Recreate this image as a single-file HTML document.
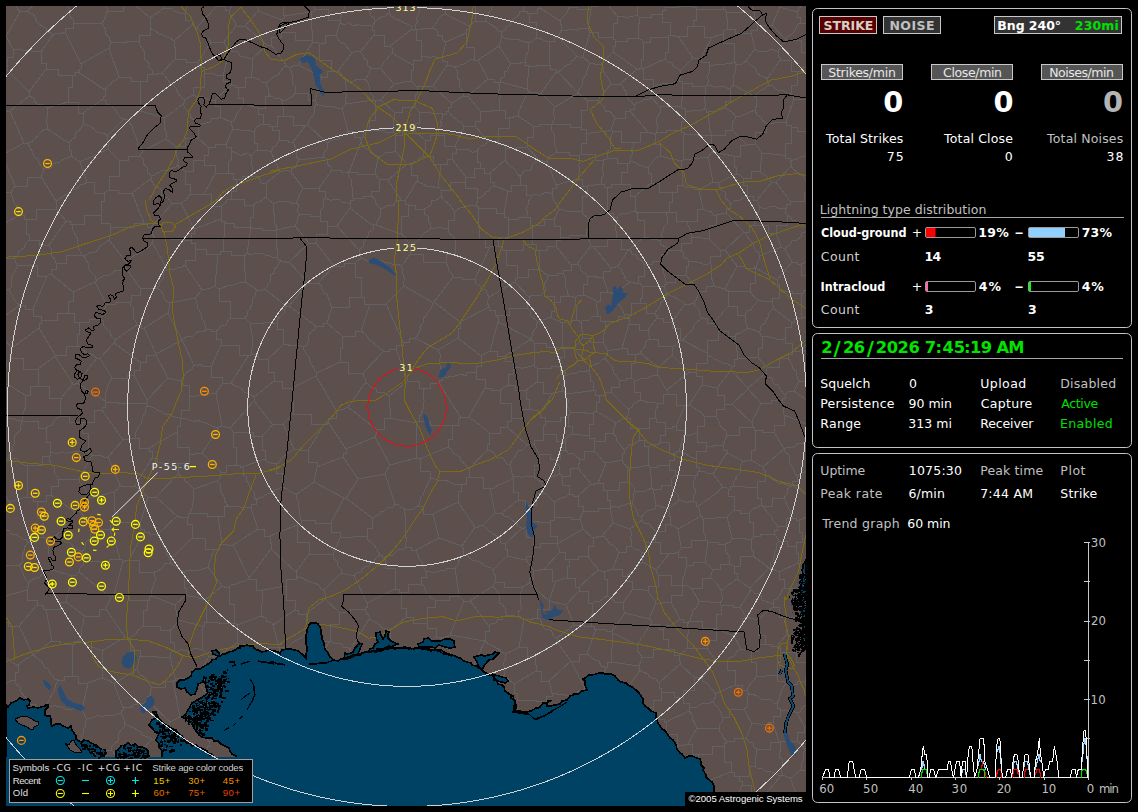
<!DOCTYPE html>
<html lang="en">
<head>
<meta charset="utf-8">
<title>NexStorm Lightning Map</title>
<style>
html,body{margin:0;padding:0;background:#000;}
body{width:1138px;height:812px;overflow:hidden;position:relative;font-family:"DejaVu Sans","Liberation Sans",sans-serif;}
svg{position:absolute;left:0;top:0;display:block;}
text{white-space:pre;}
</style>
</head>
<body>
<svg width="1138" height="812" viewBox="0 0 1138 812">
<rect width="1138" height="812" fill="#000"/>
<defs><clipPath id="mapclip"><rect x="6" y="6" width="800" height="800"/></clipPath></defs>
<g id="map" clip-path="url(#mapclip)">
<g shape-rendering="crispEdges">
<rect x="6" y="6" width="800" height="800" fill="#5d4f4b"/>
<path d="M-24 8L4 -7M4 -7L6 -4L10 -0L11 4L15 4L17 8L20 12M-16 35L6 36M20 12L6 36M340 362V348H342V336M340 362H348V373H363M363 373L384 351M384 351L380 349L379 347L375 345L373 342L369 340L367 336L365 334L361 331M361 331H355V336H342M61 416H69V422H82M61 416L57 418L54 421L52 425L49 426L46 428M46 428V442H50V452M50 452L54 453L59 453L63 452L67 454L68 453L73 452L76 451L82 452L86 453L88 451M82 422V433H88V451M25 395L25 399L25 401L26 406L24 411L23 413L22 419L23 421M25 395H30V386H38M23 421H38V428H46M61 416L60 412L60 408L60 405L61 400L61 398M38 386H49V398H61M77 383L105 401M77 383L97 358M97 358H98V358H100M100 358L112 378M105 401L105 398L106 392L107 389L108 385L110 381L112 378M102 410H94V422H82M102 410V407H105V402M73 384L61 398M73 384H75V383H77M105 402V402H105V401M1 515L-44 504M1 515V509H9V502M9 502L7 499L6 496L4 493L1 489L-1 486L-3 482M695 475L675 476M695 475L695 478L693 484L694 488L696 491L695 493L693 497L694 502M694 502L689 501L688 503L683 501L679 500M679 500L678 495L675 492L673 489L671 485M671 485L672 479L675 476M794 99L798 100L802 99L806 100L808 99L813 98L816 97L819 98M794 99L786 122M806 131L817 126M806 131H797V127H791M791 127V125H786V122M386 304L403 342M386 304H380V304H370M384 351H389V349H396M370 304L361 331M396 349V345H403V342M386 304L404 286M415 338H409V342H403M415 338L417 336L420 331L421 327L420 327L423 323L423 318L426 316L427 313L430 310L432 306L432 302M404 286L432 302M252 354H250V355H249M252 354H258V359H268M268 359V372H274V381M249 355L231 383M231 383L235 386L237 386L241 388L244 392L247 393L251 395L254 397M254 397L274 381M168 313L169 309L170 303M168 313L182 340M170 303L195 298M195 298L196 300L197 304L197 307L200 312L202 316L201 318L204 321L205 325L206 329M182 340L186 337L190 336L193 336L196 333L199 331L204 332L206 329M249 355H239V345H221M222 384L228 383L231 383M222 384V377H211V367M211 367L221 345M7 362L4 362L-2 361L-5 361L-7 359L-12 360L-15 359L-18 358L-23 359M7 362L4 382M4 382L0 386L-4 386L-7 390L-10 394L-13 395M73 292L95 282M73 292V301H68V313M68 313H74V322H79M79 322H89V319H100M95 282L106 304M100 319L103 316L104 313L105 308L106 304M115 340V341H114V343M115 340L112 337L110 334L110 332L107 329L103 325L103 321L100 319M114 343L100 358M97 358L94 356L91 354L87 353L83 350L80 347L77 346M77 346V334H79V322M137 325L115 340M137 325L136 322L133 317L133 313L133 308L130 305L131 302M131 302H115V304H106M114 343L140 362M112 378H127V375H134M140 362V370H134V375M146 403V402H147V400M146 403H118V402H105M147 400L134 375M-18 447L6 458M22 422L19 420L16 420L11 418L7 419L3 418L-1 418M22 422L21 425L20 431L17 433L15 436L14 439L15 442L12 448L12 451L10 453L8 458M8 458H7V458H6M-3 482L6 458M25 395L4 382M23 421L23 421L22 422M50 452V455H49V456M49 456H42V465H27M27 465L24 465L18 461L17 459L13 458L8 458M9 502L27 497M27 497L27 465M27 497H33V501H37M49 456L49 459L51 464L54 467L54 469L54 473L57 476L58 479M37 501H46V495H51M58 479V486H51V495M92 455L90 454L88 451M92 455L79 479M58 479L79 479M1 515V519H3V528M-15 549L3 528M-8 325L20 305M20 305L17 303L14 300L13 297L10 292L9 289M-16 290L9 289M11 358L12 348M11 358H23V369H38M12 348L39 328M39 328L55 355M38 369L55 356M55 356V355H55V355M-8 325L12 348M7 362L11 358M38 386V376H38V369M20 305H25V309H33M33 309V316H41V320M41 320V323H39V328M77 346H66V355H55M41 320H57V313H68M73 384L55 356M435 600V607H427V623M435 600L431 598L429 595L426 592L424 586L421 584M427 623H413V617H406M421 584H408V592H401M406 617V608H401V592M678 529L701 516M678 529L670 524M694 502H696V506H698M679 500L676 503L672 506L669 509M670 524V516H669V509M698 506L701 516M695 475H697V471H699M713 474L709 473L706 473L704 471L699 471M713 474L723 487M698 506L699 505L704 502L707 500L710 498L712 496L714 495L718 492L720 489L723 487M671 485H661V489H653M669 509L656 505M653 489L656 505M687 221H676V212H669M687 221H697V209H703M672 192V202H669V212M672 192H677V185H682M703 209L699 190M682 185L685 187L687 187L692 187L695 189L699 190M404 286L403 283L405 279L403 274L402 268L401 266M410 254L408 257L404 263L401 266M410 254H423V262H446M434 302L453 277M434 302H433V302H432M446 262L448 267L448 270L452 274L453 277M701 58H698V58H693M701 58L712 37M693 26H704V37H712M693 26H687V36H678M693 58L678 36M827 481H816V470H809M815 500L792 485M809 470L797 476M792 485V481H797V476M815 446L815 450L813 452L813 456L811 458L812 462L810 468L809 470M39 816L41 812L41 809L39 806L42 800L43 798L42 794L43 790L43 787L44 782L44 779M10 805V790H15V780M10 805V809H17V813M15 780H29V779H44M-23 798L10 805M-2 766H1V765H3M3 765L15 780M823 792H813V796H797M804 819H799V809H794M797 796L797 799L796 805L794 809M822 771L819 772L813 772L808 771L806 771L801 770M801 770L801 768L802 763L804 759L803 757L804 752L804 748M804 748H816V748H827M797 796L790 778M790 778L793 777L797 773L799 771L801 770M281 32H295V40H312M281 32V24H282V20M282 20L284 18L284 16M284 16L311 12M311 12V30H312V40M314 9L314 5L313 -0L315 -4L315 -7M314 9L314 11L311 12M283 -8L284 16M313 42L298 65M313 42L312 40L312 40M298 65H292V67H289M281 32V37H271V45M289 67L287 66M271 45L287 66M340 362L317 373M317 373L315 371L314 368L311 364L309 359L309 357L306 354L304 350L303 347M342 336L327 323M303 347L307 345L309 339L308 337L311 332L315 329L316 326M327 323H323V326H316M131 302V295H140V288M96 280V281H95V282M96 280L100 278L103 276L104 275L109 275L113 273L115 270L120 271L122 270L125 267M125 267L140 288M168 313L144 328M170 303L166 301L163 296L164 295L160 290L157 288M144 328H141V325H137M157 288H151V288H140M553 393L540 413M553 393H543V382H537M529 409V399H526V390M529 409L533 410L537 410L540 413M526 390L537 382M485 388H491V390H500M485 388L469 417M500 390V403H511V418M469 417L471 419L475 421L477 423L480 425L483 428L485 429L489 433M489 433H500V427H507M511 418V421H507V427M476 373V379H485V388M476 373L473 372L467 373L466 376L461 374L458 375L455 376L451 376L446 378L442 377M461 418L439 383M461 418L465 417L469 417M442 377V380H439V383M529 409H522V418H511M508 385H515V390H526M508 385L500 390M216 393L222 426M216 393L222 384M222 426L225 427L230 428M254 397V399H254V401M230 428L254 401M268 359L283 345M317 373L316 376M283 345L287 344L290 346L294 345L299 345L303 347M274 381H282V388H292M316 376L292 388M363 373L363 376L366 379L365 383M348 407L365 383M348 407L344 409L340 410L336 410M316 376L336 410M215 286L211 288L207 289L202 290M215 286L217 288L219 288M195 298L202 290M216 331H211V329H206M216 331L219 329L222 325L226 325L227 322L230 318M219 288V301H230V318M156 354L156 355L156 355M156 354L182 340M156 355L168 378M182 340L194 365M194 365L192 369L189 371L185 374L182 379L181 381M181 381L168 378M144 328L156 354M140 362H146V355H156M182 340L181 339L182 340M147 400L168 378M211 367L206 366L203 367L201 364L196 366L194 365M221 345V339H216V331M189 397L216 393M189 397V385H181V381M-7 194H-1V192H11M-7 231L19 215M19 215L18 211L18 208L16 205L13 202L13 199L12 196L11 192M2 155L-14 150M2 155L15 186M15 186L11 192M815 511L812 512L808 515L807 517L802 519L799 520M819 542L802 538M802 538V532H799V520M816 322L813 322L810 322L806 317L802 318M820 329L802 349M802 349L800 351L796 351L792 351M785 338V343H792V351M785 338V327H791V322M802 318H794V322H791M785 684H797V681H805M785 684V681H777V675M810 662L805 681M810 662H796V652H780M777 675V662H780V652M350 778L350 782L347 785L347 788L345 791M350 778L348 773L346 771L345 768L340 764L339 761L336 757L334 755M345 791H336V799H325M325 799L307 768M307 768L334 755M362 772V762H369V748M362 772L358 774L353 777L350 778M369 748L367 744L364 743L361 740L360 736L358 732M334 750V754H334V755M334 750L358 732M358 732L359 731L358 732M394 677L407 655M394 677L390 676L387 675L384 673L379 674L375 672L371 673M407 655L404 653L399 649L398 648L396 646L391 642M371 673V669H365V663M391 642L365 663M556 459H550V454H539M556 459L557 463L559 466L559 472L559 474M539 454V465H534V477M534 477L541 482M541 482L559 474M678 529L681 547M701 516H702V519H704M681 547H691V540H706M704 519L703 525L703 527L704 533L705 535L706 540M785 338L782 340L776 339L773 338L769 337L764 336L762 337M773 308L791 322M773 308L772 310L769 313L768 317L766 320L765 323L761 326L760 331L759 332M759 332L761 335L762 337M766 367L758 357M766 367H779V358H788M788 358V354H792V351M762 337V348H758V357M774 432V425H784V415M774 432L784 449M784 415L807 424M784 449L784 449M784 449L787 447L793 447L796 446L797 443L802 444L805 442L808 442M807 424L808 426L809 433L808 435L809 437L808 442M815 446L811 443L808 442M797 476L795 473L793 468L791 465L790 464L789 460L789 455L785 452L784 449M818 409L816 412L814 414L811 419L808 422L807 424M675 476V470H669V465M699 471V467H696V459M669 465V460H674V453M674 453H676V451H679M679 451L683 453L686 454L689 456L691 457L696 459M713 474L727 453M727 453V450H723V445M723 445H713V446H706M706 446V451H696V459M665 428V435H660V442M665 428V422H656V418M656 418H649V428H639M660 442L658 445L654 444L649 446M649 446H644V440H640M640 440L639 428M611 392V387H619V380M611 392L628 409M619 380H626V378H631M640 400L637 402L633 404L632 407L628 409M640 400V392H634V380M634 380L632 378L631 378M657 403L658 406L655 411L655 415L656 418M657 403L653 402L649 403L644 401L640 400M626 418H630V428H639M626 418L628 415L628 409M727 435H739V427H752M727 435L726 431L722 428L720 425L719 421L718 420L716 416M752 427L752 423M732 404L752 423M732 404H729V404H724M716 416V409H724V404M659 367L657 371L658 375M659 367L672 355M672 355L689 372M689 372L667 390M667 390L665 388L664 386L661 380L660 379L658 375M635 354H638V353H640M635 354V363H631V378M640 353L644 356L645 357L649 360L654 364L655 364L659 367M634 380L638 380L642 378L644 379L648 378L650 377L654 375L658 375M657 403H663V394H667M667 394L667 393L667 390M653 489H652V488H652M669 465H657V467H650M652 488L651 484L651 482L651 477L650 475L651 472L650 467M674 453H669V442H660M649 446L648 465M648 465H649V467H650M660 241L655 239L652 240L648 237L644 237M660 241L663 238L661 235L663 231L664 227L667 224L668 218L666 214L669 212M669 212L637 213M644 237V220H637V213M687 221L688 225L690 229L691 232L691 237M703 209L707 211L711 211L713 215L716 215M716 215V225H709V239M691 237L695 238L700 237L702 238L705 238L709 239M716 215L726 213M725 250L724 250L720 250M725 250L744 232M744 232L726 213M709 239L720 250M725 250L737 266M737 266L725 289M713 286L713 282L711 277L712 274L711 271L711 265L710 262M713 286L725 289M710 262V256H720V250M558 72L578 93M558 72L561 70L563 68L567 65L570 64L572 60L574 60L577 56M578 93L578 91L581 87L583 83L582 80L586 75L586 73L587 70L589 65L590 63M590 63L583 57M577 56L579 57L583 57M588 29L585 28L579 28L577 31L573 29L568 30L567 31L561 30M588 29L590 32M590 32L583 57M558 37L560 33L561 30M558 37L577 56M587 100L584 98L582 96L578 93M587 100V110H581V127M578 93L555 107M581 127H570V124H552M555 107L553 111L554 116L554 120L552 124M713 182L699 190M713 182L718 183M726 213V208H730V204M718 183L719 185L721 190L725 192L725 198L729 201L730 204M448 229V220H454V211M448 229L449 233L453 236L455 239M455 239L479 239M478 208V227H479V239M478 208V206H476V205M476 205L472 205L468 206L464 208L461 207L456 211L454 211M560 21L540 8M560 21L561 19L566 14L568 10L570 7M570 7L568 4L566 2L565 -3L563 -5L562 -9M546 -4V2H540V8M591 9H577V7H570M591 9L588 29M561 30V24H560V21M794 99L793 95L791 94M823 80L807 67M791 94V85H797V71M807 67H802V71H797M701 58V62H709V65M709 65L714 65L717 64L720 64L722 65L728 63L729 64L734 62M712 37L714 37L719 35L723 34M734 62V43H723V34M590 32H598V37H613M590 63H594V64H601M615 41V39H613V37M615 41V46H613V52M613 52L601 64M693 6V-10H694V-18M693 6V7H696V9M696 9H705V9H723M722 -13V-2H723V9M665 7L665 2L664 -0L662 -5M665 7H678V6H693M693 26V20H696V9M726 12V18H727V29M726 12L725 9L723 9M723 34L723 31L727 29M756 97L734 85M756 97L757 94L761 90L764 89L768 85M768 85V81H767V79M767 79L763 76L761 76L757 73L755 67L754 67L750 65L746 61M734 85L733 83L733 79L734 75L735 73L735 68L737 64M746 61L742 64L737 64M791 94L787 93L782 90L778 91L774 87L772 85L768 85M797 71H791V60H780M780 60L767 79M786 635H792V635H805M786 635L777 646M810 662L818 655M780 652V648H777V646M805 635L818 655M758 620L773 607M758 620V635H765V644M786 635V625H785V617M765 644H771V646H777M785 617H779V607H773M723 487L727 488L728 489M704 519L727 517M727 517L734 510M734 510V496H728V489M68 822L81 799M48 775V778H44V779M48 775L51 775L55 775M81 799L55 775M48 775L40 749M3 765L4 763L7 761L10 757L12 752L16 749L18 747M18 747L23 748L25 747L30 749L32 747L36 749L40 749M-5 723L8 725M18 747L16 744L14 738L13 735L11 734L9 729L8 725M815 694L812 696L808 698L809 703L806 705L803 707L800 712L797 713M820 726L804 726M797 713L804 726M805 681V685H815V694M785 684L785 685L782 690L781 693L779 698L779 699L777 704M777 704V708H780V710M780 710L782 710L786 710L791 712L793 711L797 713M797 741L802 745L804 748M797 741V732H804V726M282 20L258 11M258 11L258 7L256 3L256 -2M-19 134L6 111M6 111L-12 94M152 74L152 70L148 66L150 64L146 61L144 58L145 53L143 50L142 48L140 45L139 41M152 74H157V73H162M139 41V35H150V28M162 73L175 59M175 59V47H174V41M174 41L170 38L167 37L163 35L159 34L155 31L153 30L150 28M271 45H269V45H267M287 66L284 67L281 71L278 75L275 76L272 78L269 81L266 83M251 77L255 78L260 80L262 82L266 83M251 77V70H252V59M252 59L267 45M258 11L245 26M267 45L245 26M229 10L230 14L231 16L233 19L235 22L236 26M229 10L242 -6M245 26H241V26H236M211 42L224 42M211 42L198 62M223 76L218 75L216 75L212 73L207 74L204 73M223 76L229 51M229 51L226 46L224 42M198 62V67H204V73M252 59L248 58L244 57L240 56L238 52L234 51L229 51M236 26L224 42M162 73L165 76L168 80L170 83L173 85L176 88L178 93L178 93L181 97L184 100M175 59H186V62H198M184 100L193 95M193 95V87H204V73M229 10H225V6H217M211 42L209 39L204 36L201 32L198 29L197 27M217 6L197 27M217 6L207 -14M174 41L192 25M197 27H194V25H192M82 -18L67 5M67 5L45 -5M20 12L25 11L27 11M27 11L45 -5M102 23L104 27L106 30L105 34L109 37L109 39L111 42M102 23L73 23M81 64L109 48M81 64L65 32M109 48L110 45L111 42M65 32V28H73V23M152 74H147V81H141M139 41H126V42H111M141 81H131V77H119M119 77L109 48M52 36L51 33L46 32L46 28L42 26L39 24L37 22L35 17L33 14L30 13L27 11M52 36L57 33L60 34L65 32M67 5L69 9L69 13L69 16L73 19L73 23M134 4H123V11H107M134 4L135 -1L136 -4L134 -8L136 -12L137 -16M101 -8L101 -3L104 1L106 3L107 8L107 11M150 18V23H150V28M150 18L134 4M102 23L104 20L106 15L107 11M370 304H364V297H361M327 323L332 307M361 297H349V307H332M360 259L357 261L355 263M360 259L363 258L367 261L370 262L375 261L377 260L382 261L384 262L386 262L392 264L395 266L398 264L401 266M361 297V277H355V263M251 156L253 176M251 156L247 153L242 155L240 155L236 153L231 151M231 151L231 155L232 159L229 161L228 165L228 170L228 173M228 173H233V179H236M253 176H242V179H236M251 156L255 152L257 150M280 172L266 183M280 172L271 152M253 176L257 176L260 180L261 183L266 183M257 150L262 150L268 151L271 152M299 160L297 163L296 167L291 169L291 172M299 160L296 156L297 152L296 149L294 144L293 142M291 172L287 170L280 172M293 142H288V140H279M271 152L273 147L276 146L279 140M289 67L290 69L293 76L292 78L292 83L295 86L296 91L295 93M295 93L293 96L290 98L286 100L282 101M266 83L267 87L268 88L268 94L271 96M282 101L280 98L276 99L271 96M306 125H293V116H283M306 125L293 142M279 140V130H272V126M283 116H277V126H272M332 307L330 304L330 302L328 297L327 294L324 293L322 289L321 285L318 283M355 263H344V266H334M334 266L318 283M202 290L185 265M157 288L159 286L160 282L163 279L163 275L164 272L167 269M167 269L169 269L175 269L177 268L182 267L185 265M218 254H206V249H195M218 254L215 286M185 265V260H195V249M271 549L296 572M271 549V543H270V536M296 572L309 554M309 554V542H297V525M297 525L270 536M476 373V366H481V356M438 350L440 354L440 359L439 363L440 365L441 369L442 373L442 377M438 350L458 338M481 356L458 338M415 338L438 350M434 302L460 322M458 338V328H460V322M390 418V408H389V396M390 418L416 423M419 421L419 417L421 414L423 409L423 406L424 401L424 400L423 394L423 391L425 388M419 421L416 423M389 396L408 381M408 381H419V388H425M376 429H384V418H390M376 429L348 407M365 383L368 384L371 387L376 389L377 392L383 392L385 393L389 396M452 425H458V418H461M452 425H430V421H419M439 383H430V388H425M396 349L408 381M376 429V434H375V437M375 437L346 449M336 410V418H328V422M328 422L346 449M252 354L251 351L252 347L252 342L252 340L252 335L251 331L251 329L250 323M283 345V329H277V323M277 323L274 324L271 322L266 322L261 324L258 323L255 323L250 323M230 318H237V318H245M250 323L245 318M110 530V525H117V522M110 530L94 529M117 522V512H114V492M114 492L90 498M90 498L80 512M94 529L80 512M51 495L75 512M79 479L79 481L82 486L85 488L85 491L89 496L90 498M75 512L78 511L80 512M123 561L114 595M123 561H125V560H129M114 595H129V600H147M147 600H149V596H152M152 596L151 592L153 587L154 583L155 581L155 577L154 572M129 560H139V572H154M175 605L152 596M175 605L186 595M186 595V588H184V572M184 572L170 563M154 572L158 571L161 569L164 566L165 563L170 563M29 240L26 243L24 248L21 250L19 251L17 257L14 258M29 240H39V245H49M49 245L51 249L51 251L52 256L55 260L56 263M17 265L14 258M17 265H37V276H47M56 263V269H51V274M51 274L48 275L47 276M-8 249H-1V258H14M26 219H24V215H19M26 219V234H29V240M9 289L11 287L11 284L11 278L13 275L14 273L17 267L17 265M33 309L47 276M96 280L95 276L93 274L90 271L88 267L88 263L86 260L84 256M84 256H83V255H82M73 292L51 274M82 255H66V263H56M2 155L24 143M6 111H9V111H10M10 111L24 143M41 177H27V186H15M41 177L42 174L44 170M44 170L42 167L38 162L38 159L35 158L33 154L32 151L30 148L28 143M24 143L28 143M119 77L116 80L112 82L110 85L108 86L105 90M81 64L81 68L78 72M105 90L78 72M193 95L198 97L200 96L203 97L209 100L212 101L215 100M223 76V81H231V85M215 100L231 85M251 77H245V87H238M231 85H235V87H238M143 151L166 139M143 151L141 154L140 156M140 156L143 159L143 164L146 166L147 168L148 173L151 175M177 165L176 167L169 169L168 170L164 170L160 172L159 172L153 176L151 175M177 165L179 161L177 157L176 155L177 150L175 146M175 146L166 139M143 151L140 147L138 145L137 141L136 137L134 133L133 130L132 126L129 122L129 119M140 111L129 119M140 111L165 118M166 139L167 135L166 132L164 127L164 121L165 118M141 81L140 111M184 100V102H183V104M165 118L183 104M810 567L806 595M810 567L798 563M806 595H798V588H784M784 588V579H779V572M798 563L779 572M824 563H814V567H810M802 538V542H796V546M798 563V553H796V546M831 273H818V262H807M807 262L819 240M821 209V218H810V230M819 240L817 236L813 232L810 230M729 306H737V315H745M729 306L725 310L724 311L721 315L720 316L716 320L715 323M718 331V326H715V323M718 331H728V336H735M735 336L737 333L740 333L745 330L748 328M745 315L746 318L745 321L746 324L748 328M699 291H706V286H713M699 291L698 295L696 300L694 303M725 289V290H728V292M728 292L728 295L728 300L729 306M694 303L695 306L699 310L700 316L702 318M702 318H707V323H715M702 318L701 319L696 323L694 325L693 330L690 332L687 335L685 338L682 340M682 340L707 353M707 353V340H718V331M759 332L748 328M738 359L758 357M738 359L735 336M819 291H812V290H806M807 262L804 263L801 264M801 264V275H806V290M802 318L801 293M806 290H803V293H801M728 292L750 291M745 315L747 311L751 310L753 306L757 302L759 300M759 300L755 298L752 294L750 291M773 308L773 306L772 302M759 300L762 301L768 301L772 302M801 293H792V291H779M772 302V298H779V291M737 266H745V268H755M750 291V283H755V268M818 408L794 391M794 391L799 381M799 381H808V374H820M802 349L819 363M788 358L790 361L792 365L793 369L796 371L797 376L797 377L799 381M765 644H758V651H751M777 675L756 677M751 651V662H756V677M777 704L774 703L771 700L765 699L763 700L758 697L757 696L752 694L749 694M756 677L754 680L751 683L748 688L747 690M749 694V693H747V690M702 678H699V677H694M702 678L703 681L708 684L711 689L713 690L715 694M694 677V690H683V697M715 694V698H713V701M713 701L710 703L705 704L703 703L699 705L697 707L691 707L689 709M683 697V703H689V709M797 741L780 742M790 778L782 775M780 742L780 745L781 751L779 752L779 757L782 759L783 763L781 768L782 773L782 775M780 710V716H773V723M773 723L779 742M780 742L779 742M751 651L745 649L741 649M735 685H742V690H747M735 685V670H727V662M741 649L737 651L735 655L734 656L729 658L727 662M735 685L715 694M702 678L716 661M716 661L718 661L724 661L727 662M394 677V687H403V694M371 673L371 675L369 678L369 683L369 688L368 689L367 692L366 697M377 712V704H366V697M377 712H380V712H386M386 712L387 708L390 707L392 704L395 700L399 699L399 697L403 694M318 808L320 811L321 815L321 820M318 808V803H325V799M345 791L349 795L351 795L352 800L355 804L359 805M356 829V818H359V805M300 765V749H297V732M300 765H303V768H307M334 750L331 749L330 744L327 740L323 739L322 735L317 732L316 729M297 732H305V729H316M358 732L354 729L352 726L350 724L345 723L343 718L341 718L337 713L332 713L331 710M316 729L316 727L320 725L323 722L325 718L325 716L329 712L331 710M377 712L358 732M366 697H354V695H333M333 695V698H331V699M331 710L332 706L332 704L331 699M727 517L732 538M732 538L730 542L725 544M706 540L707 540L708 542M725 544H718V542H708M655 542H645V552H641M655 542V534H656V531M656 531L653 529L650 525L649 523L644 523L642 520M641 552L638 549L634 549L631 546M631 546L632 542L630 537L632 535L630 529M642 520L639 522L637 523L634 526L630 529M670 524H665V531H656M656 505L655 509L651 510L647 511L644 514L642 517M642 517L641 519L642 520M619 552L616 548L614 546L610 544L608 541L605 537L602 536M619 552H626V546H631M613 523L602 536M613 523L630 529M681 547L681 549L678 552M655 542H660V553H670M670 553H675V552H678M761 403L748 389M761 403H771V400H782M785 395V398H782V400M785 395L784 394L780 389L778 385L774 384L773 382L772 378L767 377L766 373M766 373L748 388M748 388V389H748V389M732 404L748 389M752 423L752 421L754 417L756 414L758 410L759 407L761 403M755 430H754V427H752M755 430H762V432H774M784 415L783 410L784 407L783 404L782 400M794 391L788 392L785 395M766 367V369H766V373M676 426V430H684V435M676 426L685 405M684 435L690 435L693 434L697 433M697 433V426H704V416M704 416L702 413L699 411L697 410L694 408L689 405M685 405H686V405H689M679 451L684 435M665 428H672V426H676M667 394H676V405H685M706 446V442H697V433M727 435L725 440L723 445M716 416H710V416H704M591 484L578 468M591 484L578 496M578 496H573V494H569M569 494V485H562V476M562 476H570V468H578M640 353L643 349L645 346L646 341L650 339M672 355L673 346M673 346H658V339H650M694 303H690V304H685M682 340H681V340H680M685 304L672 322M680 340V328H672V322M707 355V363H696V372M707 355L712 357L714 359L717 360L721 362L723 363L727 363L731 366M731 366L731 370M731 370L717 388M696 372V376H702V385M717 388L702 385M707 353L707 355M689 372H693V372H696M673 346L676 345L680 340M738 359H734V366H731M748 388L731 370M724 404V395H717V388M689 405L702 385M624 450L628 447L630 444L634 444L637 442L640 440M624 450V453H622V460M648 465L644 466L639 467L636 467L631 467L628 467M622 460L624 464L628 467M495 513H498V513H502M495 513L483 525M483 525L485 527L488 530L493 534L493 533L497 536L500 538L501 543L505 544M505 544L522 528M502 513L504 516L509 517L510 518L512 520L515 522L519 527L522 528M505 544V549H507V556M507 556L526 560M533 547V556H526V560M533 547V537H526V527M522 528H524V527H526M490 488L494 488L498 485L502 484L506 482L508 481L513 478M490 488H483V477H469M487 450L490 450L495 454L496 457L500 457L504 459L507 464L510 465M487 450L469 469M510 465L513 477M469 477V472H469V469M513 477V478H513V478M495 513L490 488M502 513L518 500M518 500V492H513V478M483 525H478V527H475M475 527L458 502M458 502V491H461V484M461 484H466V477H469M526 444L526 446L522 450L518 451L516 455L514 458L512 460L510 465M526 444L507 427M489 433V444H487V450M452 425V439H448V447M448 447L451 449L453 453L455 454L460 457L461 461L465 464L467 467L469 469M534 444L539 454M534 444H529V444H526M534 477L529 476L524 476L522 478L518 476L513 477M475 527L462 546M458 502L433 514M433 514L439 538M462 546L439 538M421 584V577H426V572M401 592H399V589H395M395 589V568H385V557M385 557L390 555L393 555L395 553L399 549L403 550L406 547M406 547H411V550H416M416 550L417 553L419 558L420 560L423 563L422 565L425 570L426 572M583 529L593 538M583 529L557 544M593 538V546H588V556M560 552L557 544M560 552H565V559H569M588 556H578V559H569M613 569L610 570L604 572M613 569L619 552M604 572L601 571L598 570M602 536L593 538M588 556L591 560L593 564L597 567L598 570M610 267V271H603V277M610 267H615V266H618M618 266L621 269L622 272L624 275L626 280L630 282M603 277L608 292M630 282L615 294M608 292L615 294M593 246H607V239H616M593 246L610 267M616 239H621V249H629M629 249L618 266M629 249L630 249L630 249M630 249L632 254L636 255L638 259L642 261L644 264M630 282H634V283H638M644 264V276H638V283M709 65L709 69L709 73L707 77L709 81L707 85M734 62H735V64H737M734 85L730 88M707 85L712 86L716 87L718 87L723 86L727 88L730 88M713 182L708 157M718 183L736 174M736 174V167H734V156M708 157L712 152M734 156L712 152M809 182L805 179L804 177L799 173L797 172L793 169L791 166M809 182L823 162M810 151L813 153L819 154L822 157M810 151L807 152L805 156L801 157L797 159L793 160L790 162M790 162L792 165L791 166M813 194H812V192H811M811 192L809 188L809 182M806 131V139H810V151M791 127V143H785V156M785 156V158H790V162M478 208H496V213H504M504 213L508 191M508 191L494 186M476 205V202H477V200M477 200L481 197L484 195L486 192L489 191L490 188L494 186M424 209H415V205H408M424 209L424 214L428 216L428 222L430 223L431 228M408 205V216H401V234M431 228L428 231L424 233L422 235L421 237L418 241L414 243L413 244L410 247M410 247L409 244L407 240L405 237L401 234M448 229L444 228L442 228L439 227L433 229L431 228M454 211L451 207L449 204L445 201L443 199L441 196M441 196L439 198L436 200L431 201L431 205L428 207L424 209M405 201V204H408V205M405 201L402 200L401 200M401 200L397 200L395 203L393 206L388 205L385 207L381 209M376 225L377 222L380 217L380 214L381 209M376 225L401 234M410 254V249H410V247M455 239V254H446V262M360 259V253H359V250M359 250L363 247L363 242L365 241L368 236L369 232L373 230L373 226M376 225L374 224L373 226M558 72L556 73L556 72M578 93L577 95L578 93M555 107L541 93M541 93L556 72M417 181L405 201M417 181L420 183L423 184L426 186L431 186L436 188L438 187M441 196L441 192L441 190M438 187L441 190M477 200V188H465V182M441 190H450V182H465M417 181V175H411V164M441 164L438 187M441 164H433V156H423M411 164L414 161L418 161L419 158L423 156M520 185H511V191H508M520 185V181H520V177M490 173V182H494V186M490 173L505 160M505 160L508 164L511 167L513 168L516 171L517 173L520 177M552 124L551 129L554 134L554 136L555 139L554 144L556 148L556 152M552 124H539V126H533M547 161H542V160H539M547 161L550 156L553 155L556 152M539 160L527 147M533 126V137H527V147M505 160V153H505V149M539 160L535 162L532 165L531 170L525 170L522 174L520 177M527 147L505 149M591 9V6H597V3M597 3V-3H594V-6M807 67L810 52M816 48L812 50L810 52M807 -2L805 1L802 5L799 9L797 12M797 12V17H800V23M817 27H807V23H800M727 29H735V33H751M746 61L755 49M755 49L751 33M780 60V57H778V51M755 49L758 51L762 51L768 51L772 49L775 51L778 51M810 52H801V40H786M778 51L786 40M800 23L796 26L796 28L794 32L792 34L787 37L786 40M786 40L785 39L786 40M643 42H650V37H668M643 42L642 40L638 38M638 38V23H639V17M639 17H651V14H662M662 14V22H670V35M670 35L668 35L668 37M641 68H639V69H637M641 68V59H643V42M615 41H627V38H638M637 69L613 52M665 7V10H662V14M678 36H674V35H670M587 100L598 100M581 127V129H586V133M586 133L589 134L593 132L598 133L599 132L605 131L607 131L611 130M611 130L615 118M615 118L612 114L610 111L606 112L604 106L603 106L601 104L598 100M601 64L603 67L604 72L605 75L607 76L609 80L611 84M598 100L611 84M637 69L620 84M611 84L617 84L620 84M814 620V611H810V606M811 601V605H810V606M811 601H817V596H828M805 635V625H814V620M785 617H801V606H810M806 595V599H811V601M784 588L781 592L781 593L777 599L774 600L773 604M773 604V606H773V607M733 486L757 488M733 486L734 482L737 477L736 477L740 473L740 467L741 465L743 461M757 488V481H765V475M751 460H745V461H743M751 460L763 467M763 467V470H765V475M734 510H740V513H749M728 489H730V486H733M749 513L753 509L758 507L761 505M761 505V498H757V488M727 453L743 461M755 430V450H751V460M784 449L763 467M790 486L787 485L782 483L778 483L776 481L773 480L769 475L765 475M790 486H791V485H792M192 538V524H187V517M192 538L170 560M187 517L182 518L177 516M170 560L158 534M177 516L158 534M129 560L144 532M170 560L171 563L170 563M158 534H149V532H144M120 559H122V561H123M120 559L119 555L118 552L117 548L116 545L115 540L111 537L111 533L110 530M117 522L120 523L125 522L130 522L134 523L136 525L140 525M140 525V529H144V532M92 455L95 455L99 455L104 457L108 457M114 492L118 489L120 485M120 485L108 457M102 410L123 440M108 457L123 440M146 403L147 404L147 406M147 406L145 408L145 413L143 416L142 419L141 424L137 428L137 430L135 434L135 438M123 440L135 438M229 506L226 504L224 499L224 497L221 492L220 488L220 484L217 481M229 506H224V516H218M218 516H207V513H190M190 513L192 508L192 506L193 502L194 498L193 493L194 489M194 489L217 481M229 506L251 508M256 500V504H251V508M256 500L254 497L254 492L253 491L249 486L249 484L246 480L247 477L243 475L244 471L242 467M242 467H240V465H236M236 465H226V472H221M221 472L220 478L217 481M249 579L250 580L249 578M249 579L245 581L242 581L240 582L236 584L231 585L229 587M249 578L233 545M229 587H224V586H222M222 586L208 567M208 567L209 563L211 559L211 556L213 553L213 549M213 549H219V544H222M233 545H227V544H222M263 590L286 586M263 590H256V579H249M271 549L249 578M296 572L296 574L296 575M296 575V579H286V586M258 529H264V536H270M258 529L233 545M186 595L191 597L193 596L199 598L200 598L205 600M184 572L186 571L190 570L196 570L199 570L203 569L206 568L208 567M205 600L222 586M192 538H205V549H213M218 516L222 544M187 517H188V513H190M251 508L258 529M81 799H83V798H85M85 798L115 814M765 806L750 824M765 806H775V812H787M787 812V825H778V832M794 809H791V812H787M763 797L765 806M763 797L781 776M781 776L782 775M29 92L7 70M29 92L46 69M41 52L13 49M41 52V63H46V69M13 49V57H7V70M-6 74L-4 74L-1 70L3 72L7 70M10 111L29 96M29 96V93H29V92M6 36L13 49M52 36L41 52M78 72H75V75H72M72 75H58V69H46M194 -12L185 13M166 -18V-4H164V8M164 8L166 8L172 9L174 11L180 13L182 13L185 13M192 25V20H185V13M150 18L164 8M181 203L186 200L188 197L190 194M181 203L194 229M190 194H196V194H204M204 194H211V206H221M194 229L221 219M221 206V211H221V219M185 171V184H190V194M185 171H193V160H204M204 160V165H215V174M215 174L204 194M228 173L215 174M231 199V191H236V179M231 199L227 200L226 203L221 206M218 254H220V251H223M225 223L223 251M225 223V221H221V219M195 249V243H191V240M191 240V233H194V229M231 151V147H226V144M204 160V155H208V147M226 144H215V147H208M215 100V106H220V117M183 104L185 108L187 110L190 114L190 117L194 120L196 122L198 125M220 117L217 119L212 118L210 122L206 123L202 124L198 125M177 165L185 171M175 146H185V138H198M208 147L198 138M198 138V129H198V125M291 172L303 188M266 183L266 197M303 188L296 203M296 203L294 204L289 202L284 201L281 201L275 203L273 203M273 203L270 201L266 197M231 199H244V205H253M266 197L262 200L259 202L256 203L253 205M225 223H234V227H250M253 205V217H250V227M167 269L152 242M191 240L189 240L184 241L180 239L177 240L172 239L170 239L166 238L160 238L156 239L154 237M154 237L152 240L152 242M125 267V265H126V262M152 242L150 246L148 248L144 249L142 252L138 254L135 255L131 258L129 259L126 262M84 256L88 254L90 252L95 252L98 250L98 248L103 244L105 243L109 240M126 262L109 240M82 255L80 251L79 249L78 244L77 243L78 239L74 233L74 232L72 228L72 224M109 240V235H110V227M110 227V223H101V215M101 215H84V224H72M49 245L66 221M66 221H70V224H72M26 219H36V209H56M66 221L56 209M41 177L56 201M56 209V204H56V201M172 204L171 202L167 197L165 197L161 195L161 189L156 186L155 186L153 183L150 179M172 204L151 227M151 227H147V223H144M144 223L132 193M150 179L132 193M151 175V178H150V179M181 203L172 204M154 237L152 234L153 231L151 227M110 227H134V223H144M297 525V523H301V520M256 500L259 498L263 497L265 495L269 493L272 494L276 489L278 489L282 487M301 520L300 517L299 512L299 508L298 505L298 501L296 497L297 494M282 487L287 489L289 491L293 493L297 494M534 444V440H543V434M540 413V417H545V421M543 434V425H545V421M626 418L623 419L616 423M624 450L621 446L620 444L617 441L616 437L613 433M616 423L614 428L613 431L613 433M566 394L566 397L569 400L567 406L569 409L570 412M566 394L571 393L574 393L577 392L580 393L585 391L588 392L593 390M570 412H585V413H593M593 390H595V395H599M599 395V402H596V411M596 411L593 413M562 391L558 392L553 393M562 391H564V394H566M568 417H560V421H545M568 417V414H570V412M562 391L565 375M565 375L567 375L573 373L576 374L578 372L582 371L584 372L589 370M589 370L590 374L590 376L590 381L593 382L593 387L593 390M611 392H604V395H599M616 423L596 411M619 380L616 375L614 374L613 370L612 366L609 363L608 362L605 358M589 370L590 366M590 366L594 365L599 363L602 360L605 358M622 348H627V354H635M622 348L618 350L615 349L613 350L608 351M608 351L606 356L605 358M596 301L593 299L590 298L587 296L583 295M596 301H600V292H608M603 277H596V276H587M583 295V284H587V276M593 246L591 247L591 246M591 246L577 264M587 276L586 274L581 271L580 266L577 264M586 235L588 239L590 242L591 246M586 235H569V237H560M560 237V240H556V246M556 246L571 265M577 264L571 265M534 343H546V347H562M534 343L534 365M534 365L535 367L537 368M537 368H551V366H560M560 366V357H564V349M564 349H563V347H562M513 369V374H508V385M513 369L517 367L521 368L523 368L528 367L531 366L534 365M537 382L537 368M565 375V372H560V366M573 348L590 366M573 348L569 348L564 349M525 217L528 214L526 209L528 205L528 202L531 198L532 195M525 217H530V225H533M533 225H544V219H554M532 195L536 194L540 196L544 193L547 192L552 194M552 194L553 198L554 201L558 206L559 209M559 209L558 211L556 216L554 219M508 219V217H504V213M508 219H518V217H525M520 185H526V195H532M560 237V226H554V219M556 246H547V250H539M532 244H536V250H539M532 244L533 225M556 185V188H552V194M556 185L547 161M586 235V229H588V218M588 218L584 215L582 211M582 211L578 212L575 211L570 211L566 211L564 210L559 209M475 279L490 247M475 279L476 284L480 286L480 288L486 290L487 294L489 297M489 297L515 282M506 250V265H517V277M506 250H502V246H498M515 282V278H517V277M498 246L490 247M453 277H462V279H475M479 239H485V247H490M489 307L460 322M489 307L487 302L488 300L489 297M539 269V259H539V250M539 269H528V277H517M532 244H523V250H506M508 219V237H498V246M405 509L401 507L399 505L395 504M405 509L408 509L414 509L417 506M417 506L419 505L420 501L421 497L423 495L424 492L426 488L428 483L429 481L430 478M395 504L385 474M385 474L390 465M390 465L416 458M430 478V471H420V459M416 458H419V459H420M406 547L405 544L407 540L405 535L406 532L405 529L405 524L405 519L406 516L404 513L405 509M433 514H423V506H417M439 538L416 550M461 484L457 485L454 484L450 482L445 480L441 481L437 480L435 479L430 478M375 437L390 465M358 479L343 457M358 479L385 474M346 449V453H343V457M416 423L416 458M448 447L420 459M316 326L289 306M318 283H314V283H308M308 283L289 306M277 323L277 319L280 317L284 313L285 309L286 306M289 306L286 306M120 559H109V561H84M110 597L79 572M110 597L111 597L114 595M79 572L80 568L83 565L84 561M94 529L91 533L90 534L90 539L86 542L85 546L85 548L82 552M84 561L84 556L82 552M75 512L73 515L71 518L69 522L67 524L63 527L62 530L60 532L56 535M82 552L79 550L75 549L72 545L70 543L66 542L61 539L60 538L56 535M29 96L34 98L34 100L37 104L42 104L44 105L47 108M28 143L31 142L34 140L39 134L40 133L44 130L47 129M47 108L47 111L48 115L46 121L48 125L47 129M72 75V87H68V102M47 108L68 102M71 156L68 158L65 158L60 162L58 162L53 164L51 168L46 168L44 170M71 156V150H69V143M47 129L69 143M103 99L83 113M103 99L105 100L107 104L112 106L115 109L116 111L119 116L121 118L124 119M107 136L124 119M107 136L105 133L101 133L97 132L95 130L90 126L86 125L84 124M84 124L83 120L84 116L83 113M105 90V96H103V99M68 102H78V113H83M129 119H127V119H124M69 143L73 138L75 138L76 132L79 131L81 128L84 124M258 108V114H263V124M258 108L243 104M243 104L242 106L240 110L236 114L236 116L234 121L231 122M254 132L256 128L260 125L263 124M254 132L251 131L245 130L240 130L237 129L233 129M233 129L231 122M282 101L282 103L283 107L284 113L283 116M271 96H265V108H258M272 126H269V124H263M238 87V98H243V104M220 117L231 122M257 150V143H254V132M226 144L233 129M784 498H772V506H763M784 498L793 518M763 506L765 509L767 512L770 515L772 517L773 521L776 524L777 526M793 518H786V526H777M790 486L787 490L787 494L784 498M761 505H762V506H763M799 520H796V518H793M774 534H760V536H753M774 534L776 536L779 541M779 541L776 544L777 549L774 552L774 557L773 561L771 562L770 568M751 539V550H753V556M751 539V538H753V536M753 556L769 568M770 568L770 569L769 568M749 513V522H753V536M777 526V530H774V534M796 546H787V541H779M779 572L770 568M732 538H745V539H751M730 564L729 560L729 556L726 552L725 547L725 544M730 564L734 566M734 566H740V556H753M734 566V573H737V579M737 579L750 588M750 588L769 568M751 590L751 590L750 588M751 590L754 593L758 593L761 595L762 600L765 601L770 603L773 604M777 280L756 268M777 280L792 262M792 262L785 249M760 256L781 247M760 256L756 268M781 247L785 249M779 291V284H777V280M755 268L754 266L756 268M801 264H797V262H792M810 230L809 230M809 230L805 232L802 233L801 237L797 240L792 241L790 245L786 247L785 249M776 233H768V225H754M776 233L781 247M745 232H749V225H754M745 232L747 236L749 239L751 241L753 244L754 247L756 251L759 253L760 256M744 232L745 232M787 215L790 217L792 220L795 220L798 223L801 226L805 227L809 230M787 215V225H776V233M749 694L747 698L747 703L747 707L744 709M713 701L715 705L717 706L720 711L721 713L722 717M722 717H729V709H744M773 723L769 722L767 725L764 724L759 724L755 723L752 724M752 724L744 709M758 620L746 617M741 649L734 636M734 636L735 633L739 629L741 625L743 622L742 619L746 617M751 590L740 607M721 590L722 595L722 600L720 603M721 590L724 589L728 585L731 583L733 582L737 579M720 603L721 605M721 605H733V607H740M746 617L740 607M689 622L688 622L690 621M689 622L687 625L689 629L688 634L687 636L687 642L687 644L688 648M690 621H702V628H716M688 648H699V648H707M707 648V640H716V629M716 628L716 629M699 601L720 603M699 601L698 604L696 608L693 610L692 615L690 619L690 621M721 605V614H716V628M679 655V661H680V664M679 655L682 654L686 649L688 648M680 664L694 677M716 661L707 648M734 636L716 629M677 745V734H666V722M677 745V750H668V755M668 755H663V756H660M666 722H664V719H659M660 756L640 742M659 719L640 742M362 772L366 774L369 775L371 776L375 776L380 777L383 779L387 780L391 781M369 748H378V750H394M391 781L390 778L392 771L393 770L393 764L393 762L393 758L395 753L394 750M359 805L364 805L366 806L369 806L372 806L377 804L381 805L383 805M385 830L384 827L383 824L385 821L385 816L384 812L385 808L383 805M391 781L398 791M398 791V791H398V791M398 791L383 805M505 653L505 657L505 660L503 664L505 668L505 671L504 675M505 653L501 652L498 648L496 648L493 646L489 644L485 641M485 641L473 667M504 675L482 682M482 682V676H473V667M436 637H440V638H443M436 637L418 655M443 638L446 641L445 646L449 649L450 652L450 656L451 658L454 661L454 666M418 655L418 658L420 663L423 667L422 667L427 673L427 676L427 678L430 683L431 685M454 666L454 669L449 671L450 676L447 678L446 682L442 685M431 685H436V685H442M407 655L412 656L415 656L418 655M427 623V628H436V637M406 617L390 631M391 642V639H390V631M485 641L450 635M485 641L486 640L485 641M450 635L443 638M473 667L454 666M421 694H410V694H403M421 694H427V685H431M479 690H461V696H453M479 690L480 684L482 682M453 696H448V685H442M587 654L590 656L592 658L595 660L599 661L601 666L605 667M587 654L596 629M596 629H606V631H612M611 662L613 633M611 662H607V667H605M613 633L613 633L612 631M639 666L641 661L642 657M639 666L611 662M637 645L637 650L640 654L642 657M637 645L613 633M571 661L584 687M571 661H579V654H587M605 667V670H604V673M604 673L584 687M557 638L554 637L552 632L550 629L546 630L543 627L542 624L540 619L537 618M557 638L557 642M557 642L535 656M524 619H532V618H537M524 619L519 647M519 647H527V656H535M591 626H594V629H596M591 626H584V625H574M574 625L557 638M571 661H571V661H571M571 661L557 642M571 661L549 681M536 671V665H535V656M536 671H541V681H549M507 615H514V616H519M507 615L503 617L502 620L498 619L496 623L491 624L489 626M519 616L524 619M489 626V631H485V641M505 653L507 653L512 651L516 649L519 647M514 684L504 675M514 684L536 671M372 518V528H367V536M372 518L346 498M367 536L340 538M346 498L344 498M344 498L331 523M331 523V532H340V538M385 557H382V555H380M380 555L378 552L377 549L374 545L371 542L368 540L367 536M395 504L393 507L388 507L384 511L381 511L380 514L376 516L372 518M358 479L346 498M343 457L317 467M314 482L317 467M314 482L344 498M301 520H315V523H331M297 494L314 482M309 554H322V554H333M333 554L340 538M261 616L266 618L266 621L272 623L273 625M261 616L263 590M286 586V600H295V610M295 610L273 625M367 603V607H365V609M367 603L354 576M365 609H350V612H339M339 612L325 599M341 573L354 576M341 573L324 590M324 590L325 594L325 599M395 589L367 603M390 631L386 628L382 628L380 625L375 622L371 620L369 619M369 619L369 616L366 612L365 609M380 555L377 557L374 561L370 562L369 566L367 566L362 569L361 572L356 573L354 576M333 554L334 559L337 561L338 566L341 569L341 573M296 575L298 578L301 577L307 581L307 581L313 583L314 583L319 585L321 589L324 590M295 610H298V614H306M306 614L325 599M175 605L178 620M147 600V610H143V626M178 620L176 624L173 628L170 630M170 630H160V626H143M542 493L546 494L549 497L552 500L554 502M542 493H536V505H529M554 502V509H554V517M529 505L532 521M532 521H538V522H550M550 522V520H554V517M541 482V485H542V493M559 474H561V476H562M569 494L566 497L561 498L557 501L554 502M518 500H525V505H529M580 519L582 514L583 511M580 519H571V517H554M583 511V506H578V496M526 527H530V521H532M533 547H540V543H557M557 543V536H550V522M583 529L582 525L580 519M557 543H557V544H557M591 626L593 603M593 603L595 601L600 601L603 599L607 596M607 596L609 597L612 598L615 602L619 602L623 603M612 631L625 613M625 613L623 609L623 603M682 585L682 581L684 576L685 573L686 568L686 565M682 585L685 585L691 588M691 588H702V578H710M686 565H693V562H705M710 578L712 572L712 569M712 569L705 562M699 601L691 588M721 590L719 587L717 584L712 579L710 578M708 542L705 562M678 552V557H686V565M730 564H720V569H712M672 322H663V318H657M650 339L648 330M657 318L648 330M622 348L629 324M648 330H639V324H629M635 491L634 487L631 484L627 482M635 491L633 495L633 500L632 503M627 482H619V490H607M632 503L629 503L625 505L620 506L619 508L615 506L610 508M607 490V500H610V508M610 508L610 508M652 488L647 490L645 491L638 491L635 491M628 467L627 482M642 517L638 515L636 509L635 508L632 503M598 483L606 463M598 483H603V490H607M606 463L622 460M613 523L610 508M583 511H598V508H610M591 484H594V483H598M574 625L566 605M593 603H588V591H579M566 605L579 591M598 570L579 587M569 559V566H567V578M567 578H575V587H579M607 596V579H604V572M579 591L579 587M455 568L458 565L458 562L461 558L463 555M455 568L459 596M463 555L467 556L471 559L472 560L476 561L480 562L484 565L485 566L491 568L493 570M459 596L462 599L464 601M493 570V574H495V582M470 601H467V601H464M470 601L493 586M493 586L495 582M462 546L464 551L463 555M426 572L430 571L432 573L438 571L440 571L446 570L447 568L452 568L455 568M435 600H449V596H459M507 556L493 570M450 635L464 601M489 626L470 601M507 615L506 613L505 608L502 604L499 603L500 599L499 595L497 591L496 590L493 586M519 616L518 613L521 609L521 606L520 600L521 599L520 594L522 590L522 587M522 587H504V582H495M667 250V254H661V261M667 250H674V250H681M661 261L666 282M681 250L684 254L683 257L688 259L688 262M688 262V266H686V275M686 275H675V282H666M660 241L661 245L666 247L667 250M644 237L630 249M644 264H652V261H661M669 212H669V212H669M691 237V243H681V250M710 262L708 264L703 264L698 262L697 262L694 261L688 262M699 291L686 275M680 71L677 68L673 66L672 63L668 62L665 59M680 71V77H679V80M679 80L677 82L673 83L667 84L666 83L662 84L657 85L653 87M665 59L643 69M643 69V79H653V87M693 58L680 71M668 37V52H665V59M641 68H642V69H643M704 109L706 105L704 100L704 97L706 93L705 91L706 86M704 109L700 111L695 110L694 110L691 111L685 111M685 111V108H681V106M681 106V99H682V83M682 83H692V86H706M707 85L706 86M679 80V81H682V83M730 88V101H725V108M704 109H706V112H708M708 112L711 111L717 111L718 109L722 109L725 108M755 144L747 145M755 144V132H766V123M747 145L732 130M766 123L762 120L761 117L757 115L755 110M755 110L750 112L746 114L743 115L741 116L735 116M735 116L735 119L732 123L733 127L732 130M786 122H773V123H766M762 153L766 153L769 153L775 155L777 154L781 155L785 156M762 153L760 151L758 147L755 144M734 156H740V145H747M712 152V147H711V136M711 136V135H711V135M711 135H725V130H732M756 97V106H755V110M725 108L729 110L732 112L735 116M708 112L709 115L708 119L710 125L709 128L711 133L711 135M730 204L732 203L735 200L739 201L743 198L747 196M736 174L740 175L743 178M747 196V185H743V178M762 153L760 171M743 178H751V171H760M456 149L461 149L465 149L468 149L472 152L474 152L477 151M456 149V153H452V159M452 159L466 177M477 151V162H480V168M480 168H474V177H466M455 146V148H456V149M455 146L464 127M488 141L475 126M488 141L485 145L481 146L479 148L477 151M464 127L467 126L472 127L475 126M441 164H447V159H452M465 182L466 177M490 173H484V168H480M488 141H491V141H498M498 141V144H505V149M401 200L388 180M411 164L409 165L407 164M407 164L388 180M381 209L378 206L375 202L375 199L371 196M371 196V191H379V179M379 179L383 179L388 180M314 9H328V20H340M313 42L317 42L319 43M340 20L340 23M340 23L336 35M336 35H325V43H319M455 146H444V135H438M423 156V150H425V140M438 135H430V140H425M464 127L462 123L458 121L456 119L453 117L450 113L448 111M448 111H446V114H443M438 135L438 131L439 129L442 124L440 121L442 119L443 114M558 37H554V41H549M556 72V69H550V65M550 65L549 41M540 8H537V13H529M529 13V22H536V38M549 41L545 41L543 40L538 38L536 38M340 20L349 -5M340 23L345 25L348 22L352 25L355 26L358 24L360 26L365 25L370 25L372 27M372 27L375 22M375 22L374 18L371 16L370 13L368 8L364 5L363 3L360 1L359 -3M467 -3V5H475V21M475 21L469 26M469 26L445 14M442 -1V9H445V14M622 -8L608 5M608 5L617 16M617 16L620 16L625 17L629 17L634 16L637 15M637 15L638 13L637 6L637 5L636 -1L636 -4M597 3H604V5H608M613 37V23H617V16M639 17L637 15M772 25H767V25H757M772 25L780 7M757 25L752 4M774 -4L780 7M757 -5L752 4M751 33V30H757V25M786 40L772 25M797 12L780 7M726 12H742V4H752M602 184L587 186M602 184L601 179L603 176L603 172L602 168L604 163L603 160M603 160H595V154H581M578 179H582V186H587M578 179L579 174L579 171L580 167L578 165L580 163L579 158L580 155M580 155L581 154M586 133V143H581V154M608 158L607 159L603 160M608 158L607 153L610 149L610 148L610 141L610 139L612 134L612 131M611 130L612 131M556 185L578 179M582 211V196H587V186M556 152H569V155H580M552 124L552 124M608 158H617V163H627M612 131H621V142H633M633 142L633 147L631 150L633 153L630 158L631 161M631 161H629V163H627M222 426L220 426L219 427M230 428L232 430L233 432M233 432V447H236V465M221 472L202 453M202 453L219 427M189 397V410H181V418M219 427L215 427L212 426L208 424L206 423L202 422L197 420L194 422L190 420L189 420L185 418L181 418M147 406L152 407L156 409L159 411L160 411L165 414L169 414L172 416L175 417L180 418M181 418L180 419L180 418M177 516L156 497M194 489L191 486L188 483L185 481L184 478L182 477L178 474M178 474L156 497M140 525L148 497M120 485L123 487L128 486L132 487L135 486M135 486L148 497M148 497L153 498L156 497M178 620L202 626M205 600L206 604L206 607L206 612L207 615L206 618L206 622M202 626H204V622H206M229 587V604H234V623M206 622H219V623H234M261 616L237 625M273 625L279 647M248 651H269V647H279M248 651L237 643M237 643V635H237V625M237 625H236V623H234M55 775L60 772L60 770L63 768L68 768L71 764L73 764L76 761L78 758L80 756L84 755M85 798L93 783M84 755L85 758L85 763L87 764L89 769L88 773L91 777L91 780L93 783M115 814L117 809L117 808L118 805L122 799L121 799L123 794M123 794L122 792L120 788L118 784L114 782L112 780M112 780H103V783H93M120 760L111 750M120 760H127V761H132M152 739L132 761M152 739L150 738L145 736L142 735L141 732L137 730L134 728L129 726L127 725L125 723M125 723L124 727L122 729L119 733L118 737L118 741L114 744L112 746L111 750M84 755V752H86V748M120 760V771H112V780M111 750H99V748H86M8 725L30 704M-16 692L-12 692L-8 691L-5 689L-3 688L2 687L3 685L9 682L12 680L15 680M15 680L15 683L20 687L20 690L21 692L24 696L27 698L28 701L30 704M325 198L323 201L324 206L321 210L320 212L320 216M325 198L330 200L332 200L335 199L340 200L342 202L347 203L350 203M350 208V205H350V203M350 208L337 226M320 216V221H327V227M337 226L327 227M303 188L319 188M319 188V191H325V198M296 203L299 205L297 211L300 214M300 214H310V216H320M373 226L350 208M371 196H363V198H353M353 198V200H350V203M359 250L337 226M334 266L316 243M316 243V234H327V227M109 190L104 193M109 190V176H119V160M104 193H94V182H87M87 182L80 162M80 162L108 149M108 149L119 160M101 215V201H104V193M132 193H118V190H109M140 156H128V160H119M56 201L59 199L64 196L67 194L70 193L72 190L76 189L79 187L80 185L84 184L87 182M71 156L80 162M107 136V142H108V149M328 422H327V424H324M317 467V462H308V451M324 424L308 451M292 388V399H293V414M324 424H311V414H293M572 434L567 437L565 441M572 434L589 436M580 459H584V451H594M580 459L577 457L574 454L568 453L566 450M566 450L565 441M594 451V445H594V441M594 441V438H589V436M568 417V426H572V434M543 434H556V441H565M593 413V424H589V436M578 468L580 459M606 463L603 461L600 457L597 454L594 451M556 459H560V450H566M613 433H605V441H594M581 322L583 320L588 321L590 319L593 316L598 316M581 322L583 338M583 338H590V342H603M603 342L603 339L604 334L605 330L606 328L605 325L605 321M605 321H600V316H598M573 348L583 338M608 351L603 342M629 324V318H624V316M624 316H618V321H605M596 301L598 316M615 294L617 298L617 301L618 303L621 307L623 311L624 314M624 316V314H624V314M539 269L547 275M571 265V270H563V273M547 275H557V273H563M531 339L498 322M531 339L505 356M498 322L490 351M505 356H497V351H490M513 369V361H505V356M534 343L531 339M531 339L529 338L531 339M489 307V310H495V315M481 356L490 351M495 315L498 317L498 322M245 318L247 315L247 312L250 309L252 304L252 299L255 296L255 294L257 290M286 306L265 289M257 290H262V289H265M219 288L222 288L227 286L230 285L234 285L236 284L242 282L245 282M257 290L253 287L250 285L245 282M223 251H231V255H244M245 282V271H244V255M250 227V227H251V228M251 228L247 253M244 255H245V253H247M689 711V710H689V709M689 711L692 715L692 719L695 723L694 723L697 728M722 717L722 722L720 724L719 728M719 728H706V728H697M689 711L666 722M677 745H684V744H688M697 728L688 744M668 755L684 780M684 780L699 775M699 775L699 772L698 768L700 763L698 757L699 754M688 744H692V754H699M752 724L746 738M719 728L719 731L722 734L723 737L726 741M746 738H734V741H726M779 742H770V749H757M746 738L749 742L753 743L754 747L757 749M781 776L778 775L772 772L768 771L765 771L762 768L757 768L755 766M757 749L755 766M699 754H712V746H724M724 746V743H726V741M734 804H726V806H718M734 804L742 785M710 780L711 800M710 780L731 772M718 806H716V800H711M742 785V781H739V776M739 776H734V772H731M716 827L718 806M750 824L734 804M763 797H751V785H742M684 780V785H676V792M676 792L693 808M693 808H705V800H711M699 775H704V780H710M724 746V762H731V772M755 766H749V776H739M660 756V763H650V775M629 747H633V742H636M629 747V759H629V767M640 742L636 742M650 775H637V767H629M676 792H674V793H673M673 793L650 777M650 775V776H650V777M629 747L610 745M596 760L617 778M596 760L599 753M599 753L603 752L607 747L610 745M629 767H621V778H617M683 697H674V692H661M659 719V712H653V707M653 707V700H661V692M679 655H674V649H668M680 664L659 683M639 666L640 670M668 649H653V657H642M640 670L643 672L648 674L648 676L652 678L656 679L659 683M661 692V688H659V683M386 712L404 735M421 694V708H426V721M404 735L426 721M394 750L398 747L401 745L404 741M404 735V739H404V741M398 791L427 772M427 772V766H427V761M404 741L427 761M240 829L237 827L236 821L236 818L233 815L232 811L229 808L227 807L227 803M227 803L224 805L220 807L219 808L215 809L210 810L207 811L206 815L203 813L198 817M278 810L276 811L272 812M278 810H282V806H284M272 812L269 810L266 808L264 804L261 804L259 799L256 798L252 796L249 793L247 792L244 790M284 806L282 803L283 797L282 794L283 789L282 787L282 783L283 781L283 776M244 790L266 767M283 776H273V767H266M299 864L278 810M254 830L272 812M318 808H307V806H284M231 791V798H227V803M231 791L236 791L240 789L244 790M300 765H294V776H283M248 752L250 753L257 756L259 757L263 760M248 752L218 771M263 760V764H266V767M218 771L231 791M398 791L416 812M405 834V820H416V812M490 715L489 717M490 715L479 690M453 696L453 699L452 704L454 708L455 712L453 716L454 719M489 717H473V719H454M427 761L451 743M426 721H433V728H448M451 743V738H448V728M454 719V725H448V728M514 684V693H517V700M490 715H506V703H515M517 700L517 701L515 703M552 693V696H546V701M552 693L549 681M517 700H536V701H546M552 693L557 694L559 694L563 694L565 695L571 696L573 697M584 687V689H583V691M573 697H577V691H583M546 701L548 717M573 697V711H572V728M572 728H562V717H548M515 703L530 738M548 717L547 719L543 722L542 725L539 727L538 731L534 732L533 734L530 738M489 717L490 719L491 725L490 728L491 731L493 735M493 735H510V738H530M530 738V738H530V738M693 808L692 810L693 815L693 818L693 822L691 825M673 793L664 805M664 805V821H672V829M645 808L664 805M645 808V818H644V828M306 614L307 619L308 622L310 627L310 630M279 647L278 648L279 647M279 647H284V648H287M287 648L290 645L293 642L295 641L299 639L302 637L305 634L307 631L310 630M248 752V736H241V729M209 742L235 727M209 742V746H207V754M218 771H217V771H217M207 754L211 758L211 762L212 762L214 766L217 771M241 729H237V727H235M248 651L247 656L249 659L248 662L249 665L248 668L248 672L247 676L250 679L249 684M216 657L237 643M216 657L232 686M249 684L244 686L242 684L237 686L232 686M640 303H646V313H655M640 303V298H642V286M655 313L658 309L660 306L660 303L663 301L666 297L667 294M642 286L664 286M667 294L664 286M657 318V315H655V313M624 314H631V303H640M638 283L640 283L642 286M685 304L683 302L677 299L674 297L671 296L667 294M666 282V284H664V286M549 601L529 583M549 601H549V601H549M549 601L556 581M556 581H552V569H544M529 583V578H533V570M544 569H540V570H533M522 587L526 585L529 583M537 618V609H549V601M566 605L549 601M567 578L556 581M560 552L544 569M526 560L533 570M672 192H659V183H651M682 185V171H681V161M651 183V173H648V167M648 167L652 163L652 162L656 158L660 156M660 156L681 161M708 157L683 160M711 136L684 134M684 134L683 160M685 111V121H681V130M684 134V132H681V130M681 161L683 160M648 132L630 111M648 132H650V133H655M655 133H656V132H656M656 132L657 130L658 125L656 122L657 118L660 113L660 111L660 107M634 105V109H630V111M634 105L637 103L640 102L645 99L649 100L651 97M651 97L660 107M633 142H640V132H648M615 118H625V111H630M648 167L645 167L639 165L636 163L631 161M660 156V144H655V133M681 130H666V132H656M681 106L660 107M620 84L622 85L624 89L626 92L627 96L629 100L631 101L634 105M653 87L651 97M776 182H773V182H772M776 182L790 201M772 182L757 200M786 209V204H790V201M786 209L782 208L779 209L776 207L771 206L767 208L762 208L760 207M760 207L757 200M791 166L776 182M760 171L761 173L766 176L768 178L772 182M811 192H804V201H790M747 196H753V200H757M787 215L785 212L786 209M754 225L760 207M485 21L490 24L493 26L496 28L497 30L501 32M485 21L487 17L488 14L491 10L492 6L495 3L496 -1M501 32L505 30L506 27L510 25L510 21L515 18L519 15L519 12L523 11M513 -4V1H523V11M475 21L485 21M529 13H527V11H523M469 26V29H466V33M432 28L435 25L437 22L439 18L441 16L445 14M432 28L437 30L437 35L442 35L443 40L446 42M446 42L466 33M353 198L352 194L352 192L352 187L351 185L351 179L349 177L348 172M319 188L332 170M348 172H341V170H332M299 160L324 157M324 157L327 160L327 164L331 167L332 170M298 65L322 77M319 43V60H331V71M322 77H327V71H331M295 93H308V100H315M322 77L315 100M425 140L415 131M443 114L419 112M415 131V123H419V112M510 63H520V62H525M510 63L499 46M525 62L526 57L526 55L528 52L529 47L528 43M528 43L523 41L521 41L518 39L513 40L509 39L504 38L502 36M499 46L502 36M529 66V65H525V62M529 66H536V65H550M536 38L533 41L528 43M501 32L502 36M464 96L468 96M464 96L463 93L461 88L459 86L460 81L457 77L458 76L457 71L455 67M468 96L488 79M488 79L478 60M455 67L459 66L460 65L464 64L469 61L471 59L474 59M478 60L475 61L474 59M475 126V121H480V111M451 103V107H448V111M451 103L453 102L457 100L461 97L464 96M480 111L468 96M466 33V47H474V59M499 46L478 60M500 110L499 105L499 102L500 98L501 95L498 92L500 87L498 82M500 110H505V118H509M518 116L509 118M518 116L518 113L520 109L522 104L523 102L525 98L527 94L529 92M529 92V90H527V89M527 89L500 82M500 82L499 82L498 82M480 111H491V110H500M488 79H494V82H498M498 141V128H509V118M533 126L518 116M541 93H536V92H529M529 66L527 89M510 63L510 65L507 71L505 71L504 77L500 79L500 82M432 28H422V29H416M416 29L415 26L418 21L416 19L418 15L420 11L418 5L420 3L419 -2L420 -5M375 22L377 20L382 16L385 16L389 13M379 -12L392 2M389 13V7H392V2M392 2L394 1L398 -2L403 -4L404 -4L410 -8L412 -8M607 187L607 213M607 187H611V184H621M621 184H630V196H635M617 217L619 215L623 213L627 214L631 212L635 211M617 217H613V213H607M635 211V205H635V196M588 218L593 218L596 216L599 215L605 213L607 213M602 184H604V187H607M627 163V172H621V184M651 183L635 196M637 213H636V211H635M616 239L616 234L617 233L615 229L616 225L617 221L617 217M189 454V447H177V432M189 454V463H178V470M178 470L175 470L171 467L169 467L163 464L162 463L157 462L157 458L152 458M177 432L149 448M149 448V451H152V458M202 453H194V454H189M180 418V426H177V432M178 474V472H178V470M135 486L152 458M135 438H139V448H149M188 810L158 824M188 810L186 807L188 802L188 798L187 795L186 792M186 792L167 777M154 823V804H148V787M167 777H160V785H149M148 787L150 785L149 785M198 817H192V810H188M217 771L186 792M207 754L202 755L200 755L197 756L192 755L188 756L187 755L181 756L180 757L174 758L172 757M172 757L172 761L170 766L170 770L167 772L167 777M123 794L127 792L132 793L134 790L138 790L140 789L146 788L148 787M161 738H158V739H152M161 738L162 741L165 745L168 748L168 752L172 753L172 757M132 761L135 763L138 767L140 768L140 772L142 776L147 777L147 781L149 785M81 740L81 736L83 734L83 729L85 727L86 721L86 718M81 740H71V737H49M49 737V725H43V707M82 710L84 714L86 718M82 710L78 709L74 708L72 709L66 710L64 708L61 707L56 706L54 705L52 707L47 704M47 704L44 707L43 707M125 723L123 717L121 713M121 713L117 714L115 715L110 715L106 715L104 716L101 716L98 715L92 718L91 718L86 718M86 748L81 740M40 749V745H49V737M30 704H35V707H43M114 684L123 708M114 684L109 680L107 680L102 678M123 708V710H121V713M88 683L102 678M88 683L82 710M18 666L20 663L25 660L26 658L28 658L33 655M18 666L-7 650M33 655L19 626M19 626H8V622H-6M15 680V672H18V666M47 704L49 700L50 699L52 694L54 692L55 688L56 684L58 680M33 655L33 655M33 655L37 658L39 660L41 661L43 664L45 668L48 669L50 673L53 676L54 679L58 680M88 683H78V676H72M58 680H64V676H72M-6 599L27 590M19 626L37 605M37 605V600H27V590M309 243L295 226M309 243L289 262M289 262H285V261H280M295 226L276 230M277 257V259H280V261M277 257V248H276V230M276 230L276 230M300 214L298 217L297 222L295 226M316 243L311 243L309 243M308 283L289 262M265 289L267 287L268 284L271 281L270 275L275 273L274 269L277 267L279 263L280 261M273 203L273 205L273 212L275 215L274 218L275 224L277 227L276 230M247 253L250 255L253 254L258 253L264 254L265 255L270 256L272 257L277 257M251 228H262V230H276M294 449L283 424M294 449L292 451L287 454L283 457L281 459L279 463L276 464M265 459V450H262V436M265 459L267 462L271 463L276 464M262 436L264 434L268 430L269 428L273 425M273 425L277 424L283 424M308 451L303 450L300 450L294 449M293 414L283 424M282 487V473H276V464M233 432H253V436H262M242 467L265 459M254 401L273 425M531 339L532 336L532 333L536 328L536 325L538 322M495 315H509V308H527M538 322L536 320L532 317L530 315L530 311L527 308M515 282L529 297M547 275L547 280L544 284L546 290L544 292M544 292L541 295L536 296L532 295L529 297M529 297V300H527V308M650 777L636 799M617 778L619 779L617 780M617 780L636 799M645 808L641 806L638 803L636 801M617 813L636 801M636 801L635 800L636 799M628 720L639 707M628 720L624 717L621 718L615 717L614 718L611 716L606 716M639 707L626 690M603 708L605 710L604 715M603 708L619 691M619 691H623V690H626M606 716L605 716L604 715M636 742V735H628V720M653 707L648 708L644 708L639 707M610 745L606 716M640 670L626 690M583 691L587 693L588 696L592 697L594 702L597 704L601 705L603 708M579 730L604 715M579 730L576 730L573 729M573 729L573 729L572 728M604 673L619 691M599 753L579 730M493 735L491 737L490 740L487 746L486 748M451 743H459V752H466M486 748L481 750L477 751L474 752L470 752L466 752M427 772L448 789M466 752V768H463V784M463 784V786H458V789M448 789L454 788L458 789M416 812H422V813H428M448 789L428 813M596 760L592 763L589 766L586 767M565 742V737H573V729M565 742V749H567V756M586 767H578V756H567M617 780L599 799M586 767L583 778M599 799L583 778M330 641H330V641H330M330 641L334 643L338 643L342 644L343 647L348 647L350 650M330 641L313 666M355 659V654H350V650M355 659L333 684M333 684L313 666M339 612V624H330V641M310 630H317V641H330M369 619L350 650M287 648L309 666M309 666L312 667L313 666M365 663L355 659M333 695L333 684M272 687H267V689H259M272 687H283V695H289M259 689V710H253V722M289 695V695H289V695M289 695V718H290V728M253 722H270V731H280M280 731H286V728H290M279 647L280 652L277 655L276 659L275 662L275 665L275 670L273 673L274 675L275 679L272 683L272 687M249 684H252V689H259M309 666L289 695M241 729L246 725L248 726L253 722M235 727L220 699M232 686L220 699M331 699H304V695H289M297 732L293 729L290 728M263 760L280 731M202 626V639H202V649M216 657L213 656L209 656M209 656L202 649M170 630V642H174V651M202 649L199 649L194 648L192 650L187 650L184 651L182 649L177 652L174 651M143 626L140 629L136 632L137 633L132 636L130 638M130 638V650H140V656M140 656H157V657H170M174 651L171 652L170 657M671 602H661V603H656M671 602L680 619M656 603L649 619M680 619L675 623L674 624L671 625L665 626L663 629M663 629H659V624H651M651 624L651 620L649 619M689 622H683V619H680M682 585L682 584L682 585M682 585V595H671V602M668 649V639H663V629M637 645L640 641L641 638L644 635L645 632L646 631L648 628L651 624M625 613L649 619M656 570L658 575M656 570L643 562M658 575V586H648V590M643 562L639 564L637 568L636 568L632 573L629 573L627 576M648 590L643 590L639 589L635 589L632 590M627 576V581H632V590M670 553L656 570M682 585H671V575H658M641 552L643 562M656 603L655 600L653 598L649 593L648 590M613 569H622V576H627M623 603L632 590M379 179L375 174M348 172L350 171L349 172M375 174H357V172H349M416 29H416V29H416M389 13L391 16L394 18L396 19L401 21L404 23L407 24L411 26L412 29M416 29L413 31L412 29M33 655L52 641M72 676V656H72V644M52 641H60V644H72M37 605H43V609H46M52 641L46 609M53 570L49 570L46 573L42 574L40 577L36 578L31 580L29 583M53 570L53 566L52 563L49 560L50 557L48 553L48 549L48 546L46 540L44 538M28 542L27 544L24 548L24 551L22 556L22 560L22 563L19 565M28 542H36V537H43M19 565L21 569L23 573L24 576L26 580L29 583M43 537L43 537L44 538M72 576L53 570M72 576L70 580L71 583L70 587L68 592L68 594L67 597L66 602M27 590L29 583M66 602H60V609H46M79 572L76 575L72 576M56 535L52 537L48 537L44 538M-9 564H1V565H19M3 528L6 531L9 530L11 534L17 534L18 536L23 539L26 539L28 542M37 501V517H43V537M551 317V311H554V302M551 317L553 319L559 321L562 323M576 320V305H575V298M576 320L562 323M554 302H560V296H569M575 298L573 296L569 296M538 322L551 317M544 292V296H554V302M562 347L562 323M583 295L578 295L575 298M581 322H579V320H576M563 273L565 277L565 281L565 286L567 290L567 293L569 296M486 748L487 750L489 754L494 759L495 761L497 764M463 784L490 783M490 783V776H497V764M458 789V803H467V812M490 783V788H498V795M498 795L490 813M617 813H606V806H600M591 832L592 830L592 825L595 824L596 820L598 817L598 811L598 810L600 806M599 799L598 802M600 806V804H598V802M598 802H588V808H570M567 819L567 816L568 811L570 808M114 684L137 669M123 708L127 707L131 708L134 704L138 704L139 703L144 703L147 700M137 669L138 671L140 675L145 677L148 681L150 685L152 687M147 700L147 697L151 695L150 691L152 687M161 738L170 722M147 700L170 722M306 125L308 125M324 157L323 154L327 149L327 148L327 143M327 143L308 125M315 100V102H316V104M308 125L309 121L311 117L313 116L315 110L314 109L316 104M327 143L330 141L333 140L339 139L339 135L346 134L348 131M316 104L319 105L323 106L326 107L330 106L334 107L337 108L342 108M348 131L342 108M78 641L80 639L82 633L81 631L82 627L84 623L83 620L85 616M78 641L102 651M125 637L102 651M125 637L106 609M106 609H99V616H85M66 602L85 616M72 644H74V641H78M102 678L102 651M130 638H128V637H125M140 656L138 662L138 665L137 669M110 597L110 600L107 605L106 609M530 738V740H531V741M497 764H507V765H516M516 765L531 741M565 742L562 741L557 744L554 742L550 743L546 741L544 742L540 741L534 740L531 741M531 741L530 740L531 741M196 679H184V678H175M196 679L210 699M210 699L191 717M175 678V680H173V681M173 681L180 717M191 717H184V717H180M209 656L196 679M170 657L175 678M220 699H216V699H210M209 742L191 717M152 687H165V681H173M170 722L180 717M451 103L433 86M455 67L447 65M433 86L447 65M446 42L442 58M416 29V40H421V56M421 56L425 56L430 58L434 56L436 57L442 58M447 65V61H442V58M419 112L418 110L415 107M433 86L417 87M415 107V94H417V87M413 65V70H411V81M413 65V60H421V56M417 87L414 84L411 81M336 35L338 39L340 42L345 44L346 46L349 50L352 53M331 71H334V71H338M352 53L338 71M346 104L342 108M346 104L345 100L347 95L345 93L347 87L345 85L346 80M338 71L341 73L343 78L346 80M375 174L378 157M349 172L361 142M378 157L375 155L373 153L369 150L365 148L362 144L361 142M407 164L395 151M378 157L382 156L385 153L389 152L391 153L395 151M348 131H354V137H360M361 142V139H360V137M415 131H402V135H396M395 151L396 135M546 825V817H538V808M515 823L522 808M538 808H530V808H522M498 795H509V794H514M516 765L516 769L521 771L522 776L524 780M524 780L514 794M514 794L522 808M346 104L374 100M346 80L348 82L354 81L357 79L360 79L365 79M365 79L368 83L369 86L370 91L371 94L373 96L374 100M360 52L363 55L364 58L367 60L368 66L371 68M360 52L374 35M374 35H384V46H390M380 68H376V68H371M380 68L382 66L384 62L387 59L390 55L392 53M390 46L393 49L392 53M352 53L356 51L360 52M365 79L369 74L369 72L371 68M372 27V30H374V35M412 29L390 46M413 65L392 53M411 81L394 84M394 84L380 68M544 799L542 795L540 792L541 789L539 783L537 780M544 799H555V798H564M567 786L565 790L564 795L564 798M567 786L564 783L562 781L558 779L555 775L554 774L550 770M537 780H544V770H549M550 770H550V770H549M538 808L542 804L541 802L544 799M524 780L528 779L533 780L537 780M570 808V802H564V798M583 778H574V786H567M567 756L565 760L561 761L557 764L557 764L551 768L550 770M531 741L549 770M375 101L381 100M375 101V120H369V130M381 100L394 112M394 112V118H393V132M393 132H385V130H369M394 84L381 100M374 100H374V101H375M360 137H363V130H369M415 107H402V112H394M396 135L395 133L393 132" fill="none" stroke="#616161" stroke-width="1"/>
<path d="M299.6 59.1 L306.9 55.4 L314.3 57.9 L315.6 65.3 L322.9 71.4 L319.3 75.1 L320.5 83.7 L324.2 93.6 L322.9 96 L319.3 89.9 L315.6 85 L314.3 76.3 L311.9 69 L308.2 61.6 L303.2 62.8Z" fill="#2b4d74" stroke="#2b4d74" stroke-width="0.6"/>
<path d="M368.5 260.3 L373.4 257.9 L380.8 261.6 L388.2 266.5 L393.1 271.4 L396.8 276.3 L390.7 272.6 L383.3 267.7 L375.9 264.5 L369.7 262.8Z" fill="#2b4d74" stroke="#2b4d74" stroke-width="0.6"/>
<path d="M438.7 377.3 L441.2 369.9 L446.1 367.5 L447.3 363 L449.8 363.8 L451 367.5 L446.1 372.4 L443.6 377.3Z" fill="#2b4d74" stroke="#2b4d74" stroke-width="0.6"/>
<path d="M605.1 308.4 L607.6 304.7 L611.3 305.9 L612.5 298.5 L613.7 292.3 L612.5 287.4 L615 286.2 L617.4 291.1 L619.9 286.2 L622.3 288.7 L622.3 293.6 L627.3 293.1 L624.8 297.3 L619.9 301 L616.2 305.9 L612.5 310.8 L607.6 313.8Z" fill="#2b4d74" stroke="#2b4d74" stroke-width="0.6"/>
<path d="M423.9 413.5 L427.6 417.2 L428.8 424.6 L431.3 429.6 L430.1 434.5 L427.6 430.8 L425.1 423.4 L423.9 417.2Z" fill="#2b4d74" stroke="#2b4d74" stroke-width="0.6"/>
<path d="M526.1 502.2 L528.6 507.1 L531 513.3 L532.3 523.1 L537.2 525.6 L533.5 531.8 L532.3 537.9 L528.6 534.2 L526.1 528.1 L527.3 518.2 L526.1 510.8Z" fill="#2b4d74" stroke="#2b4d74" stroke-width="0.6"/>
<path d="M121.9 662.8 L123.1 656.6 L128.1 652.5 L134.2 652.9 L136.7 657.9 L134.2 664 L129.3 668.5 L124.4 667Z" fill="#2b4d74" stroke="#2b4d74" stroke-width="0.6"/>
<path d="M43.1 680 L48 682.5 L51.7 687.4 L49.3 689.9 L45.6 686.2Z" fill="#2b4d74" stroke="#2b4d74" stroke-width="0.6"/>
<path d="M57.9 689.9 L60.3 685 L64 693.6 L67.7 699.7 L73.9 703.4 L81.3 704.7 L85 708.4 L81.3 710.8 L73.9 708.4 L66.5 705.9 L61.6 701 L59.1 694.8Z" fill="#2b4d74" stroke="#2b4d74" stroke-width="0.6"/>
<path d="M140.4 707.1 L145.3 703.4 L147.8 697.3 L151.5 696 L154.7 701 L152.7 705.9 L147.8 709.6 L144.1 713.3 L141.6 712Z" fill="#2b4d74" stroke="#2b4d74" stroke-width="0.6"/>
<path d="M539.7 600 L543.4 604.9 L542.1 612.3 L544.6 614.8 L550 613.5 L544.8 612.3 L552.2 611.1 L554.6 604.9 L557.1 609.9 L563.2 611.1 L559.6 614.8 L552.2 617.2 L547.2 619.7 L542.3 617.2 L541.1 606.2Z" fill="#2b4d74" stroke="#2b4d74" stroke-width="0.6"/>
<path d="M783.6 731.8 L787.3 733 L789.8 740.4 L796 747.8 L795.5 755.1 L791 753.9 L787.3 745.3 L784.9 737.9Z" fill="#2b4d74" stroke="#2b4d74" stroke-width="0.6"/>
<path d="M181 6.2 L190.9 17.2 L197 32 L200.7 44.3 L201.4 71.4 L200 91.1 L195.8 101 L188.4 112 L187.2 130.5 L183.5 140.4 L176.1 149 L174.8 156.4 L167.5 169.9 L157.6 184.7 L149 200M240.8 7.4 L230.3 17.2 L228.5 27.1 L228.5 44.3 L222.9 60.3 L214.2 66.5 L201.9 71.4M240.8 7.4 L248.7 17.2 L257.3 29.6 L263.5 41.9 L264.7 51.7 L270.9 59.1 L280 60.3 L284.8 60.3 L297.1 54.2 L309.4 52.9 L322.9 62.8 L339 73.9 L361.1 89.9 L375.9 105.9 L390.7 115.7 L403 128.1M280 169.9 L261 176.1 L230.3 187.2 L221.6 193.3 L216.7 200M473.2 6.2 L471.9 19.7 L467 41.9 L457.2 52.9 L435 59.1 L430.1 70.2 L425.1 83.7 L417.8 98.5 L410.4 110.8 L405.4 128.1M393.1 99.7 L415.3 101 L432.5 108.4 L437.5 123.1 L436.2 137.9 L430.1 155.1 L412.8 163.8 L388.2 165 L371 152.7 L364.8 136.7 L368.5 120.7 L378.4 107.1 L393.1 99.7M270 171.2 L302 165 L331.6 158.8 L351.3 149 L378.4 142.8 L395.6 134.2 L404.2 129.3M404.2 134.2 L427.6 133 L452.2 134.2 L469.5 139.1 L484.2 136.7 L516.3 136.7 L523.6 141.6 L530 146.5 L549.7 158.8 L571.9 158.8 L582.9 161.3 L615 150.2 L638.4 150.2 L659.3 141.6M405 130.5 L404.2 147.8 L400.5 165 L396.8 182.2 L396.8 200M405.4 133 L417.8 145.3 L430.1 157.6 L442.4 177.3 L452.2 189.6 L460.9 200M588.4 6.2 L587.1 22.2 L594 36.9 L603.9 46.8 L603.9 59.1 L600.2 76.3 L603.9 93.6 L602.6 99.7 L590.3 109.6 L596.5 123.1 L608.8 137.9 L615 149 L622.3 147.8M659.3 141.6 L672.8 133 L690.1 125.6 L712.2 113.3 L741.8 96 L771.3 80 L791 76.3 L805.8 71.4M594 160.1 L576.8 179.8 L562 200 L554.6 209.9 L544.8 217.2 L540.9 222.2 L523.6 232 L503.9 239.4M659.3 142.8 L670.4 152.7 L674.1 162.5 L683.9 172.4 L686.4 184.7 L702.4 189.6 L717.2 189.6 L741.8 182.2 L761.5 181 L776.3 176.1 L796 173.6 L805.8 175.3M715.9 189.6 L720.9 200 L729.5 209.9 L739.3 216 L751.6 227.1 L759 240.6 L763.9 259.1 L770.1 278.8M6.2 257.1 L36.9 255.4 L61.6 251.7 L83.7 244.3 L113.3 234.5 L133 225.9 L152.7 223.4 L162.5 224.6M145.3 200 L146.5 209.9 L151.5 220.9 L160.1 224.6M162.5 222.2 L172.4 222.2 L175.3 227.1 L172.4 231.5 L162.5 231.5 L161.3 225.9 L162.5 222.2M175.3 224.6 L192.1 214.8 L206.9 206.2 L216.7 200M163.8 231.5 L167.5 249.3 L169.9 273.9 L173.6 288.7 L172.4 310.8 L177.3 337.9 L182.2 360.1 L183.5 377.3 L181 392.1 L177.3 400M398.1 200 L398.1 219.7 L397.6 239.4 L395.6 249.3 L394.4 261.6 L396.8 276.3 L396.8 298.5 L399.3 323.1 L401.8 342.8 L403 357.6 L404.2 367.5 L405.4 382.2 L404.2 400 L410.4 412.3 L420.2 429.6 L427.6 449.3 L435 465.3 L439.9 471.4 L437.5 481.3 L430.1 493.6 L422.7 508.4 L412.8 523.1 L403 537.9 L393.1 550.2 L378.4 565 L363.6 577.3 L346.3 589.6 L329.1 597 L319.3 600M503.9 240.6 L496.6 261.6 L486.7 281.3 L474.4 301 L459.6 323.1 L452.2 333 L427.6 347.8 L417.8 360.1 L410.4 372.4 L403 382.2 L388.2 392.1 L375.9 400 L351.3 401.2 L341.4 404.9 L331.6 417.2 L319.3 429.6 L304.5 444.3 L292.2 459.1 L279.9 466.5 L270 470.2M410.4 369.9 L427.6 363.8 L447.3 362.5 L474.4 363.8 L496.6 360.1 L516.3 355.1 L536 352.2 L550 351.5M459.6 200 L471.9 214.8 L481.8 229.6 L491.6 236.9 L503.9 239.4M628.5 317 L648.2 305.9 L667.9 293.6 L687.6 283.7 L707.3 273.9 L722.1 264 L727 257.9 L739.3 252.9 L751.6 244.3 L766.4 236.9 L786.1 229.6 L805.8 223.4M521.2 238.2 L528.6 246.8 L534.9 249.3 L537.4 264 L542.3 281.3 L544.8 293.6M658.1 367.5 L682.7 368.7 L712.2 371.2 L746.7 372.4 L759 369.9 L776.3 360.1 L791 352.7 L805.8 340.4M739.3 255.4 L746.7 269 L770.1 280 L791 298.5 L805.8 308.4M599 377.3 L603.9 389.6 L606.3 400 L616.2 409.9 L627.3 420.9 L638.4 429.6 L633.4 436.9 L631.5 449.3 L629.7 473.9 L629.7 498.5 L633.4 518.2 L640.8 533 L648.2 550.2 L650.7 567.5 L655.6 584.7 L658.1 600M559.6 382.2 L552.2 400 L542.3 409.9 L530 419.7M6.2 460.3 L24.6 462.8 L54.2 465.3 L81.3 471.4 L98.5 473.9 L118.2 472.6 L137.9 473.4 L147.8 478.8 L157.6 478.8 L177.3 477.6 L204.4 476.3 L233.9 473.9 L256.1 473.9 L270.9 470.2 L280 467.7M177.3 400 L172.4 412.3 L162.5 427.1 L160.1 444.3 L155.1 464 L150.2 473.9 L147.8 478.8 L142.8 491.1 L136.7 505.9 L134.2 528.1 L130.5 547.8 L129.3 572.4 L128.1 600 L126.1 624.6 L128.1 639.4 L134.2 649.3 L134.2 661.6 L133 673.9M256.1 475.1 L248.7 493.6 L243.8 508.4 L236.4 518.2 L233.9 530.5 L221.6 542.8 L215.5 555.1 L214.2 572.4 L216.7 582.2 L209.3 600 L201.9 614.8 L194.5 629.6 L189.6 644.3 L188.4 655.4M439.9 471.9 L459.6 471.9 L474.4 465.3 L491.6 459.1 L508.9 449.3 L521.2 432 L531 419.7 L543.4 409.9 L550 400 L548.5 400M627.3 421.7 L638.4 430.8 L647 441.9 L660.5 449.3 L682.7 459.1 L707.3 465.3 L734.4 469 L759 472.6 L778.7 481.3 L798.4 486.2 L805.8 493.6M805.8 535.4 L802.1 552.7 L798.4 572.4 L791 587.2 L786.1 600 L784.4 596 L785 608.3 L786.8 618.2 L784.4 620.6 L786.8 628 L788.7 636.7 L787.4 642.8 L786.2 653.9 L789.3 660.1 L794.2 668.7 L797.9 674.9 L800.4 682.3 L804.1 689.7 L805.3 696.1M6.2 661.6 L24.6 654.2 L49.3 646.8 L69 643.1 L91.1 641.9 L108.4 639.4 L128.1 639.4 L147.8 640.6 L167.5 648 L182.2 655.4 L194.5 657.9 L211.8 651.7 L229 648 L246.3 644.3 L261 643.8 L280 644.3 L284.8 640.6 L299.6 632 L311.9 624.6 L324.2 624.6 L343.9 628.3 L358.7 632 L368.5 638.2 L378.4 636.9 L388.2 630.8 L403 622.2 L422.7 618.5 L442.4 616.7 L457.2 620.9 L476.9 616 L496.6 617.2 L516.3 616 L531 622.2 L550 626.6 L554.6 629.6 L579.3 636.9 L611.3 640.6 L645.7 645.6 L677.8 652.9 L702.4 659.1 L722.1 661.6 L739.3 661.6 L759 657.9 L778.7 655.4 L786.1 656.6M91.1 641.9 L92.3 656.6 L98.5 666.5 L110.8 671.4 L133 675.1 L147.8 681.3 L160.1 685 L167.5 678.8 L177.3 666.5 L183.5 655.4M6.2 617.2 L12.3 627.1 L13.5 641.9 L14.8 660.3M319.3 600 L309.4 607.4 L306.9 619.7 L305.7 627.1M659.3 600 L664.2 612.3 L677.8 629.6 L692.5 644.3 L702.4 657.9 L712.2 671.4 L719.6 688.7 L724.5 703.4 L734.4 718.2 L741.8 733 L746.7 747.8 L749.2 767.5 L752.9 782.2 L755.3 792.1M780.7 644.1 L778.2 649 L777 657.6 L779.4 665 L786.8 667.5 L793 668.7 L794.2 665 L790.5 657.6 L786.8 653.9 L787.4 642.8 L780.7 644.1M544.4 295.6 L550.5 300 L555.8 307 L557.6 315.8 L560.2 319.3 L567.2 320.7 L569.9 325.5 L573.4 330.8 L578.7 336.9M581.3 300 L575.1 307 L572.5 315.8 L571.2 322.8 L569.9 325.5M578.7 336.9 L581.3 334.3 L587.5 334.7 L592.7 335.6 L593.6 341.3 L594 347.5 L595.4 351.8 L592.7 353.6 L589.2 356.2 L585.7 358.9 L582.2 360.6 L577.8 360.6 L576 357.1 L574.7 351.8 L575.1 345.7 L576 340.4 L578.7 336.9M592.7 335.6 L599.8 333 L605 329 L609.4 323.7 L615.6 321.1 L622.6 318.9 L628.8 317.1M592.7 336 L589.2 341.3 L583.9 344.8 L583.1 350.1M578.7 337.8 L580.4 343.1 L583.1 345.7 L583.1 350.1 L582.2 354.5 L581.3 357.1 L583.1 360.6M549.7 352.5 L554.9 352.5 L557.6 349.6 L563.7 347.9 L572.5 347.5 L575.1 348.8 L582.2 350.1 L587.5 351 L590.1 352.7 L595.4 352.7 L605.9 353.6 L610.3 357.1 L614.7 360.2 L621.7 362 L627.9 361.5 L634.9 361.5 L640 362.8 L648.1 363.4 L658.1 367.5M577.8 360.6 L573.4 365 L568.1 367.7 L565.9 370 L561.1 373.8 L555.8 379.1M583.1 360.6 L587.5 363.3 L591 366.8 L593.6 370 L597.1 374.7 L600.6 379.1M587.5 357.1 L590.1 360.6 L591 365 L591 366.8" fill="none" stroke="#7b6b12" stroke-width="1"/>
<path d="M6 806 L6 803 L6 800 L6 797 L6 794 L6 791 L6 788 L6 785 L6 782 L6 779 L6 775 L6 772 L6 769 L6 766 L6 763 L6 760 L6 757 L6 754 L6 751 L6 748 L6 745 L6 742 L6 739 L6 736 L6 733 L6 730 L6 727 L6 724 L6 721 L6 718 L6 714 L6 711 L6 708 L6 705 L8 707 L11 703 L16 701 L20 698 L24 700 L28 699 L30 701 L29 705 L27 706 L28 708 L34 707 L38 708 L41 707 L45 706 L46 705 L48 705 L48 707 L45 710 L45 715 L47 716 L50 716 L51 719 L51 724 L52 726 L56 724 L60 724 L63 726 L68 728 L70 727 L71 726 L72 730 L74 733 L76 736 L76 739 L79 741 L82 742 L84 740 L88 741 L91 743 L96 745 L98 747 L101 749 L105 750 L106 753 L104 756 L101 759 L102 763 L102 766 L100 768 L102 772 L102 773 L101 777 L101 781 L100 783 L101 788 L102 789 L102 792 L101 796 L100 801 L100 802 L101 806 L98 806 L95 806 L92 806 L89 806 L86 806 L83 806 L80 806 L76 806 L73 806 L70 806 L67 806 L64 806 L61 806 L58 806 L55 806 L52 806 L49 806 L46 806 L43 806 L40 806 L37 806 L34 806 L31 806 L27 806 L24 806 L21 806 L18 806 L15 806 L12 806 L9 806ZM114 760 L116 757 L116 751 L118 750 L121 746 L125 745 L128 743 L131 745 L135 744 L139 747 L142 747 L146 749 L148 751 L148 755 L148 760 L144 759 L142 760 L138 760 L136 759 L134 760 L129 760 L127 759 L125 759 L121 761 L116 761ZM163 760 L162 756 L162 751 L159 747 L159 744 L156 740 L157 738 L159 733 L155 732 L153 729 L149 725 L152 720 L156 718 L156 716 L153 712 L156 712 L157 715 L159 719 L162 722 L164 724 L168 726 L171 728 L172 730 L176 730 L178 733 L182 736 L184 740 L187 743 L190 743 L192 746 L196 745 L198 747 L201 748 L203 749 L207 751 L210 755 L211 754 L216 758 L217 760 L213 759 L211 761 L207 760 L203 761 L200 760 L199 759 L195 761 L192 761 L187 760 L184 761 L182 760 L180 761 L177 760 L173 760 L170 759 L166 759ZM241 806 L241 803 L241 800 L241 797 L241 794 L241 791 L241 788 L241 785 L241 781 L241 778 L241 775 L241 772 L241 769 L241 766 L241 763 L241 760 L237 759 L236 756 L232 754 L230 751 L229 748 L225 746 L223 745 L221 744 L218 741 L214 741 L212 738 L209 738 L206 738 L202 737 L199 735 L196 731 L194 728 L192 724 L190 723 L187 720 L182 717 L185 715 L188 710 L190 707 L192 703 L194 702 L197 700 L201 698 L204 696 L208 693 L207 691 L206 686 L205 683 L206 678 L204 677 L203 682 L198 684 L197 689 L195 694 L191 695 L187 692 L185 688 L181 689 L177 687 L177 683 L180 680 L184 680 L188 678 L191 676 L192 672 L196 669 L200 669 L203 667 L208 664 L211 662 L212 660 L216 659 L218 656 L213 654 L212 651 L216 650 L219 653 L220 656 L223 654 L225 654 L229 652 L233 651 L235 650 L238 648 L240 648 L240 646 L244 646 L247 645 L250 646 L253 646 L254 648 L257 650 L258 650 L262 652 L266 651 L270 650 L272 651 L275 651 L278 652 L281 654 L280 653 L282 650 L287 649 L290 649 L295 650 L298 651 L302 654 L306 658 L306 654 L307 651 L307 647 L306 644 L306 639 L306 635 L307 632 L307 630 L309 625 L311 623 L316 623 L318 624 L320 627 L321 630 L321 634 L322 636 L322 639 L324 643 L324 645 L325 649 L328 653 L330 657 L334 660 L338 661 L341 659 L344 659 L348 657 L349 657 L353 655 L356 655 L360 655 L362 653 L365 652 L368 652 L373 651 L376 652 L378 649 L381 649 L386 649 L388 648 L392 648 L394 648 L398 648 L400 648 L405 647 L409 649 L410 648 L414 649 L418 648 L422 648 L424 648 L429 649 L431 650 L435 650 L438 650 L441 650 L444 652 L446 653 L449 654 L452 655 L455 656 L459 658 L460 658 L464 661 L467 662 L471 663 L472 665 L476 666 L479 668 L482 670 L484 672 L486 673 L489 675 L493 676 L494 680 L497 681 L498 684 L502 685 L504 687 L505 691 L508 693 L511 695 L511 698 L515 701 L516 705 L516 708 L513 712 L516 711 L519 711 L524 712 L526 712 L531 711 L536 708 L538 708 L540 707 L543 703 L547 703 L550 701 L548 701 L547 706 L550 706 L555 705 L560 704 L562 701 L567 700 L570 696 L573 695 L574 694 L578 694 L582 691 L587 690 L585 685 L585 681 L583 679 L585 678 L589 675 L592 675 L596 674 L599 673 L603 673 L605 674 L609 674 L611 674 L615 676 L618 680 L621 682 L626 683 L628 685 L632 687 L636 690 L639 693 L641 696 L643 699 L643 703 L645 706 L648 708 L651 711 L656 713 L656 718 L657 720 L658 723 L660 726 L662 729 L664 730 L666 732 L668 735 L670 738 L673 740 L675 743 L676 745 L677 749 L680 753 L682 754 L685 758 L689 756 L692 756 L697 758 L700 759 L701 762 L701 765 L704 768 L703 770 L706 775 L706 777 L708 779 L712 782 L714 786 L714 790 L714 792 L712 796 L711 800 L710 803 L711 806 L708 806 L705 806 L702 806 L699 806 L696 806 L693 806 L690 806 L687 806 L684 806 L681 806 L678 806 L675 806 L672 806 L669 806 L666 806 L663 806 L660 806 L657 806 L654 806 L651 806 L648 806 L645 806 L642 806 L639 806 L636 806 L633 806 L630 806 L627 806 L624 806 L621 806 L618 806 L615 806 L611 806 L608 806 L605 806 L602 806 L599 806 L596 806 L593 806 L590 806 L587 806 L584 806 L581 806 L578 806 L575 806 L572 806 L569 806 L566 806 L563 806 L560 806 L557 806 L554 806 L551 806 L548 806 L545 806 L542 806 L539 806 L536 806 L533 806 L530 806 L527 806 L524 806 L521 806 L518 806 L515 806 L512 806 L509 806 L506 806 L503 806 L500 806 L497 806 L494 806 L491 806 L488 806 L485 806 L482 806 L479 806 L476 806 L473 806 L470 806 L467 806 L464 806 L461 806 L458 806 L455 806 L452 806 L449 806 L446 806 L443 806 L440 806 L437 806 L434 806 L431 806 L428 806 L425 806 L422 806 L419 806 L415 806 L412 806 L409 806 L406 806 L403 806 L400 806 L397 806 L394 806 L391 806 L388 806 L385 806 L382 806 L379 806 L376 806 L373 806 L370 806 L367 806 L364 806 L361 806 L358 806 L355 806 L352 806 L349 806 L346 806 L343 806 L340 806 L337 806 L334 806 L331 806 L328 806 L325 806 L322 806 L319 806 L316 806 L313 806 L310 806 L307 806 L304 806 L301 806 L298 806 L295 806 L292 806 L289 806 L286 806 L283 806 L280 806 L277 806 L274 806 L271 806 L268 806 L265 806 L262 806 L259 806 L256 806 L253 806 L250 806 L247 806 L244 806ZM806 560 L803 565 L803 568 L802 570 L803 574 L803 577 L802 580 L802 583 L801 587 L800 590 L801 593 L800 595 L802 600 L801 602 L803 606 L803 608 L802 613 L802 615 L803 618 L803 620 L802 623 L803 627 L803 630 L804 632 L803 635 L802 638 L804 642 L804 645 L805 648 L806 650 L806 647 L806 644 L806 641 L806 638 L806 635 L806 632 L806 629 L806 626 L806 623 L806 620 L806 617 L806 614 L806 611 L806 608 L806 605 L806 602 L806 599 L806 596 L806 593 L806 590 L806 587 L806 584 L806 581 L806 578 L806 575 L806 572 L806 569 L806 566 L806 563ZM344 659 L345 653 L347 654 L351 653 L353 652 L355 648 L357 646 L359 643 L362 644 L360 649 L358 654 L356 655 L352 657 L350 657 L348 657ZM368 652 L370 649 L373 648 L375 644 L378 642 L377 640 L376 636 L376 633 L380 632 L381 635 L383 639 L385 636 L386 631 L389 632 L388 634 L388 638 L391 641 L393 642 L398 644 L395 645 L391 647 L389 646 L383 649 L381 649 L377 649 L375 652 L372 651ZM418 644 L423 642 L424 639 L428 638 L432 641 L437 641 L440 641 L445 639 L447 639 L450 639 L454 641 L454 643 L455 647 L450 648 L445 647 L442 646 L439 645 L435 648 L432 647 L428 647 L425 647 L422 647 L419 647ZM474 657 L477 656 L482 655 L484 656 L489 655 L493 654 L495 652 L499 653 L497 655 L493 659 L489 660 L487 662 L484 666 L482 670 L478 665 L477 662ZM492 674 L495 675 L499 676 L502 677 L506 678 L508 681 L505 683 L502 682 L497 681 L494 677Z" fill="#004263" stroke="#000" stroke-width="1.6" stroke-linejoin="miter"/>
<rect x="6" y="803" width="800" height="3" fill="#004263"/>
<rect x="6" y="757" width="248" height="49" fill="#004263"/>
<path d="M15 719 L20 717 L25 716 L28 717 L32 719 L35 721 L39 722 L38 725 L34 727 L33 730 L30 729 L27 727 L22 725 L18 723ZM65 743 L69 745 L72 740 L74 740 L75 743 L77 746 L80 749 L82 752 L79 753 L74 752 L70 750 L68 747Z" fill="#5d4f4b" stroke="#000" stroke-width="1"/>
<path d="M221 701h2v2h-2zM203 711h2v3h-2zM209 708h2v1h-2zM213 679h2v1h-2zM215 683h3v2h-3zM196 721h1v1h-1zM200 709h3v2h-3zM211 679h1v2h-1zM206 712h3v1h-3zM206 698h2v2h-2zM210 677h4v2h-4zM204 715h2v2h-2zM185 715h2v3h-2zM196 710h2v2h-2zM191 720h2v2h-2zM219 675h1v2h-1zM220 685h2v3h-2zM212 675h2v2h-2zM221 681h2v2h-2zM220 692h2v3h-2zM196 723h2v3h-2zM193 719h4v2h-4zM206 682h3v1h-3zM213 704h3v1h-3zM219 692h2v1h-2zM190 723h2v1h-2zM205 707h3v1h-3zM217 685h3v3h-3zM184 717h3v2h-3zM204 713h3v3h-3zM223 672h4v2h-4zM202 716h3v1h-3zM194 705h1v3h-1zM223 676h4v1h-4zM197 705h3v1h-3zM200 704h3v1h-3zM213 694h1v2h-1zM221 676h1v3h-1zM194 711h3v2h-3zM217 679h4v3h-4zM223 679h3v3h-3zM203 718h2v2h-2zM196 717h3v2h-3zM220 682h3v2h-3zM222 697h4v2h-4zM201 719h1v3h-1zM218 678h3v1h-3zM224 686h2v2h-2zM202 718h1v1h-1zM203 702h2v3h-2zM200 706h1v2h-1zM203 704h2v1h-2zM207 716h2v3h-2zM196 715h4v2h-4zM198 707h3v1h-3zM213 703h1v2h-1zM213 677h3v2h-3zM212 697h2v2h-2zM206 685h2v2h-2zM188 716h3v3h-3zM213 695h4v2h-4zM210 678h3v2h-3zM208 680h2v2h-2zM220 690h3v2h-3zM214 689h4v3h-4zM212 676h2v3h-2zM219 683h3v3h-3zM213 679h3v1h-3zM225 690h4v2h-4zM215 683h2v1h-2zM219 696h2v2h-2zM222 682h3v2h-3zM214 698h3v1h-3zM216 693h2v3h-2zM207 709h2v1h-2zM220 686h2v2h-2zM209 703h4v1h-4zM211 675h1v2h-1zM206 701h2v2h-2zM222 676h3v2h-3zM201 726h3v2h-3zM215 695h3v1h-3zM189 717h1v3h-1zM187 716h2v2h-2zM191 722h2v2h-2zM212 685h1v2h-1zM226 678h1v2h-1zM197 729h3v2h-3zM222 675h2v1h-2zM201 714h1v2h-1zM220 682h3v1h-3zM202 713h3v2h-3zM217 682h2v3h-2zM202 733h3v3h-3zM204 709h1v2h-1zM227 669h1v2h-1zM196 704h1v2h-1zM217 687h3v1h-3zM198 719h4v2h-4zM220 688h3v2h-3zM199 725h4v2h-4zM199 706h3v2h-3zM213 702h4v2h-4zM190 721h2v3h-2zM204 714h3v3h-3zM200 712h2v2h-2zM221 675h2v3h-2zM207 696h3v2h-3zM208 702h2v2h-2zM221 690h2v2h-2zM218 680h2v2h-2zM223 671h3v2h-3zM215 690h1v2h-1zM217 688h4v2h-4zM196 727h2v2h-2zM221 677h3v1h-3zM214 704h2v1h-2zM204 708h2v2h-2zM210 683h3v2h-3zM212 709h4v2h-4zM212 688h2v3h-2zM219 680h3v3h-3zM202 706h3v2h-3zM215 693h2v2h-2zM209 678h2v1h-2zM200 710h2v1h-2zM216 690h3v2h-3zM214 676h3v2h-3zM221 681h2v2h-2zM200 703h3v2h-3zM205 697h4v2h-4zM198 700h2v2h-2zM209 692h3v2h-3zM211 693h3v2h-3zM203 718h2v2h-2zM197 720h2v3h-2zM220 693h2v2h-2zM214 705h3v3h-3zM209 687h3v3h-3zM193 724h2v3h-2zM191 717h2v2h-2zM209 676h2v3h-2zM211 679h3v2h-3zM205 708h4v2h-4zM201 732h1v3h-1zM199 701h2v2h-2zM197 718h2v3h-2zM208 693h3v3h-3zM215 680h4v2h-4zM205 715h2v2h-2zM227 681h3v2h-3zM213 685h2v2h-2zM187 717h2v3h-2zM221 678h1v3h-1zM220 686h3v2h-3zM217 703h2v2h-2zM194 711h3v2h-3zM208 714h2v2h-2zM189 711h2v1h-2zM219 695h3v3h-3zM195 716h1v1h-1zM195 716h2v1h-2zM200 724h3v2h-3zM211 698h2v1h-2zM197 708h3v2h-3zM211 698h2v2h-2zM211 674h1v1h-1zM217 705h4v2h-4zM212 674h3v1h-3zM213 691h3v3h-3zM204 710h1v2h-1zM196 719h2v3h-2zM217 682h1v2h-1zM193 708h3v3h-3zM206 686h3v2h-3zM200 725h2v3h-2zM199 718h2v2h-2zM201 726h3v3h-3zM204 703h3v3h-3zM211 701h1v2h-1zM225 681h4v1h-4zM228 678h1v1h-1zM205 711h3v1h-3zM223 685h2v2h-2zM192 705h3v1h-3zM162 733h4v2h-4zM162 736h4v3h-4zM162 731h3v2h-3zM169 735h3v3h-3zM163 725h2v2h-2zM173 732h3v2h-3zM172 737h2v2h-2zM159 725h4v3h-4zM175 737h2v2h-2zM165 741h1v1h-1zM164 749h3v2h-3zM160 731h2v2h-2zM170 746h3v1h-3zM156 731h4v3h-4zM164 729h4v3h-4zM173 734h4v1h-4zM168 728h2v2h-2zM162 737h1v2h-1zM163 736h1v1h-1zM169 729h2v2h-2zM162 750h2v2h-2zM180 740h4v2h-4zM171 734h2v1h-2zM169 750h3v3h-3zM165 736h2v1h-2zM163 749h3v2h-3zM164 740h1v2h-1zM161 740h2v3h-2zM156 722h4v3h-4zM171 749h4v3h-4zM166 736h1v3h-1zM180 744h2v2h-2zM170 735h4v2h-4zM174 739h3v3h-3zM164 744h2v1h-2zM169 740h3v2h-3zM180 739h2v3h-2zM160 745h2v2h-2zM167 740h3v3h-3zM173 731h4v2h-4zM171 729h4v2h-4zM166 745h2v3h-2zM178 739h1v3h-1zM169 733h1v2h-1zM174 732h2v2h-2zM162 730h1v2h-1zM165 730h2v2h-2zM171 737h3v1h-3zM163 725h3v2h-3zM156 724h4v1h-4zM159 729h2v3h-2zM168 730h3v3h-3zM161 744h2v3h-2zM174 743h2v1h-2zM162 727h3v3h-3zM170 737h4v2h-4zM169 746h2v1h-2zM169 728h2v2h-2zM173 737h3v2h-3zM172 736h1v2h-1zM170 738h3v3h-3zM170 741h4v1h-4zM175 736h4v2h-4zM168 729h1v2h-1zM160 736h2v1h-2zM162 728h2v2h-2zM162 741h1v3h-1zM170 728h4v3h-4zM174 739h3v3h-3zM168 732h2v2h-2zM160 741h3v1h-3zM177 741h2v2h-2zM173 742h3v2h-3zM160 741h2v2h-2zM162 731h2v2h-2zM173 734h3v3h-3zM165 735h4v2h-4zM137 752h3v3h-3zM136 748h2v3h-2zM142 755h2v2h-2zM128 758h4v3h-4zM123 755h3v3h-3zM129 751h1v1h-1zM123 752h2v1h-2zM147 755h3v2h-3zM138 751h3v1h-3zM136 750h4v3h-4zM132 754h2v2h-2zM123 751h1v1h-1zM135 749h2v2h-2zM138 756h1v2h-1zM137 755h4v1h-4zM135 756h1v1h-1zM130 757h3v2h-3zM119 751h1v1h-1zM123 746h2v3h-2zM137 750h4v2h-4zM128 749h3v3h-3zM133 745h2v1h-2zM123 755h2v1h-2zM137 754h2v2h-2zM118 753h2v2h-2zM124 757h3v1h-3zM129 749h2v3h-2zM117 757h4v2h-4zM144 756h2v3h-2zM125 756h3v1h-3zM134 749h1v2h-1zM138 748h1v2h-1zM123 753h4v3h-4zM133 752h3v3h-3zM120 753h1v3h-1zM124 745h2v2h-2zM146 757h2v1h-2zM125 748h1v2h-1zM121 754h2v3h-2zM127 754h4v2h-4zM139 749h2v2h-2zM140 753h2v1h-2zM141 757h1v1h-1zM137 755h2v2h-2zM143 752h1v3h-1zM119 756h4v2h-4zM127 747h4v2h-4zM131 754h4v2h-4zM144 755h3v3h-3zM137 748h2v1h-2zM127 754h2v3h-2zM132 744h3v1h-3zM119 755h2v2h-2zM140 758h2v2h-2zM142 756h3v2h-3zM141 750h3v3h-3zM124 757h1v3h-1zM118 754h3v2h-3zM144 753h3v1h-3zM131 747h1v2h-1zM115 756h2v2h-2zM131 750h3v2h-3zM126 754h3v1h-3zM139 754h1v3h-1zM133 746h2v1h-2zM136 747h3v2h-3zM138 755h2v1h-2zM123 757h1v3h-1zM144 750h1v2h-1zM136 749h1v2h-1zM137 753h1v3h-1zM131 744h2v2h-2zM134 755h4v3h-4zM133 755h3v1h-3zM91 751h3v1h-3zM94 749h2v3h-2zM95 746h2v2h-2zM92 748h1v1h-1zM89 750h1v3h-1zM89 748h1v2h-1zM100 752h2v3h-2zM88 748h2v3h-2zM85 745h2v2h-2zM94 755h2v2h-2zM89 745h2v2h-2zM98 752h3v3h-3zM81 744h3v3h-3zM84 746h4v2h-4zM83 748h3v2h-3zM84 744h3v1h-3zM98 757h2v2h-2zM100 752h3v2h-3zM87 748h4v2h-4zM100 750h1v2h-1zM91 751h1v3h-1zM90 748h4v2h-4zM80 743h2v1h-2zM100 754h4v3h-4zM84 745h3v2h-3zM82 745h3v2h-3zM93 744h2v3h-2zM90 749h2v1h-2zM93 754h2v1h-2zM96 752h2v2h-2zM84 748h2v2h-2zM93 754h1v2h-1zM90 752h4v2h-4zM89 751h1v2h-1zM84 745h4v2h-4zM82 748h4v2h-4zM104 752h2v3h-2zM100 757h1v1h-1zM101 749h2v1h-2zM201 701h2v2h-2zM198 714h1v1h-1zM199 722h2v3h-2zM193 713h2v2h-2zM217 710h2v3h-2zM195 718h2v2h-2zM195 703h3v1h-3zM211 712h3v3h-3zM200 714h1v3h-1zM207 707h2v2h-2zM194 718h3v2h-3zM205 716h1v3h-1zM198 716h3v2h-3zM204 706h2v2h-2zM196 711h2v2h-2zM196 712h2v2h-2zM204 710h2v1h-2zM200 709h2v2h-2zM206 713h3v2h-3zM204 725h2v3h-2zM210 706h3v2h-3zM206 711h2v2h-2zM197 716h2v2h-2zM201 715h2v2h-2zM185 720h1v2h-1zM196 707h3v1h-3zM198 718h1v1h-1zM205 708h2v1h-2zM212 710h2v3h-2zM212 701h3v2h-3zM192 705h3v3h-3zM200 713h3v2h-3zM199 705h1v2h-1zM209 704h1v1h-1zM193 720h2v3h-2zM206 716h3v3h-3zM214 705h1v3h-1zM204 722h3v3h-3zM210 709h2v1h-2zM195 719h4v2h-4zM202 707h4v1h-4zM195 729h2v2h-2zM187 715h2v2h-2zM199 707h1v2h-1zM201 727h2v1h-2zM200 713h1v2h-1zM206 720h3v2h-3zM205 725h4v2h-4zM208 709h2v2h-2zM197 717h1v1h-1zM196 726h2v2h-2zM204 712h2v2h-2zM203 726h4v1h-4zM193 719h3v3h-3zM211 712h3v1h-3zM199 704h1v2h-1zM192 710h2v2h-2zM204 723h1v1h-1zM207 717h1v3h-1zM213 711h2v1h-2zM201 716h1v3h-1zM200 710h1v2h-1zM201 724h3v2h-3zM195 710h4v1h-4zM199 722h1v2h-1zM198 730h3v3h-3zM188 723h2v2h-2zM207 717h3v2h-3zM194 722h3v3h-3zM209 704h3v3h-3zM188 719h2v2h-2zM208 713h4v2h-4zM207 711h1v3h-1zM206 700h1v2h-1zM203 703h4v2h-4zM195 719h3v2h-3zM213 714h3v2h-3zM200 719h3v1h-3zM202 702h3v2h-3zM197 731h2v2h-2zM204 709h2v1h-2zM200 729h2v1h-2zM191 717h4v3h-4zM208 713h4v1h-4zM197 733h2v1h-2zM201 732h2v3h-2zM212 709h4v1h-4zM196 723h3v2h-3zM203 704h3v2h-3zM214 710h2v2h-2zM205 728h3v3h-3zM209 706h2v2h-2zM202 700h2v2h-2zM196 721h2v1h-2zM205 722h2v1h-2zM188 717h3v3h-3zM212 702h1v2h-1zM207 717h4v3h-4zM202 712h2v2h-2zM204 709h2v2h-2zM218 707h2v3h-2zM202 725h2v2h-2zM204 707h3v3h-3zM210 720h4v1h-4zM195 707h2v2h-2zM192 707h1v2h-1zM212 713h2v2h-2zM205 704h2v3h-2zM212 705h2v1h-2zM188 715h2v2h-2zM194 709h3v2h-3zM194 718h3v2h-3zM213 706h2v1h-2zM196 709h4v2h-4zM199 733h4v1h-4zM212 705h3v1h-3zM196 706h2v3h-2zM194 709h1v2h-1zM201 716h3v1h-3zM197 725h3v1h-3zM195 716h4v3h-4zM212 709h3v3h-3zM209 715h2v2h-2zM199 717h4v1h-4zM201 730h2v1h-2zM211 712h3v2h-3zM797 595h2v1h-2zM801 649h4v2h-4zM796 627h2v2h-2zM803 623h2v2h-2zM805 604h2v3h-2zM803 590h3v1h-3zM806 616h1v2h-1zM804 604h4v1h-4zM798 633h2v2h-2zM793 647h2v1h-2zM806 581h3v2h-3zM793 605h2v1h-2zM800 607h3v1h-3zM800 601h1v1h-1zM797 644h2v2h-2zM802 636h4v2h-4zM797 594h2v1h-2zM803 631h3v2h-3zM791 635h4v3h-4zM805 592h4v2h-4zM796 640h2v2h-2zM796 628h4v2h-4zM795 590h2v1h-2zM797 646h1v3h-1zM793 605h2v2h-2zM796 642h2v2h-2zM797 601h4v1h-4zM804 606h2v2h-2zM804 578h1v2h-1zM797 596h4v3h-4zM798 587h2v1h-2zM802 649h1v2h-1zM799 601h3v2h-3zM802 644h3v1h-3zM801 617h3v2h-3zM802 603h3v2h-3zM794 645h2v2h-2zM798 593h1v2h-1zM804 585h2v3h-2zM791 602h3v1h-3zM796 589h2v3h-2zM792 600h2v3h-2zM798 599h2v2h-2zM798 600h3v3h-3zM802 635h4v2h-4zM799 581h2v3h-2zM804 574h1v2h-1zM805 617h2v1h-2zM799 587h2v1h-2zM801 587h4v2h-4zM806 574h3v2h-3zM794 606h2v3h-2zM801 640h3v2h-3zM806 585h2v3h-2zM801 587h2v3h-2zM792 649h2v2h-2zM798 640h3v1h-3zM801 608h2v1h-2zM800 609h3v3h-3zM803 596h2v2h-2zM800 641h1v2h-1zM800 598h1v3h-1zM795 591h1v2h-1zM794 595h2v1h-2zM802 647h2v2h-2zM801 630h1v2h-1zM802 641h2v2h-2zM794 608h4v2h-4zM792 638h2v2h-2zM798 638h2v3h-2zM795 607h3v1h-3zM800 613h2v2h-2zM799 597h2v2h-2zM798 615h1v2h-1zM801 651h3v1h-3zM789 596h1v2h-1zM797 613h2v3h-2zM795 599h3v2h-3zM805 608h3v2h-3zM800 596h1v3h-1zM795 601h2v2h-2zM800 645h3v2h-3zM799 637h3v2h-3zM801 597h4v2h-4zM799 601h1v2h-1zM801 595h1v3h-1zM805 632h1v1h-1zM792 595h2v1h-2zM800 631h2v3h-2zM797 601h3v3h-3zM798 607h3v3h-3zM797 631h3v1h-3zM792 602h3v3h-3zM798 654h2v3h-2zM795 595h4v2h-4zM793 629h3v3h-3zM805 621h4v3h-4zM800 652h2v1h-2zM798 591h4v2h-4zM805 639h4v1h-4zM806 601h2v2h-2zM799 637h3v1h-3zM806 631h2v2h-2zM800 630h2v2h-2zM806 639h3v2h-3zM797 639h3v2h-3zM802 626h1v2h-1zM800 595h2v1h-2zM795 617h4v2h-4zM800 587h3v2h-3zM803 628h2v1h-2zM794 629h3v3h-3zM796 593h1v1h-1zM795 600h1v1h-1zM806 634h3v2h-3zM805 582h3v1h-3zM798 592h2v3h-2zM798 634h3v3h-3zM806 619h2v1h-2zM798 636h3v2h-3zM805 585h4v2h-4zM796 639h4v2h-4zM797 604h2v1h-2zM802 620h3v3h-3zM803 602h1v1h-1zM801 637h2v1h-2zM803 623h2v2h-2zM806 600h1v2h-1zM801 618h2v1h-2zM802 629h3v1h-3zM798 637h2v1h-2zM805 639h3v3h-3zM802 593h3v2h-3zM797 650h3v1h-3zM793 632h3v2h-3zM794 608h2v2h-2zM798 602h2v2h-2zM798 619h4v3h-4zM804 587h3v2h-3zM791 600h2v1h-2zM795 639h2v2h-2zM800 640h2v3h-2zM801 647h2v2h-2zM801 632h4v1h-4zM802 629h4v3h-4zM796 591h2v2h-2zM803 588h4v3h-4zM795 589h1v2h-1zM791 638h2v2h-2zM802 633h3v2h-3zM795 644h2v1h-2zM803 618h1v1h-1zM803 630h4v2h-4zM795 600h3v2h-3zM791 592h2v3h-2zM796 632h2v3h-2zM797 642h3v3h-3zM799 602h4v3h-4zM803 641h4v3h-4zM795 608h3v2h-3zM800 596h3v2h-3zM797 606h2v2h-2zM793 607h1v3h-1zM797 652h2v1h-2zM798 636h3v2h-3zM802 595h2v2h-2zM799 635h3v2h-3zM797 637h3v2h-3zM797 648h1v3h-1zM799 604h3v2h-3zM801 596h4v2h-4zM799 638h1v2h-1zM800 609h2v3h-2zM795 646h1v2h-1zM801 643h3v3h-3zM800 595h1v3h-1zM803 617h2v3h-2zM796 639h2v2h-2zM800 645h3v2h-3zM806 618h3v3h-3zM800 580h2v2h-2zM803 597h4v2h-4zM798 595h2v2h-2zM795 632h4v3h-4zM797 604h3v2h-3zM802 628h1v1h-1zM802 636h3v2h-3zM805 644h2v1h-2zM800 620h2v3h-2zM800 638h3v1h-3zM798 635h2v2h-2zM796 602h1v3h-1zM804 609h2v1h-2zM795 608h2v2h-2zM800 584h2v2h-2zM795 594h1v2h-1zM802 639h2v1h-2zM798 638h2v2h-2zM804 595h3v3h-3zM803 584h3v2h-3zM797 589h3v2h-3zM801 600h3v2h-3zM798 620h1v2h-1zM798 647h2v3h-2zM802 635h2v3h-2zM801 637h1v3h-1zM799 577h4v2h-4zM797 615h3v1h-3zM803 624h3v2h-3zM804 624h3v2h-3zM796 600h1v2h-1zM801 644h2v2h-2zM795 638h2v1h-2zM795 614h2v1h-2zM793 650h3v2h-3zM799 619h4v3h-4zM795 647h1v2h-1zM804 622h2v3h-2zM798 625h3v1h-3zM798 605h3v1h-3zM795 649h3v1h-3zM792 598h1v2h-1zM793 650h2v1h-2zM798 646h3v2h-3zM794 609h4v2h-4zM805 633h2v1h-2zM793 589h3v3h-3zM805 641h4v1h-4zM792 635h2v1h-2zM804 599h4v2h-4zM799 616h2v1h-2zM806 586h2v3h-2zM799 586h1v3h-1zM800 642h3v2h-3zM796 641h1v2h-1zM806 637h1v2h-1zM798 609h2v2h-2zM793 603h2v1h-2zM798 633h4v3h-4zM800 591h3v1h-3zM796 634h2v2h-2zM798 598h3v2h-3zM802 613h3v1h-3zM795 612h3v2h-3zM797 616h3v2h-3zM799 629h2v2h-2zM800 621h3v1h-3zM795 604h4v2h-4zM793 602h4v3h-4zM805 623h4v1h-4zM791 641h2v3h-2zM795 613h3v2h-3zM794 599h1v3h-1zM800 574h3v3h-3zM796 600h3v2h-3zM791 592h3v2h-3zM794 634h4v2h-4zM798 604h1v3h-1zM806 598h2v2h-2zM791 640h2v2h-2zM802 582h3v1h-3zM805 605h4v2h-4zM794 646h3v2h-3zM795 619h3v3h-3zM800 615h2v1h-2zM799 575h2v2h-2zM799 653h2v2h-2zM802 575h3v1h-3zM799 626h3v1h-3zM805 604h3v1h-3zM800 588h3v2h-3zM799 624h4v2h-4zM802 613h3v3h-3zM803 612h4v2h-4zM799 616h1v3h-1zM794 599h1v2h-1zM794 598h2v2h-2zM791 600h3v1h-3zM796 600h2v1h-2zM794 598h3v2h-3zM792 600h3v3h-3zM791 602h3v1h-3zM795 597h1v2h-1zM795 602h3v3h-3zM796 598h4v2h-4zM791 600h2v2h-2z" fill="#000"/>
<path d="M197 714h1v1h-1zM223 692h1v1h-1zM197 706h1v1h-1zM203 721h1v1h-1zM208 701h1v1h-1zM190 723h1v1h-1zM187 720h1v1h-1zM192 709h1v1h-1zM206 716h1v1h-1zM210 711h1v1h-1zM191 722h1v1h-1zM222 673h1v1h-1zM203 717h1v1h-1zM208 708h1v1h-1zM219 690h1v1h-1zM211 708h1v1h-1zM167 747h1v1h-1zM174 744h1v1h-1zM164 732h1v1h-1zM158 731h1v1h-1zM173 744h1v1h-1zM166 741h1v1h-1zM171 741h1v1h-1zM166 738h1v1h-1zM168 734h1v1h-1zM160 740h1v1h-1zM167 747h1v1h-1zM169 731h1v1h-1zM175 746h1v1h-1zM129 749h1v1h-1zM135 749h1v1h-1zM130 754h1v1h-1zM123 751h1v1h-1zM127 754h1v1h-1zM121 755h1v1h-1zM137 751h1v1h-1zM136 748h1v1h-1zM92 746h1v1h-1zM91 746h1v1h-1zM80 745h1v1h-1zM94 746h1v1h-1zM90 748h1v1h-1zM102 749h1v1h-1zM203 703h1v1h-1zM210 704h1v1h-1zM209 714h1v1h-1zM189 723h1v1h-1zM210 702h1v1h-1zM192 721h1v1h-1zM214 712h1v1h-1zM202 732h1v1h-1zM186 716h1v1h-1zM191 720h1v1h-1zM217 708h1v1h-1zM209 710h1v1h-1zM197 730h1v1h-1zM211 704h1v1h-1zM195 707h1v1h-1zM195 707h1v1h-1zM199 705h1v1h-1zM206 708h1v1h-1zM196 707h1v1h-1zM801 581h1v1h-1zM798 574h1v1h-1zM796 645h1v1h-1zM806 596h1v1h-1zM795 630h1v1h-1zM796 599h1v1h-1zM801 623h1v1h-1zM791 604h1v1h-1zM804 615h1v1h-1zM798 607h1v1h-1zM790 602h1v1h-1zM800 650h1v1h-1zM798 582h1v1h-1zM801 617h1v1h-1zM805 591h1v1h-1zM804 634h1v1h-1zM794 651h1v1h-1zM792 612h1v1h-1zM804 581h1v1h-1zM802 600h1v1h-1zM805 607h1v1h-1zM804 645h1v1h-1zM798 601h1v1h-1zM798 592h1v1h-1zM792 595h1v1h-1zM800 583h1v1h-1zM792 591h1v1h-1zM800 611h1v1h-1zM791 594h1v1h-1zM806 604h1v1h-1zM793 599h1v1h-1z" fill="#004263"/>
<path d="M226 682h1v1h-1zM198 713h1v1h-1zM200 704h1v1h-1zM203 701h1v1h-1zM221 687h1v1h-1zM192 717h1v1h-1zM191 705h1v1h-1zM222 699h1v1h-1zM213 678h1v1h-1zM198 721h1v1h-1zM210 696h1v1h-1zM210 693h1v1h-1zM212 700h1v1h-1zM207 702h1v1h-1zM209 688h1v1h-1zM208 693h1v1h-1zM209 685h1v1h-1zM217 684h1v1h-1zM219 675h1v1h-1zM201 729h1v1h-1zM170 734h1v1h-1zM162 747h1v1h-1zM167 743h1v1h-1zM165 748h1v1h-1zM169 749h1v1h-1zM162 740h1v1h-1zM176 737h1v1h-1zM169 732h1v1h-1zM147 758h1v1h-1zM131 744h1v1h-1zM131 751h1v1h-1zM122 746h1v1h-1zM122 755h1v1h-1zM119 758h1v1h-1zM138 748h1v1h-1zM95 754h1v1h-1zM93 752h1v1h-1zM97 757h1v1h-1zM210 716h1v1h-1zM207 704h1v1h-1zM187 719h1v1h-1zM204 727h1v1h-1zM198 716h1v1h-1zM198 731h1v1h-1zM192 715h1v1h-1zM201 704h1v1h-1zM204 706h1v1h-1zM190 723h1v1h-1zM187 715h1v1h-1zM198 729h1v1h-1zM199 700h1v1h-1zM798 643h1v1h-1zM793 632h1v1h-1zM804 634h1v1h-1zM800 637h1v1h-1zM799 592h1v1h-1zM805 605h1v1h-1zM794 635h1v1h-1zM793 631h1v1h-1zM794 638h1v1h-1zM794 631h1v1h-1zM801 649h1v1h-1zM796 596h1v1h-1zM804 573h1v1h-1zM800 637h1v1h-1zM805 603h1v1h-1zM797 598h1v1h-1zM797 621h1v1h-1zM798 578h1v1h-1zM803 585h1v1h-1zM805 579h1v1h-1zM796 593h1v1h-1zM805 601h1v1h-1zM803 597h1v1h-1zM792 636h1v1h-1zM799 645h1v1h-1zM798 617h1v1h-1zM797 642h1v1h-1zM804 640h1v1h-1zM797 582h1v1h-1zM801 614h1v1h-1zM790 602h1v1h-1zM798 610h1v1h-1zM799 622h1v1h-1zM797 634h1v1h-1zM793 601h1v1h-1z" fill="#5d4f4b"/>
<path d="M250 679 L252 682 L254 686 L254 690 L255 695 L253 698 L253 700 L251 703 L249 706 L247 710M243 716 L239 719M236 723 L233 726M229 728 L226 729 L224 731M258 661 L262 662 L265 662 L269 663 L274 664M278 664 L282 664 L285 665M241 664 L244 663 L248 662 L250 661M229 662 L234 662 L235 665 L232 666M241 700 L243 698 L247 695 L250 693M270 662 L274 662 L277 664 L281 664 L285 665M309 664 L313 664 L317 664 L319 663 L323 663 L326 663 L329 662 L334 660M344 659 L347 659 L350 658 L353 657 L356 655 L359 654 L362 654 L365 652 L368 652 L372 652 L374 651 L378 651 L382 651 L385 649 L388 649 L391 648 L395 649 L398 648 L402 648 L405 648 L408 648 L412 649 L414 648 L418 648 L422 649 L424 649 L428 650 L431 651 L434 650 L438 651 L441 652 L443 654 L446 654 L449 655 L452 656M513 712 L515 712 L519 713 L522 713 L525 714 L529 714 L532 717 L535 719 L538 718 L541 717 L545 716 L547 714 L550 712 L553 710 L557 708M534 719 L537 719 L540 718 L543 716 L546 715 L550 713 L554 710 L557 708 L561 706 L564 704 L567 702M508 694 L513 696 L514 700 L515 703 L514 706 L514 711" fill="none" stroke="#000" stroke-width="1.3"/>
<path d="M784.4 653.9 L786.2 660.1 L787.4 665 L785.6 669.9 L786.8 676.1 L788.1 682.3 L791.8 686 L792.4 692.1 L793 696.1 L789.8 698.5 L793.5 705.9 L788.6 715.7 L786.1 723.1 L784.9 733M781.9 669.9 L779.4 674.9" fill="none" stroke="#000" stroke-width="3.4" stroke-linejoin="round"/>
<path d="M784.4 653.9 L786.2 660.1 L787.4 665 L785.6 669.9 L786.8 676.1 L788.1 682.3 L791.8 686 L792.4 692.1 L793 696.1 L789.8 698.5 L793.5 705.9 L788.6 715.7 L786.1 723.1 L784.9 733M781.9 669.9 L779.4 674.9" fill="none" stroke="#0a4a74" stroke-width="1.8" stroke-linejoin="round"/>
<path d="M6.2 105.4 L155.1 105.4 L157.6 112 L161.3 115.7 L160.1 123.1 L153.9 128.1 L147.8 134.2 L142.8 142.8 L137.9 149 L187.2 149M209.3 104.7 L280 105.2 L311.9 105.2 L310.6 88.7 L325.4 92.3 L420.2 90.6 L481.8 93.6 L550 95.3 L571.9 96 L635.9 96.8 L658.1 94.8 L741.8 96 L787.3 94.8 L805.8 98M635.9 96 L648.2 89.9 L660.5 86.2 L675.3 83.7 L680.2 75.1 L692.5 71.4 L697.5 66.5 L698.7 60.3 L706.1 55.4 L708.5 48 L724.5 40.6 L741.8 33.2 L754.1 22.2 L762.7 14.8 L760.3 11.1 L751.6 9.9 L747.9 6.2M762.7 14.8 L766.4 13.5 L765.2 20.9 L768.9 27.1 L776.3 35.7 L783.6 41.9 L796 39.4 L805.8 34.5M787.3 94.8 L783.6 99.7 L783.6 108.4 L781.2 112 L782.4 118.2 L772.6 119.4 L766.4 125.6 L762.7 134.2 L756.6 139.1 L746.7 136.7 L739.3 136.7 L731.9 140.4 L724.5 149 L718.4 152.7 L714.7 145.3 L709.8 144.1 L702.4 150.2 L695 153.9 L692.5 162.5 L687.6 168.7 L677.8 169.9 L667.9 176.1 L660.5 181 L648.2 188.4 L633.4 188.4 L621.1 192.1 L612.5 200 L610 209.9 L603.9 214.8 L594 216 L589.1 219.7 L588.4 238.7M142.8 238.7 L280 238.7 L299.6 237.7 L398.1 238.7 L492.9 239.4 L550 239.4 L588.4 238.9 L658.1 238.7 L679 238.2M299.6 237.7 L306.9 246.8 L305.7 266.5 L302 298.5 L297.1 347.8 L292.2 400 L287.2 449.3 L281.1 498.5 L279.9 535.4 L281.1 572.4 L283.5 600 L284.8 624.6 L285.3 648M492.9 239.4 L496.6 261.6 L503.9 303.4 L511.3 347.8 L518.7 389.6 L520 400 L524.9 427.1 L531 446.8 L538.4 459.1 L539.7 469 L537.2 476.3 L544.6 481.3 L545.8 486.2 L536 491.1 L532.3 503.4 L531 523.1 L534.7 537.9 L533.5 552.7 L529.8 572.4 L533.5 587.2 L537.2 594.5M679 238.2 L687.6 233.2 L702.4 230.8 L717.2 225.9 L731.9 220.9 L744.2 220.4 L776.3 221.7 L805.8 223.4M679 238.2 L677.8 243.1 L667.9 249.3 L661.8 257.9 L660.5 264 L667.9 271.4 L677.8 278.8 L685.1 284.2 L693.8 284.2 L698.7 291.1 L703.6 301 L707.3 312 L713.5 320.7 L719.6 330.5 L729.5 337.9 L739.3 345.3 L744.2 355.1 L751.6 362.5 L759 367.5 L766.4 376.1 L765.2 383.5 L772.6 390.9 L778.7 400 L783.6 406.2 L794.7 411.1 L798.4 419.7 L802.1 429.6 L805.8 439.4M6.2 415.3 L77.6 415.3M46.8 593.8 L185.9 594.5 L185.9 600 L178.5 612.3 L177.3 624.6 L182.2 636.9 L188.4 644.3 L190.9 654.2 L194.5 661.6 L197 666.5M343.9 600 L343.9 594.5 L537.2 594.5 L538.4 600M343.9 600 L341.4 606.2 L348.8 612.3 L355 619.7 L358.7 625.9 L356.2 634.5 L357.4 640.6 L359.9 644.3M548.5 619.7 L603.9 623.4 L667.9 627.1 L744.2 632 L745.5 641.9 L746.7 649.3 L754.1 651.7 L759 648 L760.3 636.9 L759 624.6 L757.8 614.8 L763.9 609.9 L773.8 612.3 L786.1 617.2 L796 619.7M204.2 6.2 L201.7 8.6 L202.3 13.5 L205.4 17.2 L207.9 22.2 L208.5 28.3 L204.2 30.2 L201.7 33.2 L202.3 36.9 L206 38.2 L207.9 43.1 L210.3 49.3 L212.8 54.2 L215.9 57.9 L219 60.9 L221.4 59.1 L220.8 55.4 L217.1 54.8 L215.3 56.6 L219 60.9 L223.9 59.1 L225.7 60.3 L228.8 61.6 L231.9 62.8 L231.9 67.7 L230 72.6 L226.3 75.1 L227 78.8 L230.7 80 L230 82.5 L226.3 83.7 L225.7 87.4 L228.8 90.5 L228.4 90 L225.9 93.7 L224.7 98 L221 99.2 L218.5 96.8 L215.4 93.1 L212.3 93.7 L211.1 98.6 L209.3 103.5 L206.2 107.2 L203.7 104.8 L205 100.5 L203.1 97.4 L199.4 97.4 L197.6 100.5 L199.4 104.2 L201.3 106 L200 109.7 L201.3 114.6 L200.7 118.3 L196.3 118.9 L194.5 120.8 L195.7 123.2 L200 124.5 L200 126.3 L196.3 126.9 L190.8 126.3 L189 128.2 L191.4 130.6 L193.9 133.1 L196.3 136.8 L193.9 138.6 L190.8 140.5 L189.6 144.2 L187.1 147.9 L187.1 151.6 L190.2 154 L192.6 157.1 L189 157.7 L184.6 157.7 L183.4 160.8 L187.1 163.3 L186.5 165.7 L182.8 167 L179.1 170 L175.4 171.9 L171.7 170.7 L169.3 172.5 L169.9 177.4 L172.9 178.7 L176 179.3 L176 181.7 L171.7 183.6 L169.7 185 L172.2 188.1 L172.2 192.4 L168.5 189.3 L165.4 188.7 L163 191.8 L164.8 196.1 L163.6 201 L160.5 203.5 L161.7 198.5 L159.3 195.5 L156.2 197.3 L153.1 201.6 L153.7 204.7 L157.4 203.5 L160.5 204.7 L158.7 207.8 L155.6 210.9 L153.7 212.7 L154.3 215.8 L158.7 215.8 L160.5 218.9 L158 221.3 L158.7 224.4 L160.5 226.9 L155 226.2 L152.5 229.3 L151.3 233.6 L147 234.9 L143.9 234.9 L142.6 237.9 L143.9 241 L147 242.3 L147.6 246.6 L143.9 249 L140.2 251.5 L136.5 252.7 L134 249.6 L131.6 247.2 L129.1 249 L130.9 252.1 L130.3 255.2 L126.6 255.8 L124.8 258.9 L127.9 261.3 L131.6 260.1 L129.1 263.8 L125.4 265 L124.2 268.7 L126.6 271.2 L130.9 267.5 L130.3 265 L124.2 265.7 L122.3 268.7 L122.3 274.9 L124.8 278.6 L122.9 280.4 L123.7 280 L122.5 283.7 L123.7 287.4 L123.1 291.1 L118.8 292.3 L115.1 293.5 L116.3 297.2 L114.5 299.7 L113.3 296 L110.2 294.8 L108.3 296 L110.8 299.7 L109.6 302.8 L105.3 302.8 L102.8 306.5 L99.1 305.2 L96.6 306.5 L99.1 309.6 L104 310.2 L105.9 312.6 L102.8 314.5 L99.1 313.2 L96 312.6 L94.2 315.7 L96.6 318.2 L100.3 318.8 L100.9 322.5 L97.9 324.9 L93.6 326.8 L94.2 329.9 L91.7 330.5 L88.6 328 L84.9 329.9 L86.8 331.7 L91.1 332.9 L88.6 336.6 L86.2 340.3 L88 344 L92.3 345.3 L92.3 347.7 L87.4 347.7 L83.1 346.5 L80.6 348.3 L81.2 352.6 L84.3 354.5 L88 353.9 L89.3 355.7 L85.6 357.6 L81.9 357 L78.2 353.9 L75.1 354.5 L75.1 358.2 L78.8 359.4 L81.2 361.3 L80.6 364.3 L76.3 365 L74.5 367.4 L76.9 370.5 L80.6 371.7 L77.3 370 L74.8 373.7 L74.2 376.8 L77.3 379.2 L80.9 377.4 L82.2 373.7 L79.1 371.8 L77.9 374.9 L79.7 378.6 L84 380.5 L87.1 378.6 L87.1 375.5 L84.6 375.5 L83.4 379.9 L80.9 383.5 L80.3 387.2 L81.6 390.9 L84 393.4 L87.1 394 L88.3 391.5 L86.5 390.3 L84.6 393.4 L85.3 398.3 L84.6 402.6 L80.9 403.9 L77.9 403.2 L76 405.7 L77.9 408.2 L81.6 410 L82.2 413.1 L79.7 415.6 L76.6 418.6 L75.4 421.7 L76.6 424.2 L79.7 424.8 L80.9 422.3 L80.9 418.6 L84 418 L86.5 420.5 L86.5 424.2 L84.6 427.3 L81.6 429.1 L79.7 431.6 L80 430 L79.4 437.4 L86.2 441.1 L81.3 446 L80.7 450.3 L85 452.2 L89.9 448.5 L91.7 450.9 L88.7 454.6 L83.7 456.5 L85 460.8 L91.1 462 L92.3 466.9 L92.3 471.9 L99.7 472.5 L98.5 476.8 L94.8 478 L92.3 484.2 L86.2 484.8 L80 487.3 L78.8 491.6 L81.3 494.6 L87.4 494 L91.1 489.1 L90.5 485.4 L91.7 491.6 L88.7 495.3 L85 500.2 L83.7 505.1 L78.8 510 L77.6 510 L76.3 513.1 L72.6 516.2 L70.2 519.2 L67.1 518.6 L66.5 520.5 L70.2 521.7 L72.6 520.5 L72 522.9 L69 525.4 L72.6 526 L72 528.5 L67.1 527.9 L64 528.5 L62.8 532.2 L62.2 537.1 L60.3 539.6 L56.6 538.9 L54.2 536.5 L51.7 539.6 L56 541.4 L60.3 541.4 L61.6 543.2 L57.9 545.7 L54.2 546.9 L52.9 550.6 L53.6 554.3 L56 557.4 L55.4 560.5 L52.3 560.5 L50.5 557.4 L48.6 558 L49.3 560.5 L51.1 562.9 L51.7 565.4 L53.6 566.6 L52.9 569.7 L48 570.3 L43.1 570.3 L44.9 574 L46.8 577.1 L46.2 580.2 L44.3 582.6 L47.4 585.7 L49.3 588.8 L47.4 591.9 L44.9 594.6M223.9 59.1 L225.7 56.6 L228.8 51.7 L232.5 46.8 L236.2 41.9 L239.9 39.4 L244.8 39.4 L248.5 41.2 L254.7 43.7 L260.8 46.8 L267 48.6 L271.9 51.7 L275.6 54.2 L280.5 53.6 L283.6 49.3 L283 44.3 L279.3 39.4 L276.8 34.5 L278.1 28.3 L279.9 24 L284.2 22.2 L290 22.2 L279.9 33.2 L278.6 27.1 L284.8 23.4 L297.1 20.9 L308.2 17.2 L309.4 11.1 L304.5 6.2" fill="none" stroke="#000" stroke-width="1" stroke-linejoin="round"/>
<path d="M75 6h2v1h-2zM737 6h2v1h-2zM74 7h1v1h-1zM739 7h1v1h-1zM73 8h1v1h-1zM740 8h1v1h-1zM72 9h1v1h-1zM741 9h1v1h-1zM70 10h2v1h-2zM742 10h2v1h-2zM69 11h2v1h-2zM743 11h2v1h-2zM68 12h2v1h-2zM744 12h2v1h-2zM67 13h1v1h-1zM746 13h1v1h-1zM66 14h1v1h-1zM747 14h1v1h-1zM65 15h1v1h-1zM748 15h1v1h-1zM63 16h2v1h-2zM749 16h2v1h-2zM62 17h2v1h-2zM750 17h2v1h-2zM61 18h2v1h-2zM751 18h2v1h-2zM60 19h2v1h-2zM752 19h2v1h-2zM59 20h1v1h-1zM754 20h1v1h-1zM58 21h1v1h-1zM755 21h1v1h-1zM57 22h1v1h-1zM756 22h1v1h-1zM56 23h1v1h-1zM757 23h1v1h-1zM55 24h1v1h-1zM758 24h1v1h-1zM53 25h2v1h-2zM759 25h2v1h-2zM52 26h2v1h-2zM760 26h2v1h-2zM51 27h2v1h-2zM761 27h2v1h-2zM50 28h2v1h-2zM762 28h2v1h-2zM49 29h2v1h-2zM763 29h2v1h-2zM48 30h2v1h-2zM764 30h2v1h-2zM47 31h2v1h-2zM765 31h2v1h-2zM46 32h1v1h-1zM767 32h1v1h-1zM45 33h1v1h-1zM768 33h1v1h-1zM44 34h1v1h-1zM769 34h1v1h-1zM43 35h1v1h-1zM770 35h1v1h-1zM42 36h1v1h-1zM771 36h1v1h-1zM41 37h1v1h-1zM772 37h1v1h-1zM40 38h1v1h-1zM773 38h1v1h-1zM39 39h1v1h-1zM774 39h1v1h-1zM38 40h1v1h-1zM775 40h1v1h-1zM37 41h1v1h-1zM776 41h1v1h-1zM36 42h1v1h-1zM777 42h1v1h-1zM35 43h1v1h-1zM778 43h1v1h-1zM34 44h1v1h-1zM779 44h1v1h-1zM33 45h1v1h-1zM780 45h1v1h-1zM32 46h1v1h-1zM781 46h1v1h-1zM31 47h1v1h-1zM782 47h1v1h-1zM30 48h2v1h-2zM782 48h2v1h-2zM29 49h2v1h-2zM783 49h2v1h-2zM28 50h2v1h-2zM784 50h2v1h-2zM27 51h2v1h-2zM785 51h2v1h-2zM26 52h2v1h-2zM786 52h2v1h-2zM25 53h2v1h-2zM787 53h2v1h-2zM25 54h1v1h-1zM788 54h1v1h-1zM24 55h1v1h-1zM789 55h1v1h-1zM23 56h1v1h-1zM790 56h1v1h-1zM22 57h1v1h-1zM791 57h1v1h-1zM21 58h1v1h-1zM792 58h1v1h-1zM20 59h1v1h-1zM793 59h1v1h-1zM19 60h1v1h-1zM794 60h1v1h-1zM18 61h2v1h-2zM794 61h2v1h-2zM17 62h2v1h-2zM795 62h2v1h-2zM16 63h2v1h-2zM796 63h2v1h-2zM16 64h1v1h-1zM797 64h1v1h-1zM15 65h1v1h-1zM798 65h1v1h-1zM14 66h1v1h-1zM799 66h1v1h-1zM13 67h1v1h-1zM800 67h1v1h-1zM12 68h1v1h-1zM801 68h1v1h-1zM11 69h2v1h-2zM801 69h2v1h-2zM10 70h2v1h-2zM802 70h2v1h-2zM10 71h1v1h-1zM803 71h1v1h-1zM9 72h1v1h-1zM804 72h1v1h-1zM8 73h1v1h-1zM805 73h1v1h-1zM7 74h1v1h-1zM6 75h1v1h-1zM6 76h1v1h-1zM6 737h1v1h-1zM6 738h1v1h-1zM7 739h1v1h-1zM8 740h1v1h-1zM805 740h1v1h-1zM9 741h1v1h-1zM804 741h1v1h-1zM10 742h1v1h-1zM803 742h1v1h-1zM10 743h2v1h-2zM802 743h2v1h-2zM11 744h2v1h-2zM801 744h2v1h-2zM12 745h1v1h-1zM801 745h1v1h-1zM13 746h1v1h-1zM800 746h1v1h-1zM14 747h1v1h-1zM799 747h1v1h-1zM15 748h1v1h-1zM798 748h1v1h-1zM16 749h1v1h-1zM797 749h1v1h-1zM16 750h2v1h-2zM796 750h2v1h-2zM17 751h2v1h-2zM795 751h2v1h-2zM18 752h2v1h-2zM794 752h2v1h-2zM19 753h1v1h-1zM794 753h1v1h-1zM20 754h1v1h-1zM793 754h1v1h-1zM21 755h1v1h-1zM792 755h1v1h-1zM22 756h1v1h-1zM791 756h1v1h-1zM23 757h1v1h-1zM790 757h1v1h-1zM24 758h1v1h-1zM789 758h1v1h-1zM25 759h1v1h-1zM788 759h1v1h-1zM25 760h2v1h-2zM787 760h2v1h-2zM26 761h2v1h-2zM786 761h2v1h-2zM27 762h2v1h-2zM785 762h2v1h-2zM28 763h2v1h-2zM784 763h2v1h-2zM29 764h2v1h-2zM783 764h2v1h-2zM30 765h2v1h-2zM782 765h2v1h-2zM31 766h1v1h-1zM782 766h1v1h-1zM32 767h1v1h-1zM781 767h1v1h-1zM33 768h1v1h-1zM780 768h1v1h-1zM34 769h1v1h-1zM779 769h1v1h-1zM35 770h1v1h-1zM778 770h1v1h-1zM36 771h1v1h-1zM777 771h1v1h-1zM37 772h1v1h-1zM776 772h1v1h-1zM38 773h1v1h-1zM775 773h1v1h-1zM39 774h1v1h-1zM774 774h1v1h-1zM40 775h1v1h-1zM773 775h1v1h-1zM41 776h1v1h-1zM772 776h1v1h-1zM42 777h1v1h-1zM771 777h1v1h-1zM43 778h1v1h-1zM770 778h1v1h-1zM44 779h1v1h-1zM769 779h1v1h-1zM45 780h1v1h-1zM768 780h1v1h-1zM46 781h1v1h-1zM767 781h1v1h-1zM47 782h2v1h-2zM765 782h2v1h-2zM48 783h2v1h-2zM764 783h2v1h-2zM49 784h2v1h-2zM763 784h2v1h-2zM50 785h2v1h-2zM762 785h2v1h-2zM51 786h2v1h-2zM761 786h2v1h-2zM52 787h2v1h-2zM760 787h2v1h-2zM53 788h2v1h-2zM759 788h2v1h-2zM55 789h1v1h-1zM758 789h1v1h-1zM56 790h1v1h-1zM757 790h1v1h-1zM57 791h1v1h-1zM756 791h1v1h-1zM58 792h1v1h-1zM755 792h1v1h-1zM59 793h1v1h-1zM754 793h1v1h-1zM60 794h2v1h-2zM752 794h2v1h-2zM61 795h2v1h-2zM751 795h2v1h-2zM62 796h2v1h-2zM750 796h2v1h-2zM63 797h2v1h-2zM749 797h2v1h-2zM65 798h1v1h-1zM748 798h1v1h-1zM66 799h1v1h-1zM747 799h1v1h-1zM67 800h1v1h-1zM746 800h1v1h-1zM68 801h2v1h-2zM744 801h2v1h-2zM69 802h2v1h-2zM743 802h2v1h-2zM70 803h2v1h-2zM742 803h2v1h-2zM72 804h1v1h-1zM741 804h1v1h-1zM73 805h1v1h-1zM740 805h1v1h-1zM387 7h7v1h-7zM417 7h10v1h-10zM372 8h15v1h-15zM427 8h15v1h-15zM362 9h10v1h-10zM442 9h10v1h-10zM354 10h8v1h-8zM452 10h8v1h-8zM347 11h7v1h-7zM460 11h7v1h-7zM341 12h6v1h-6zM467 12h6v1h-6zM335 13h6v1h-6zM473 13h6v1h-6zM330 14h5v1h-5zM479 14h5v1h-5zM325 15h5v1h-5zM484 15h5v1h-5zM320 16h5v1h-5zM489 16h5v1h-5zM316 17h4v1h-4zM494 17h4v1h-4zM312 18h4v1h-4zM498 18h4v1h-4zM308 19h4v1h-4zM502 19h4v1h-4zM304 20h4v1h-4zM506 20h4v1h-4zM300 21h4v1h-4zM510 21h4v1h-4zM297 22h3v1h-3zM514 22h3v1h-3zM293 23h4v1h-4zM517 23h4v1h-4zM290 24h3v1h-3zM521 24h3v1h-3zM287 25h3v1h-3zM524 25h3v1h-3zM284 26h3v1h-3zM527 26h3v1h-3zM281 27h3v1h-3zM530 27h3v1h-3zM278 28h3v1h-3zM533 28h3v1h-3zM275 29h3v1h-3zM536 29h3v1h-3zM272 30h3v1h-3zM539 30h3v1h-3zM269 31h3v1h-3zM542 31h3v1h-3zM266 32h3v1h-3zM545 32h3v1h-3zM264 33h3v1h-3zM547 33h3v1h-3zM261 34h3v1h-3zM550 34h3v1h-3zM259 35h2v1h-2zM553 35h2v1h-2zM256 36h3v1h-3zM555 36h3v1h-3zM254 37h2v1h-2zM558 37h2v1h-2zM251 38h3v1h-3zM560 38h3v1h-3zM249 39h3v1h-3zM562 39h3v1h-3zM247 40h2v1h-2zM565 40h2v1h-2zM244 41h3v1h-3zM567 41h3v1h-3zM242 42h3v1h-3zM569 42h3v1h-3zM240 43h2v1h-2zM572 43h2v1h-2zM238 44h2v1h-2zM574 44h2v1h-2zM236 45h2v1h-2zM576 45h2v1h-2zM234 46h2v1h-2zM578 46h2v1h-2zM232 47h2v1h-2zM580 47h2v1h-2zM230 48h2v1h-2zM582 48h2v1h-2zM228 49h2v1h-2zM584 49h2v1h-2zM226 50h2v1h-2zM586 50h2v1h-2zM224 51h2v1h-2zM588 51h2v1h-2zM222 52h2v1h-2zM590 52h2v1h-2zM220 53h2v1h-2zM592 53h2v1h-2zM218 54h2v1h-2zM594 54h2v1h-2zM216 55h2v1h-2zM596 55h2v1h-2zM214 56h2v1h-2zM598 56h2v1h-2zM212 57h3v1h-3zM599 57h3v1h-3zM211 58h2v1h-2zM601 58h2v1h-2zM209 59h2v1h-2zM603 59h2v1h-2zM207 60h2v1h-2zM605 60h2v1h-2zM205 61h2v1h-2zM607 61h2v1h-2zM204 62h2v1h-2zM608 62h2v1h-2zM202 63h2v1h-2zM610 63h2v1h-2zM200 64h2v1h-2zM612 64h2v1h-2zM199 65h2v1h-2zM613 65h2v1h-2zM197 66h2v1h-2zM615 66h2v1h-2zM195 67h2v1h-2zM617 67h2v1h-2zM194 68h2v1h-2zM618 68h2v1h-2zM192 69h2v1h-2zM620 69h2v1h-2zM191 70h2v1h-2zM621 70h2v1h-2zM189 71h2v1h-2zM623 71h2v1h-2zM188 72h1v1h-1zM625 72h1v1h-1zM186 73h2v1h-2zM626 73h2v1h-2zM185 74h1v1h-1zM628 74h1v1h-1zM183 75h2v1h-2zM629 75h2v1h-2zM182 76h1v1h-1zM631 76h1v1h-1zM180 77h2v1h-2zM632 77h2v1h-2zM179 78h2v1h-2zM633 78h2v1h-2zM177 79h2v1h-2zM635 79h2v1h-2zM176 80h2v1h-2zM636 80h2v1h-2zM175 81h1v1h-1zM638 81h1v1h-1zM173 82h2v1h-2zM639 82h2v1h-2zM172 83h1v1h-1zM641 83h1v1h-1zM170 84h2v1h-2zM642 84h2v1h-2zM169 85h2v1h-2zM643 85h2v1h-2zM168 86h1v1h-1zM645 86h1v1h-1zM166 87h2v1h-2zM646 87h2v1h-2zM165 88h2v1h-2zM647 88h2v1h-2zM164 89h1v1h-1zM649 89h1v1h-1zM162 90h2v1h-2zM650 90h2v1h-2zM161 91h2v1h-2zM651 91h2v1h-2zM160 92h1v1h-1zM653 92h1v1h-1zM159 93h1v1h-1zM654 93h1v1h-1zM157 94h2v1h-2zM655 94h2v1h-2zM156 95h2v1h-2zM656 95h2v1h-2zM155 96h1v1h-1zM658 96h1v1h-1zM154 97h1v1h-1zM659 97h1v1h-1zM152 98h2v1h-2zM660 98h2v1h-2zM151 99h2v1h-2zM661 99h2v1h-2zM150 100h2v1h-2zM662 100h2v1h-2zM149 101h1v1h-1zM664 101h1v1h-1zM148 102h1v1h-1zM665 102h1v1h-1zM146 103h2v1h-2zM666 103h2v1h-2zM145 104h2v1h-2zM667 104h2v1h-2zM144 105h2v1h-2zM668 105h2v1h-2zM143 106h2v1h-2zM669 106h2v1h-2zM142 107h1v1h-1zM671 107h1v1h-1zM141 108h1v1h-1zM672 108h1v1h-1zM140 109h1v1h-1zM673 109h1v1h-1zM139 110h1v1h-1zM674 110h1v1h-1zM137 111h2v1h-2zM675 111h2v1h-2zM136 112h2v1h-2zM676 112h2v1h-2zM135 113h2v1h-2zM677 113h2v1h-2zM134 114h2v1h-2zM678 114h2v1h-2zM133 115h2v1h-2zM679 115h2v1h-2zM132 116h1v1h-1zM681 116h1v1h-1zM131 117h1v1h-1zM682 117h1v1h-1zM130 118h1v1h-1zM683 118h1v1h-1zM129 119h1v1h-1zM684 119h1v1h-1zM128 120h1v1h-1zM685 120h1v1h-1zM127 121h1v1h-1zM686 121h1v1h-1zM126 122h1v1h-1zM687 122h1v1h-1zM125 123h1v1h-1zM688 123h1v1h-1zM124 124h1v1h-1zM689 124h1v1h-1zM123 125h1v1h-1zM690 125h1v1h-1zM122 126h1v1h-1zM691 126h1v1h-1zM121 127h1v1h-1zM692 127h1v1h-1zM120 128h1v1h-1zM693 128h1v1h-1zM119 129h1v1h-1zM694 129h1v1h-1zM118 130h1v1h-1zM695 130h1v1h-1zM117 131h1v1h-1zM696 131h1v1h-1zM116 132h1v1h-1zM697 132h1v1h-1zM115 133h1v1h-1zM698 133h1v1h-1zM114 134h2v1h-2zM698 134h2v1h-2zM113 135h2v1h-2zM699 135h2v1h-2zM112 136h2v1h-2zM700 136h2v1h-2zM111 137h2v1h-2zM701 137h2v1h-2zM111 138h1v1h-1zM702 138h1v1h-1zM110 139h1v1h-1zM703 139h1v1h-1zM109 140h1v1h-1zM704 140h1v1h-1zM108 141h1v1h-1zM705 141h1v1h-1zM107 142h1v1h-1zM706 142h1v1h-1zM106 143h1v1h-1zM707 143h1v1h-1zM105 144h2v1h-2zM707 144h2v1h-2zM104 145h2v1h-2zM708 145h2v1h-2zM103 146h2v1h-2zM709 146h2v1h-2zM103 147h1v1h-1zM710 147h1v1h-1zM102 148h1v1h-1zM711 148h1v1h-1zM101 149h1v1h-1zM712 149h1v1h-1zM100 150h1v1h-1zM713 150h1v1h-1zM99 151h2v1h-2zM713 151h2v1h-2zM98 152h2v1h-2zM714 152h2v1h-2zM98 153h1v1h-1zM715 153h1v1h-1zM97 154h1v1h-1zM716 154h1v1h-1zM96 155h1v1h-1zM717 155h1v1h-1zM95 156h1v1h-1zM718 156h1v1h-1zM94 157h2v1h-2zM718 157h2v1h-2zM94 158h1v1h-1zM719 158h1v1h-1zM93 159h1v1h-1zM720 159h1v1h-1zM92 160h1v1h-1zM721 160h1v1h-1zM91 161h1v1h-1zM722 161h1v1h-1zM90 162h2v1h-2zM722 162h2v1h-2zM90 163h1v1h-1zM723 163h1v1h-1zM89 164h1v1h-1zM724 164h1v1h-1zM88 165h1v1h-1zM725 165h1v1h-1zM87 166h2v1h-2zM725 166h2v1h-2zM87 167h1v1h-1zM726 167h1v1h-1zM86 168h1v1h-1zM727 168h1v1h-1zM85 169h1v1h-1zM728 169h1v1h-1zM84 170h2v1h-2zM728 170h2v1h-2zM84 171h1v1h-1zM729 171h1v1h-1zM83 172h1v1h-1zM730 172h1v1h-1zM82 173h1v1h-1zM731 173h1v1h-1zM82 174h1v1h-1zM731 174h1v1h-1zM81 175h1v1h-1zM732 175h1v1h-1zM80 176h1v1h-1zM733 176h1v1h-1zM79 177h2v1h-2zM733 177h2v1h-2zM79 178h1v1h-1zM734 178h1v1h-1zM78 179h1v1h-1zM735 179h1v1h-1zM77 180h2v1h-2zM735 180h2v1h-2zM77 181h1v1h-1zM736 181h1v1h-1zM76 182h1v1h-1zM737 182h1v1h-1zM75 183h1v1h-1zM738 183h1v1h-1zM75 184h1v1h-1zM738 184h1v1h-1zM74 185h1v1h-1zM739 185h1v1h-1zM73 186h1v1h-1zM740 186h1v1h-1zM73 187h1v1h-1zM740 187h1v1h-1zM72 188h1v1h-1zM741 188h1v1h-1zM71 189h1v1h-1zM742 189h1v1h-1zM71 190h1v1h-1zM742 190h1v1h-1zM70 191h1v1h-1zM743 191h1v1h-1zM69 192h2v1h-2zM743 192h2v1h-2zM69 193h1v1h-1zM744 193h1v1h-1zM68 194h1v1h-1zM745 194h1v1h-1zM67 195h2v1h-2zM745 195h2v1h-2zM67 196h1v1h-1zM746 196h1v1h-1zM66 197h1v1h-1zM747 197h1v1h-1zM66 198h1v1h-1zM747 198h1v1h-1zM65 199h1v1h-1zM748 199h1v1h-1zM64 200h2v1h-2zM748 200h2v1h-2zM64 201h1v1h-1zM749 201h1v1h-1zM63 202h1v1h-1zM750 202h1v1h-1zM63 203h1v1h-1zM750 203h1v1h-1zM62 204h1v1h-1zM751 204h1v1h-1zM61 205h2v1h-2zM751 205h2v1h-2zM61 206h1v1h-1zM752 206h1v1h-1zM60 207h1v1h-1zM753 207h1v1h-1zM60 208h1v1h-1zM753 208h1v1h-1zM59 209h1v1h-1zM754 209h1v1h-1zM59 210h1v1h-1zM754 210h1v1h-1zM58 211h1v1h-1zM755 211h1v1h-1zM57 212h2v1h-2zM755 212h2v1h-2zM57 213h1v1h-1zM756 213h1v1h-1zM56 214h2v1h-2zM756 214h2v1h-2zM56 215h1v1h-1zM757 215h1v1h-1zM55 216h1v1h-1zM758 216h1v1h-1zM55 217h1v1h-1zM758 217h1v1h-1zM54 218h1v1h-1zM759 218h1v1h-1zM54 219h1v1h-1zM759 219h1v1h-1zM53 220h1v1h-1zM760 220h1v1h-1zM53 221h1v1h-1zM760 221h1v1h-1zM52 222h1v1h-1zM761 222h1v1h-1zM52 223h1v1h-1zM761 223h1v1h-1zM51 224h1v1h-1zM762 224h1v1h-1zM51 225h1v1h-1zM762 225h1v1h-1zM50 226h1v1h-1zM763 226h1v1h-1zM50 227h1v1h-1zM763 227h1v1h-1zM49 228h1v1h-1zM764 228h1v1h-1zM49 229h1v1h-1zM764 229h1v1h-1zM48 230h1v1h-1zM765 230h1v1h-1zM48 231h1v1h-1zM765 231h1v1h-1zM47 232h1v1h-1zM766 232h1v1h-1zM47 233h1v1h-1zM766 233h1v1h-1zM46 234h1v1h-1zM767 234h1v1h-1zM46 235h1v1h-1zM767 235h1v1h-1zM45 236h1v1h-1zM768 236h1v1h-1zM45 237h1v1h-1zM768 237h1v1h-1zM44 238h1v1h-1zM769 238h1v1h-1zM44 239h1v1h-1zM769 239h1v1h-1zM43 240h1v1h-1zM770 240h1v1h-1zM43 241h1v1h-1zM770 241h1v1h-1zM42 242h1v1h-1zM771 242h1v1h-1zM42 243h1v1h-1zM771 243h1v1h-1zM41 244h2v1h-2zM771 244h2v1h-2zM41 245h1v1h-1zM772 245h1v1h-1zM41 246h1v1h-1zM772 246h1v1h-1zM40 247h1v1h-1zM773 247h1v1h-1zM40 248h1v1h-1zM773 248h1v1h-1zM39 249h1v1h-1zM774 249h1v1h-1zM39 250h1v1h-1zM774 250h1v1h-1zM38 251h2v1h-2zM774 251h2v1h-2zM38 252h1v1h-1zM775 252h1v1h-1zM38 253h1v1h-1zM775 253h1v1h-1zM37 254h1v1h-1zM776 254h1v1h-1zM37 255h1v1h-1zM776 255h1v1h-1zM36 256h1v1h-1zM777 256h1v1h-1zM36 257h1v1h-1zM777 257h1v1h-1zM36 258h1v1h-1zM777 258h1v1h-1zM35 259h1v1h-1zM778 259h1v1h-1zM35 260h1v1h-1zM778 260h1v1h-1zM34 261h1v1h-1zM779 261h1v1h-1zM34 262h1v1h-1zM779 262h1v1h-1zM34 263h1v1h-1zM779 263h1v1h-1zM33 264h1v1h-1zM780 264h1v1h-1zM33 265h1v1h-1zM780 265h1v1h-1zM32 266h2v1h-2zM780 266h2v1h-2zM32 267h1v1h-1zM781 267h1v1h-1zM32 268h1v1h-1zM781 268h1v1h-1zM31 269h1v1h-1zM782 269h1v1h-1zM31 270h1v1h-1zM782 270h1v1h-1zM31 271h1v1h-1zM782 271h1v1h-1zM30 272h1v1h-1zM783 272h1v1h-1zM30 273h1v1h-1zM783 273h1v1h-1zM30 274h1v1h-1zM783 274h1v1h-1zM29 275h1v1h-1zM784 275h1v1h-1zM29 276h1v1h-1zM784 276h1v1h-1zM29 277h1v1h-1zM784 277h1v1h-1zM28 278h1v1h-1zM785 278h1v1h-1zM28 279h1v1h-1zM785 279h1v1h-1zM28 280h1v1h-1zM785 280h1v1h-1zM27 281h1v1h-1zM786 281h1v1h-1zM27 282h1v1h-1zM786 282h1v1h-1zM27 283h1v1h-1zM786 283h1v1h-1zM26 284h1v1h-1zM787 284h1v1h-1zM26 285h1v1h-1zM787 285h1v1h-1zM26 286h1v1h-1zM787 286h1v1h-1zM25 287h1v1h-1zM788 287h1v1h-1zM25 288h1v1h-1zM788 288h1v1h-1zM25 289h1v1h-1zM788 289h1v1h-1zM24 290h1v1h-1zM789 290h1v1h-1zM24 291h1v1h-1zM789 291h1v1h-1zM24 292h1v1h-1zM789 292h1v1h-1zM23 293h1v1h-1zM790 293h1v1h-1zM23 294h1v1h-1zM790 294h1v1h-1zM23 295h1v1h-1zM790 295h1v1h-1zM23 296h1v1h-1zM790 296h1v1h-1zM22 297h1v1h-1zM791 297h1v1h-1zM22 298h1v1h-1zM791 298h1v1h-1zM22 299h1v1h-1zM791 299h1v1h-1zM21 300h1v1h-1zM792 300h1v1h-1zM21 301h1v1h-1zM792 301h1v1h-1zM21 302h1v1h-1zM792 302h1v1h-1zM21 303h1v1h-1zM792 303h1v1h-1zM20 304h1v1h-1zM793 304h1v1h-1zM20 305h1v1h-1zM793 305h1v1h-1zM20 306h1v1h-1zM793 306h1v1h-1zM20 307h1v1h-1zM793 307h1v1h-1zM19 308h1v1h-1zM794 308h1v1h-1zM19 309h1v1h-1zM794 309h1v1h-1zM19 310h1v1h-1zM794 310h1v1h-1zM19 311h1v1h-1zM794 311h1v1h-1zM18 312h1v1h-1zM795 312h1v1h-1zM18 313h1v1h-1zM795 313h1v1h-1zM18 314h1v1h-1zM795 314h1v1h-1zM18 315h1v1h-1zM795 315h1v1h-1zM17 316h1v1h-1zM796 316h1v1h-1zM17 317h1v1h-1zM796 317h1v1h-1zM17 318h1v1h-1zM796 318h1v1h-1zM17 319h1v1h-1zM796 319h1v1h-1zM16 320h1v1h-1zM797 320h1v1h-1zM16 321h1v1h-1zM797 321h1v1h-1zM16 322h1v1h-1zM797 322h1v1h-1zM16 323h1v1h-1zM797 323h1v1h-1zM16 324h1v1h-1zM797 324h1v1h-1zM15 325h1v1h-1zM798 325h1v1h-1zM15 326h1v1h-1zM798 326h1v1h-1zM15 327h1v1h-1zM798 327h1v1h-1zM15 328h1v1h-1zM798 328h1v1h-1zM15 329h1v1h-1zM798 329h1v1h-1zM14 330h1v1h-1zM799 330h1v1h-1zM14 331h1v1h-1zM799 331h1v1h-1zM14 332h1v1h-1zM799 332h1v1h-1zM14 333h1v1h-1zM799 333h1v1h-1zM14 334h1v1h-1zM799 334h1v1h-1zM13 335h1v1h-1zM800 335h1v1h-1zM13 336h1v1h-1zM800 336h1v1h-1zM13 337h1v1h-1zM800 337h1v1h-1zM13 338h1v1h-1zM800 338h1v1h-1zM13 339h1v1h-1zM800 339h1v1h-1zM13 340h1v1h-1zM800 340h1v1h-1zM12 341h1v1h-1zM801 341h1v1h-1zM12 342h1v1h-1zM801 342h1v1h-1zM12 343h1v1h-1zM801 343h1v1h-1zM12 344h1v1h-1zM801 344h1v1h-1zM12 345h1v1h-1zM801 345h1v1h-1zM12 346h1v1h-1zM801 346h1v1h-1zM11 347h1v1h-1zM802 347h1v1h-1zM11 348h1v1h-1zM802 348h1v1h-1zM11 349h1v1h-1zM802 349h1v1h-1zM11 350h1v1h-1zM802 350h1v1h-1zM11 351h1v1h-1zM802 351h1v1h-1zM11 352h1v1h-1zM802 352h1v1h-1zM11 353h1v1h-1zM802 353h1v1h-1zM10 354h1v1h-1zM803 354h1v1h-1zM10 355h1v1h-1zM803 355h1v1h-1zM10 356h1v1h-1zM803 356h1v1h-1zM10 357h1v1h-1zM803 357h1v1h-1zM10 358h1v1h-1zM803 358h1v1h-1zM10 359h1v1h-1zM803 359h1v1h-1zM10 360h1v1h-1zM803 360h1v1h-1zM10 361h1v1h-1zM803 361h1v1h-1zM9 362h1v1h-1zM804 362h1v1h-1zM9 363h1v1h-1zM804 363h1v1h-1zM9 364h1v1h-1zM804 364h1v1h-1zM9 365h1v1h-1zM804 365h1v1h-1zM9 366h1v1h-1zM804 366h1v1h-1zM9 367h1v1h-1zM804 367h1v1h-1zM9 368h1v1h-1zM804 368h1v1h-1zM9 369h1v1h-1zM804 369h1v1h-1zM9 370h1v1h-1zM804 370h1v1h-1zM9 371h1v1h-1zM804 371h1v1h-1zM8 372h1v1h-1zM805 372h1v1h-1zM8 373h1v1h-1zM805 373h1v1h-1zM8 374h1v1h-1zM805 374h1v1h-1zM8 375h1v1h-1zM805 375h1v1h-1zM8 376h1v1h-1zM805 376h1v1h-1zM8 377h1v1h-1zM805 377h1v1h-1zM8 378h1v1h-1zM805 378h1v1h-1zM8 379h1v1h-1zM805 379h1v1h-1zM8 380h1v1h-1zM805 380h1v1h-1zM8 381h1v1h-1zM805 381h1v1h-1zM8 382h1v1h-1zM805 382h1v1h-1zM8 383h1v1h-1zM805 383h1v1h-1zM8 384h1v1h-1zM805 384h1v1h-1zM8 385h1v1h-1zM805 385h1v1h-1zM8 386h1v1h-1zM805 386h1v1h-1zM7 387h1v1h-1zM7 388h1v1h-1zM7 389h1v1h-1zM7 390h1v1h-1zM7 391h1v1h-1zM7 392h1v1h-1zM7 393h1v1h-1zM7 394h1v1h-1zM7 395h1v1h-1zM7 396h1v1h-1zM7 397h1v1h-1zM7 398h1v1h-1zM7 399h1v1h-1zM7 400h1v1h-1zM7 401h1v1h-1zM7 402h1v1h-1zM7 403h1v1h-1zM7 404h1v1h-1zM7 405h1v1h-1zM7 406h1v1h-1zM7 407h1v1h-1zM7 408h1v1h-1zM7 409h1v1h-1zM7 410h1v1h-1zM7 411h1v1h-1zM7 412h1v1h-1zM7 413h1v1h-1zM7 414h1v1h-1zM7 415h1v1h-1zM7 416h1v1h-1zM7 417h1v1h-1zM7 418h1v1h-1zM7 419h1v1h-1zM7 420h1v1h-1zM7 421h1v1h-1zM7 422h1v1h-1zM7 423h1v1h-1zM7 424h1v1h-1zM7 425h1v1h-1zM7 426h1v1h-1zM8 427h1v1h-1zM805 427h1v1h-1zM8 428h1v1h-1zM805 428h1v1h-1zM8 429h1v1h-1zM805 429h1v1h-1zM8 430h1v1h-1zM805 430h1v1h-1zM8 431h1v1h-1zM805 431h1v1h-1zM8 432h1v1h-1zM805 432h1v1h-1zM8 433h1v1h-1zM805 433h1v1h-1zM8 434h1v1h-1zM805 434h1v1h-1zM8 435h1v1h-1zM805 435h1v1h-1zM8 436h1v1h-1zM805 436h1v1h-1zM8 437h1v1h-1zM805 437h1v1h-1zM8 438h1v1h-1zM805 438h1v1h-1zM8 439h1v1h-1zM805 439h1v1h-1zM8 440h1v1h-1zM805 440h1v1h-1zM8 441h1v1h-1zM805 441h1v1h-1zM9 442h1v1h-1zM804 442h1v1h-1zM9 443h1v1h-1zM804 443h1v1h-1zM9 444h1v1h-1zM804 444h1v1h-1zM9 445h1v1h-1zM804 445h1v1h-1zM9 446h1v1h-1zM804 446h1v1h-1zM9 447h1v1h-1zM804 447h1v1h-1zM9 448h1v1h-1zM804 448h1v1h-1zM9 449h1v1h-1zM804 449h1v1h-1zM9 450h1v1h-1zM804 450h1v1h-1zM9 451h1v1h-1zM804 451h1v1h-1zM10 452h1v1h-1zM803 452h1v1h-1zM10 453h1v1h-1zM803 453h1v1h-1zM10 454h1v1h-1zM803 454h1v1h-1zM10 455h1v1h-1zM803 455h1v1h-1zM10 456h1v1h-1zM803 456h1v1h-1zM10 457h1v1h-1zM803 457h1v1h-1zM10 458h1v1h-1zM803 458h1v1h-1zM10 459h1v1h-1zM803 459h1v1h-1zM11 460h1v1h-1zM802 460h1v1h-1zM11 461h1v1h-1zM802 461h1v1h-1zM11 462h1v1h-1zM802 462h1v1h-1zM11 463h1v1h-1zM802 463h1v1h-1zM11 464h1v1h-1zM802 464h1v1h-1zM11 465h1v1h-1zM802 465h1v1h-1zM11 466h1v1h-1zM802 466h1v1h-1zM12 467h1v1h-1zM801 467h1v1h-1zM12 468h1v1h-1zM801 468h1v1h-1zM12 469h1v1h-1zM801 469h1v1h-1zM12 470h1v1h-1zM801 470h1v1h-1zM12 471h1v1h-1zM801 471h1v1h-1zM12 472h1v1h-1zM801 472h1v1h-1zM13 473h1v1h-1zM800 473h1v1h-1zM13 474h1v1h-1zM800 474h1v1h-1zM13 475h1v1h-1zM800 475h1v1h-1zM13 476h1v1h-1zM800 476h1v1h-1zM13 477h1v1h-1zM800 477h1v1h-1zM13 478h1v1h-1zM800 478h1v1h-1zM14 479h1v1h-1zM799 479h1v1h-1zM14 480h1v1h-1zM799 480h1v1h-1zM14 481h1v1h-1zM799 481h1v1h-1zM14 482h1v1h-1zM799 482h1v1h-1zM14 483h1v1h-1zM799 483h1v1h-1zM15 484h1v1h-1zM798 484h1v1h-1zM15 485h1v1h-1zM798 485h1v1h-1zM15 486h1v1h-1zM798 486h1v1h-1zM15 487h1v1h-1zM798 487h1v1h-1zM15 488h1v1h-1zM798 488h1v1h-1zM16 489h1v1h-1zM797 489h1v1h-1zM16 490h1v1h-1zM797 490h1v1h-1zM16 491h1v1h-1zM797 491h1v1h-1zM16 492h1v1h-1zM797 492h1v1h-1zM16 493h1v1h-1zM797 493h1v1h-1zM17 494h1v1h-1zM796 494h1v1h-1zM17 495h1v1h-1zM796 495h1v1h-1zM17 496h1v1h-1zM796 496h1v1h-1zM17 497h1v1h-1zM796 497h1v1h-1zM18 498h1v1h-1zM795 498h1v1h-1zM18 499h1v1h-1zM795 499h1v1h-1zM18 500h1v1h-1zM795 500h1v1h-1zM18 501h1v1h-1zM795 501h1v1h-1zM19 502h1v1h-1zM794 502h1v1h-1zM19 503h1v1h-1zM794 503h1v1h-1zM19 504h1v1h-1zM794 504h1v1h-1zM19 505h1v1h-1zM794 505h1v1h-1zM20 506h1v1h-1zM793 506h1v1h-1zM20 507h1v1h-1zM793 507h1v1h-1zM20 508h1v1h-1zM793 508h1v1h-1zM20 509h1v1h-1zM793 509h1v1h-1zM21 510h1v1h-1zM792 510h1v1h-1zM21 511h1v1h-1zM792 511h1v1h-1zM21 512h1v1h-1zM792 512h1v1h-1zM21 513h1v1h-1zM792 513h1v1h-1zM22 514h1v1h-1zM791 514h1v1h-1zM22 515h1v1h-1zM791 515h1v1h-1zM22 516h1v1h-1zM791 516h1v1h-1zM23 517h1v1h-1zM790 517h1v1h-1zM23 518h1v1h-1zM790 518h1v1h-1zM23 519h1v1h-1zM790 519h1v1h-1zM23 520h1v1h-1zM790 520h1v1h-1zM24 521h1v1h-1zM789 521h1v1h-1zM24 522h1v1h-1zM789 522h1v1h-1zM24 523h1v1h-1zM789 523h1v1h-1zM25 524h1v1h-1zM788 524h1v1h-1zM25 525h1v1h-1zM788 525h1v1h-1zM25 526h1v1h-1zM788 526h1v1h-1zM26 527h1v1h-1zM787 527h1v1h-1zM26 528h1v1h-1zM787 528h1v1h-1zM26 529h1v1h-1zM787 529h1v1h-1zM27 530h1v1h-1zM786 530h1v1h-1zM27 531h1v1h-1zM786 531h1v1h-1zM27 532h1v1h-1zM786 532h1v1h-1zM28 533h1v1h-1zM785 533h1v1h-1zM28 534h1v1h-1zM785 534h1v1h-1zM28 535h1v1h-1zM785 535h1v1h-1zM29 536h1v1h-1zM784 536h1v1h-1zM29 537h1v1h-1zM784 537h1v1h-1zM29 538h1v1h-1zM784 538h1v1h-1zM30 539h1v1h-1zM783 539h1v1h-1zM30 540h1v1h-1zM783 540h1v1h-1zM30 541h1v1h-1zM783 541h1v1h-1zM31 542h1v1h-1zM782 542h1v1h-1zM31 543h1v1h-1zM782 543h1v1h-1zM31 544h1v1h-1zM782 544h1v1h-1zM32 545h1v1h-1zM781 545h1v1h-1zM32 546h1v1h-1zM781 546h1v1h-1zM32 547h2v1h-2zM780 547h2v1h-2zM33 548h1v1h-1zM780 548h1v1h-1zM33 549h1v1h-1zM780 549h1v1h-1zM34 550h1v1h-1zM779 550h1v1h-1zM34 551h1v1h-1zM779 551h1v1h-1zM34 552h1v1h-1zM779 552h1v1h-1zM35 553h1v1h-1zM778 553h1v1h-1zM35 554h1v1h-1zM778 554h1v1h-1zM36 555h1v1h-1zM777 555h1v1h-1zM36 556h1v1h-1zM777 556h1v1h-1zM36 557h1v1h-1zM777 557h1v1h-1zM37 558h1v1h-1zM776 558h1v1h-1zM37 559h1v1h-1zM776 559h1v1h-1zM38 560h1v1h-1zM775 560h1v1h-1zM38 561h1v1h-1zM775 561h1v1h-1zM38 562h2v1h-2zM774 562h2v1h-2zM39 563h1v1h-1zM774 563h1v1h-1zM39 564h1v1h-1zM774 564h1v1h-1zM40 565h1v1h-1zM773 565h1v1h-1zM40 566h1v1h-1zM773 566h1v1h-1zM41 567h1v1h-1zM772 567h1v1h-1zM41 568h1v1h-1zM772 568h1v1h-1zM41 569h2v1h-2zM771 569h2v1h-2zM42 570h1v1h-1zM771 570h1v1h-1zM42 571h1v1h-1zM771 571h1v1h-1zM43 572h1v1h-1zM770 572h1v1h-1zM43 573h1v1h-1zM770 573h1v1h-1zM44 574h1v1h-1zM769 574h1v1h-1zM44 575h1v1h-1zM769 575h1v1h-1zM45 576h1v1h-1zM768 576h1v1h-1zM45 577h1v1h-1zM768 577h1v1h-1zM46 578h1v1h-1zM767 578h1v1h-1zM46 579h1v1h-1zM767 579h1v1h-1zM47 580h1v1h-1zM766 580h1v1h-1zM47 581h1v1h-1zM766 581h1v1h-1zM48 582h1v1h-1zM765 582h1v1h-1zM48 583h1v1h-1zM765 583h1v1h-1zM49 584h1v1h-1zM764 584h1v1h-1zM49 585h1v1h-1zM764 585h1v1h-1zM50 586h1v1h-1zM763 586h1v1h-1zM50 587h1v1h-1zM763 587h1v1h-1zM51 588h1v1h-1zM762 588h1v1h-1zM51 589h1v1h-1zM762 589h1v1h-1zM52 590h1v1h-1zM761 590h1v1h-1zM52 591h1v1h-1zM761 591h1v1h-1zM53 592h1v1h-1zM760 592h1v1h-1zM53 593h1v1h-1zM760 593h1v1h-1zM54 594h1v1h-1zM759 594h1v1h-1zM54 595h1v1h-1zM759 595h1v1h-1zM55 596h1v1h-1zM758 596h1v1h-1zM55 597h1v1h-1zM758 597h1v1h-1zM56 598h1v1h-1zM757 598h1v1h-1zM56 599h2v1h-2zM756 599h2v1h-2zM57 600h1v1h-1zM756 600h1v1h-1zM57 601h2v1h-2zM755 601h2v1h-2zM58 602h1v1h-1zM755 602h1v1h-1zM59 603h1v1h-1zM754 603h1v1h-1zM59 604h1v1h-1zM754 604h1v1h-1zM60 605h1v1h-1zM753 605h1v1h-1zM60 606h1v1h-1zM753 606h1v1h-1zM61 607h1v1h-1zM752 607h1v1h-1zM61 608h2v1h-2zM751 608h2v1h-2zM62 609h1v1h-1zM751 609h1v1h-1zM63 610h1v1h-1zM750 610h1v1h-1zM63 611h1v1h-1zM750 611h1v1h-1zM64 612h1v1h-1zM749 612h1v1h-1zM64 613h2v1h-2zM748 613h2v1h-2zM65 614h1v1h-1zM748 614h1v1h-1zM66 615h1v1h-1zM747 615h1v1h-1zM66 616h1v1h-1zM747 616h1v1h-1zM67 617h1v1h-1zM746 617h1v1h-1zM67 618h2v1h-2zM745 618h2v1h-2zM68 619h1v1h-1zM745 619h1v1h-1zM69 620h1v1h-1zM744 620h1v1h-1zM69 621h2v1h-2zM743 621h2v1h-2zM70 622h1v1h-1zM743 622h1v1h-1zM71 623h1v1h-1zM742 623h1v1h-1zM71 624h1v1h-1zM742 624h1v1h-1zM72 625h1v1h-1zM741 625h1v1h-1zM73 626h1v1h-1zM740 626h1v1h-1zM73 627h1v1h-1zM740 627h1v1h-1zM74 628h1v1h-1zM739 628h1v1h-1zM75 629h1v1h-1zM738 629h1v1h-1zM75 630h1v1h-1zM738 630h1v1h-1zM76 631h1v1h-1zM737 631h1v1h-1zM77 632h1v1h-1zM736 632h1v1h-1zM77 633h2v1h-2zM735 633h2v1h-2zM78 634h1v1h-1zM735 634h1v1h-1zM79 635h1v1h-1zM734 635h1v1h-1zM79 636h2v1h-2zM733 636h2v1h-2zM80 637h1v1h-1zM733 637h1v1h-1zM81 638h1v1h-1zM732 638h1v1h-1zM82 639h1v1h-1zM731 639h1v1h-1zM82 640h1v1h-1zM731 640h1v1h-1zM83 641h1v1h-1zM730 641h1v1h-1zM84 642h1v1h-1zM729 642h1v1h-1zM84 643h2v1h-2zM728 643h2v1h-2zM85 644h1v1h-1zM728 644h1v1h-1zM86 645h1v1h-1zM727 645h1v1h-1zM87 646h1v1h-1zM726 646h1v1h-1zM87 647h2v1h-2zM725 647h2v1h-2zM88 648h1v1h-1zM725 648h1v1h-1zM89 649h1v1h-1zM724 649h1v1h-1zM90 650h1v1h-1zM723 650h1v1h-1zM90 651h2v1h-2zM722 651h2v1h-2zM91 652h1v1h-1zM722 652h1v1h-1zM92 653h1v1h-1zM721 653h1v1h-1zM93 654h1v1h-1zM720 654h1v1h-1zM94 655h1v1h-1zM719 655h1v1h-1zM94 656h2v1h-2zM718 656h2v1h-2zM95 657h1v1h-1zM718 657h1v1h-1zM96 658h1v1h-1zM717 658h1v1h-1zM97 659h1v1h-1zM716 659h1v1h-1zM98 660h1v1h-1zM715 660h1v1h-1zM98 661h2v1h-2zM714 661h2v1h-2zM99 662h2v1h-2zM713 662h2v1h-2zM100 663h1v1h-1zM713 663h1v1h-1zM101 664h1v1h-1zM712 664h1v1h-1zM102 665h1v1h-1zM711 665h1v1h-1zM103 666h1v1h-1zM710 666h1v1h-1zM103 667h2v1h-2zM709 667h2v1h-2zM104 668h2v1h-2zM708 668h2v1h-2zM105 669h2v1h-2zM707 669h2v1h-2zM106 670h1v1h-1zM707 670h1v1h-1zM107 671h1v1h-1zM706 671h1v1h-1zM108 672h1v1h-1zM705 672h1v1h-1zM109 673h1v1h-1zM704 673h1v1h-1zM110 674h1v1h-1zM703 674h1v1h-1zM111 675h1v1h-1zM702 675h1v1h-1zM111 676h2v1h-2zM701 676h2v1h-2zM112 677h2v1h-2zM700 677h2v1h-2zM113 678h2v1h-2zM699 678h2v1h-2zM114 679h2v1h-2zM698 679h2v1h-2zM115 680h1v1h-1zM698 680h1v1h-1zM116 681h1v1h-1zM697 681h1v1h-1zM117 682h1v1h-1zM696 682h1v1h-1zM118 683h1v1h-1zM695 683h1v1h-1zM119 684h1v1h-1zM694 684h1v1h-1zM120 685h1v1h-1zM693 685h1v1h-1zM121 686h1v1h-1zM692 686h1v1h-1zM122 687h1v1h-1zM691 687h1v1h-1zM123 688h1v1h-1zM690 688h1v1h-1zM124 689h1v1h-1zM689 689h1v1h-1zM125 690h1v1h-1zM688 690h1v1h-1zM126 691h1v1h-1zM687 691h1v1h-1zM127 692h1v1h-1zM686 692h1v1h-1zM128 693h1v1h-1zM685 693h1v1h-1zM129 694h1v1h-1zM684 694h1v1h-1zM130 695h1v1h-1zM683 695h1v1h-1zM131 696h1v1h-1zM682 696h1v1h-1zM132 697h1v1h-1zM681 697h1v1h-1zM133 698h2v1h-2zM679 698h2v1h-2zM134 699h2v1h-2zM678 699h2v1h-2zM135 700h2v1h-2zM677 700h2v1h-2zM136 701h2v1h-2zM676 701h2v1h-2zM137 702h2v1h-2zM675 702h2v1h-2zM139 703h1v1h-1zM674 703h1v1h-1zM140 704h1v1h-1zM673 704h1v1h-1zM141 705h1v1h-1zM672 705h1v1h-1zM142 706h1v1h-1zM671 706h1v1h-1zM143 707h2v1h-2zM669 707h2v1h-2zM144 708h2v1h-2zM668 708h2v1h-2zM145 709h2v1h-2zM667 709h2v1h-2zM146 710h2v1h-2zM666 710h2v1h-2zM148 711h1v1h-1zM665 711h1v1h-1zM149 712h1v1h-1zM664 712h1v1h-1zM150 713h2v1h-2zM662 713h2v1h-2zM151 714h2v1h-2zM661 714h2v1h-2zM152 715h2v1h-2zM660 715h2v1h-2zM154 716h1v1h-1zM659 716h1v1h-1zM155 717h1v1h-1zM658 717h1v1h-1zM156 718h2v1h-2zM656 718h2v1h-2zM157 719h2v1h-2zM655 719h2v1h-2zM159 720h1v1h-1zM654 720h1v1h-1zM160 721h1v1h-1zM653 721h1v1h-1zM161 722h2v1h-2zM651 722h2v1h-2zM162 723h2v1h-2zM650 723h2v1h-2zM164 724h1v1h-1zM649 724h1v1h-1zM165 725h2v1h-2zM647 725h2v1h-2zM166 726h2v1h-2zM646 726h2v1h-2zM168 727h1v1h-1zM645 727h1v1h-1zM169 728h2v1h-2zM643 728h2v1h-2zM170 729h2v1h-2zM642 729h2v1h-2zM172 730h1v1h-1zM641 730h1v1h-1zM173 731h2v1h-2zM639 731h2v1h-2zM175 732h1v1h-1zM638 732h1v1h-1zM176 733h2v1h-2zM636 733h2v1h-2zM177 734h2v1h-2zM635 734h2v1h-2zM179 735h2v1h-2zM633 735h2v1h-2zM180 736h2v1h-2zM632 736h2v1h-2zM182 737h1v1h-1zM631 737h1v1h-1zM183 738h2v1h-2zM629 738h2v1h-2zM185 739h1v1h-1zM628 739h1v1h-1zM186 740h2v1h-2zM626 740h2v1h-2zM188 741h1v1h-1zM625 741h1v1h-1zM189 742h2v1h-2zM623 742h2v1h-2zM191 743h2v1h-2zM621 743h2v1h-2zM192 744h2v1h-2zM620 744h2v1h-2zM194 745h2v1h-2zM618 745h2v1h-2zM195 746h2v1h-2zM617 746h2v1h-2zM197 747h2v1h-2zM615 747h2v1h-2zM199 748h2v1h-2zM613 748h2v1h-2zM200 749h2v1h-2zM612 749h2v1h-2zM202 750h2v1h-2zM610 750h2v1h-2zM204 751h2v1h-2zM608 751h2v1h-2zM205 752h2v1h-2zM607 752h2v1h-2zM207 753h2v1h-2zM605 753h2v1h-2zM209 754h2v1h-2zM603 754h2v1h-2zM211 755h2v1h-2zM601 755h2v1h-2zM212 756h3v1h-3zM599 756h3v1h-3zM214 757h2v1h-2zM598 757h2v1h-2zM216 758h2v1h-2zM596 758h2v1h-2zM218 759h2v1h-2zM594 759h2v1h-2zM220 760h2v1h-2zM592 760h2v1h-2zM222 761h2v1h-2zM590 761h2v1h-2zM224 762h2v1h-2zM588 762h2v1h-2zM226 763h2v1h-2zM586 763h2v1h-2zM228 764h2v1h-2zM584 764h2v1h-2zM230 765h2v1h-2zM582 765h2v1h-2zM232 766h2v1h-2zM580 766h2v1h-2zM234 767h2v1h-2zM578 767h2v1h-2zM236 768h2v1h-2zM576 768h2v1h-2zM238 769h2v1h-2zM574 769h2v1h-2zM240 770h2v1h-2zM572 770h2v1h-2zM242 771h3v1h-3zM569 771h3v1h-3zM244 772h3v1h-3zM567 772h3v1h-3zM247 773h2v1h-2zM565 773h2v1h-2zM249 774h3v1h-3zM562 774h3v1h-3zM251 775h3v1h-3zM560 775h3v1h-3zM254 776h2v1h-2zM558 776h2v1h-2zM256 777h3v1h-3zM555 777h3v1h-3zM259 778h2v1h-2zM553 778h2v1h-2zM261 779h3v1h-3zM550 779h3v1h-3zM264 780h3v1h-3zM547 780h3v1h-3zM266 781h3v1h-3zM545 781h3v1h-3zM269 782h3v1h-3zM542 782h3v1h-3zM272 783h3v1h-3zM539 783h3v1h-3zM275 784h3v1h-3zM536 784h3v1h-3zM278 785h3v1h-3zM533 785h3v1h-3zM281 786h3v1h-3zM530 786h3v1h-3zM284 787h3v1h-3zM527 787h3v1h-3zM287 788h3v1h-3zM524 788h3v1h-3zM290 789h3v1h-3zM521 789h3v1h-3zM293 790h4v1h-4zM517 790h4v1h-4zM297 791h3v1h-3zM514 791h3v1h-3zM300 792h4v1h-4zM510 792h4v1h-4zM304 793h4v1h-4zM506 793h4v1h-4zM308 794h4v1h-4zM502 794h4v1h-4zM312 795h4v1h-4zM498 795h4v1h-4zM316 796h4v1h-4zM494 796h4v1h-4zM320 797h5v1h-5zM489 797h5v1h-5zM325 798h5v1h-5zM484 798h5v1h-5zM330 799h5v1h-5zM479 799h5v1h-5zM335 800h6v1h-6zM473 800h6v1h-6zM341 801h6v1h-6zM467 801h6v1h-6zM347 802h7v1h-7zM460 802h7v1h-7zM354 803h8v1h-8zM452 803h8v1h-8zM362 804h10v1h-10zM442 804h10v1h-10zM372 805h15v1h-15zM427 805h15v1h-15zM393 127h1v1h-1zM417 127h4v1h-4zM379 128h14v1h-14zM421 128h14v1h-14zM371 129h8v1h-8zM435 129h8v1h-8zM364 130h7v1h-7zM443 130h7v1h-7zM358 131h6v1h-6zM450 131h6v1h-6zM352 132h6v1h-6zM456 132h6v1h-6zM348 133h5v1h-5zM461 133h5v1h-5zM343 134h5v1h-5zM466 134h5v1h-5zM339 135h4v1h-4zM471 135h4v1h-4zM335 136h4v1h-4zM475 136h4v1h-4zM332 137h3v1h-3zM479 137h3v1h-3zM328 138h4v1h-4zM482 138h4v1h-4zM325 139h3v1h-3zM486 139h3v1h-3zM322 140h3v1h-3zM489 140h3v1h-3zM318 141h4v1h-4zM492 141h4v1h-4zM316 142h3v1h-3zM495 142h3v1h-3zM313 143h3v1h-3zM498 143h3v1h-3zM310 144h3v1h-3zM501 144h3v1h-3zM307 145h3v1h-3zM504 145h3v1h-3zM305 146h2v1h-2zM507 146h2v1h-2zM302 147h3v1h-3zM509 147h3v1h-3zM300 148h2v1h-2zM512 148h2v1h-2zM297 149h3v1h-3zM514 149h3v1h-3zM295 150h3v1h-3zM516 150h3v1h-3zM293 151h2v1h-2zM519 151h2v1h-2zM291 152h2v1h-2zM521 152h2v1h-2zM288 153h3v1h-3zM523 153h3v1h-3zM286 154h3v1h-3zM525 154h3v1h-3zM284 155h3v1h-3zM527 155h3v1h-3zM282 156h2v1h-2zM530 156h2v1h-2zM280 157h2v1h-2zM532 157h2v1h-2zM278 158h2v1h-2zM534 158h2v1h-2zM276 159h3v1h-3zM535 159h3v1h-3zM274 160h3v1h-3zM537 160h3v1h-3zM273 161h2v1h-2zM539 161h2v1h-2zM271 162h2v1h-2zM541 162h2v1h-2zM269 163h2v1h-2zM543 163h2v1h-2zM267 164h2v1h-2zM545 164h2v1h-2zM266 165h2v1h-2zM546 165h2v1h-2zM264 166h2v1h-2zM548 166h2v1h-2zM262 167h2v1h-2zM550 167h2v1h-2zM261 168h1v1h-1zM552 168h1v1h-1zM259 169h2v1h-2zM553 169h2v1h-2zM257 170h2v1h-2zM555 170h2v1h-2zM256 171h2v1h-2zM556 171h2v1h-2zM254 172h2v1h-2zM558 172h2v1h-2zM253 173h2v1h-2zM559 173h2v1h-2zM251 174h2v1h-2zM561 174h2v1h-2zM250 175h2v1h-2zM562 175h2v1h-2zM248 176h2v1h-2zM564 176h2v1h-2zM247 177h2v1h-2zM565 177h2v1h-2zM245 178h2v1h-2zM567 178h2v1h-2zM244 179h2v1h-2zM568 179h2v1h-2zM243 180h1v1h-1zM570 180h1v1h-1zM241 181h2v1h-2zM571 181h2v1h-2zM240 182h2v1h-2zM572 182h2v1h-2zM239 183h1v1h-1zM574 183h1v1h-1zM237 184h2v1h-2zM575 184h2v1h-2zM236 185h2v1h-2zM576 185h2v1h-2zM235 186h1v1h-1zM578 186h1v1h-1zM233 187h2v1h-2zM579 187h2v1h-2zM232 188h2v1h-2zM580 188h2v1h-2zM231 189h1v1h-1zM582 189h1v1h-1zM230 190h1v1h-1zM583 190h1v1h-1zM228 191h2v1h-2zM584 191h2v1h-2zM227 192h2v1h-2zM585 192h2v1h-2zM226 193h2v1h-2zM586 193h2v1h-2zM225 194h1v1h-1zM588 194h1v1h-1zM224 195h1v1h-1zM589 195h1v1h-1zM223 196h1v1h-1zM590 196h1v1h-1zM221 197h2v1h-2zM591 197h2v1h-2zM220 198h2v1h-2zM592 198h2v1h-2zM219 199h2v1h-2zM593 199h2v1h-2zM218 200h2v1h-2zM594 200h2v1h-2zM217 201h1v1h-1zM596 201h1v1h-1zM216 202h1v1h-1zM597 202h1v1h-1zM215 203h1v1h-1zM598 203h1v1h-1zM214 204h1v1h-1zM599 204h1v1h-1zM213 205h1v1h-1zM600 205h1v1h-1zM212 206h1v1h-1zM601 206h1v1h-1zM211 207h1v1h-1zM602 207h1v1h-1zM210 208h1v1h-1zM603 208h1v1h-1zM209 209h1v1h-1zM604 209h1v1h-1zM208 210h1v1h-1zM605 210h1v1h-1zM207 211h1v1h-1zM606 211h1v1h-1zM206 212h1v1h-1zM607 212h1v1h-1zM205 213h1v1h-1zM608 213h1v1h-1zM204 214h1v1h-1zM609 214h1v1h-1zM203 215h1v1h-1zM610 215h1v1h-1zM202 216h1v1h-1zM611 216h1v1h-1zM201 217h1v1h-1zM612 217h1v1h-1zM200 218h1v1h-1zM613 218h1v1h-1zM199 219h2v1h-2zM613 219h2v1h-2zM198 220h2v1h-2zM614 220h2v1h-2zM197 221h2v1h-2zM615 221h2v1h-2zM197 222h1v1h-1zM616 222h1v1h-1zM196 223h1v1h-1zM617 223h1v1h-1zM195 224h1v1h-1zM618 224h1v1h-1zM194 225h1v1h-1zM619 225h1v1h-1zM193 226h1v1h-1zM620 226h1v1h-1zM192 227h2v1h-2zM620 227h2v1h-2zM191 228h2v1h-2zM621 228h2v1h-2zM191 229h1v1h-1zM622 229h1v1h-1zM190 230h1v1h-1zM623 230h1v1h-1zM189 231h1v1h-1zM624 231h1v1h-1zM188 232h1v1h-1zM625 232h1v1h-1zM187 233h2v1h-2zM625 233h2v1h-2zM187 234h1v1h-1zM626 234h1v1h-1zM186 235h1v1h-1zM627 235h1v1h-1zM185 236h1v1h-1zM628 236h1v1h-1zM184 237h2v1h-2zM628 237h2v1h-2zM184 238h1v1h-1zM629 238h1v1h-1zM183 239h1v1h-1zM630 239h1v1h-1zM182 240h1v1h-1zM631 240h1v1h-1zM181 241h2v1h-2zM631 241h2v1h-2zM181 242h1v1h-1zM632 242h1v1h-1zM180 243h1v1h-1zM633 243h1v1h-1zM179 244h1v1h-1zM634 244h1v1h-1zM178 245h2v1h-2zM634 245h2v1h-2zM178 246h1v1h-1zM635 246h1v1h-1zM177 247h1v1h-1zM636 247h1v1h-1zM176 248h2v1h-2zM636 248h2v1h-2zM176 249h1v1h-1zM637 249h1v1h-1zM175 250h1v1h-1zM638 250h1v1h-1zM174 251h2v1h-2zM638 251h2v1h-2zM174 252h1v1h-1zM639 252h1v1h-1zM173 253h1v1h-1zM640 253h1v1h-1zM172 254h2v1h-2zM640 254h2v1h-2zM172 255h1v1h-1zM641 255h1v1h-1zM171 256h1v1h-1zM642 256h1v1h-1zM170 257h2v1h-2zM642 257h2v1h-2zM170 258h1v1h-1zM643 258h1v1h-1zM169 259h1v1h-1zM644 259h1v1h-1zM169 260h1v1h-1zM644 260h1v1h-1zM168 261h1v1h-1zM645 261h1v1h-1zM167 262h1v1h-1zM646 262h1v1h-1zM167 263h1v1h-1zM646 263h1v1h-1zM166 264h1v1h-1zM647 264h1v1h-1zM166 265h1v1h-1zM647 265h1v1h-1zM165 266h1v1h-1zM648 266h1v1h-1zM164 267h2v1h-2zM648 267h2v1h-2zM164 268h1v1h-1zM649 268h1v1h-1zM163 269h1v1h-1zM650 269h1v1h-1zM163 270h1v1h-1zM650 270h1v1h-1zM162 271h1v1h-1zM651 271h1v1h-1zM162 272h1v1h-1zM651 272h1v1h-1zM161 273h1v1h-1zM652 273h1v1h-1zM160 274h2v1h-2zM652 274h2v1h-2zM160 275h1v1h-1zM653 275h1v1h-1zM159 276h2v1h-2zM653 276h2v1h-2zM159 277h1v1h-1zM654 277h1v1h-1zM158 278h2v1h-2zM654 278h2v1h-2zM158 279h1v1h-1zM655 279h1v1h-1zM157 280h1v1h-1zM656 280h1v1h-1zM157 281h1v1h-1zM656 281h1v1h-1zM156 282h1v1h-1zM657 282h1v1h-1zM156 283h1v1h-1zM657 283h1v1h-1zM155 284h1v1h-1zM658 284h1v1h-1zM155 285h1v1h-1zM658 285h1v1h-1zM154 286h2v1h-2zM658 286h2v1h-2zM154 287h1v1h-1zM659 287h1v1h-1zM153 288h2v1h-2zM659 288h2v1h-2zM153 289h1v1h-1zM660 289h1v1h-1zM153 290h1v1h-1zM660 290h1v1h-1zM152 291h1v1h-1zM661 291h1v1h-1zM152 292h1v1h-1zM661 292h1v1h-1zM151 293h1v1h-1zM662 293h1v1h-1zM151 294h1v1h-1zM662 294h1v1h-1zM150 295h1v1h-1zM663 295h1v1h-1zM150 296h1v1h-1zM663 296h1v1h-1zM149 297h2v1h-2zM663 297h2v1h-2zM149 298h1v1h-1zM664 298h1v1h-1zM149 299h1v1h-1zM664 299h1v1h-1zM148 300h1v1h-1zM665 300h1v1h-1zM148 301h1v1h-1zM665 301h1v1h-1zM147 302h1v1h-1zM666 302h1v1h-1zM147 303h1v1h-1zM666 303h1v1h-1zM147 304h1v1h-1zM666 304h1v1h-1zM146 305h1v1h-1zM667 305h1v1h-1zM146 306h1v1h-1zM667 306h1v1h-1zM145 307h1v1h-1zM668 307h1v1h-1zM145 308h1v1h-1zM668 308h1v1h-1zM145 309h1v1h-1zM668 309h1v1h-1zM144 310h1v1h-1zM669 310h1v1h-1zM144 311h1v1h-1zM669 311h1v1h-1zM144 312h1v1h-1zM669 312h1v1h-1zM143 313h1v1h-1zM670 313h1v1h-1zM143 314h1v1h-1zM670 314h1v1h-1zM143 315h1v1h-1zM670 315h1v1h-1zM142 316h1v1h-1zM671 316h1v1h-1zM142 317h1v1h-1zM671 317h1v1h-1zM141 318h2v1h-2zM671 318h2v1h-2zM141 319h1v1h-1zM672 319h1v1h-1zM141 320h1v1h-1zM672 320h1v1h-1zM141 321h1v1h-1zM672 321h1v1h-1zM140 322h1v1h-1zM673 322h1v1h-1zM140 323h1v1h-1zM673 323h1v1h-1zM140 324h1v1h-1zM673 324h1v1h-1zM139 325h1v1h-1zM674 325h1v1h-1zM139 326h1v1h-1zM674 326h1v1h-1zM139 327h1v1h-1zM674 327h1v1h-1zM138 328h1v1h-1zM675 328h1v1h-1zM138 329h1v1h-1zM675 329h1v1h-1zM138 330h1v1h-1zM675 330h1v1h-1zM138 331h1v1h-1zM675 331h1v1h-1zM137 332h1v1h-1zM676 332h1v1h-1zM137 333h1v1h-1zM676 333h1v1h-1zM137 334h1v1h-1zM676 334h1v1h-1zM136 335h1v1h-1zM677 335h1v1h-1zM136 336h1v1h-1zM677 336h1v1h-1zM136 337h1v1h-1zM677 337h1v1h-1zM136 338h1v1h-1zM677 338h1v1h-1zM135 339h1v1h-1zM678 339h1v1h-1zM135 340h1v1h-1zM678 340h1v1h-1zM135 341h1v1h-1zM678 341h1v1h-1zM135 342h1v1h-1zM678 342h1v1h-1zM134 343h1v1h-1zM679 343h1v1h-1zM134 344h1v1h-1zM679 344h1v1h-1zM134 345h1v1h-1zM679 345h1v1h-1zM134 346h1v1h-1zM679 346h1v1h-1zM134 347h1v1h-1zM679 347h1v1h-1zM133 348h1v1h-1zM680 348h1v1h-1zM133 349h1v1h-1zM680 349h1v1h-1zM133 350h1v1h-1zM680 350h1v1h-1zM133 351h1v1h-1zM680 351h1v1h-1zM132 352h2v1h-2zM680 352h2v1h-2zM132 353h1v1h-1zM681 353h1v1h-1zM132 354h1v1h-1zM681 354h1v1h-1zM132 355h1v1h-1zM681 355h1v1h-1zM132 356h1v1h-1zM681 356h1v1h-1zM132 357h1v1h-1zM681 357h1v1h-1zM131 358h1v1h-1zM682 358h1v1h-1zM131 359h1v1h-1zM682 359h1v1h-1zM131 360h1v1h-1zM682 360h1v1h-1zM131 361h1v1h-1zM682 361h1v1h-1zM131 362h1v1h-1zM682 362h1v1h-1zM131 363h1v1h-1zM682 363h1v1h-1zM130 364h1v1h-1zM683 364h1v1h-1zM130 365h1v1h-1zM683 365h1v1h-1zM130 366h1v1h-1zM683 366h1v1h-1zM130 367h1v1h-1zM683 367h1v1h-1zM130 368h1v1h-1zM683 368h1v1h-1zM130 369h1v1h-1zM683 369h1v1h-1zM130 370h1v1h-1zM683 370h1v1h-1zM129 371h1v1h-1zM684 371h1v1h-1zM129 372h1v1h-1zM684 372h1v1h-1zM129 373h1v1h-1zM684 373h1v1h-1zM129 374h1v1h-1zM684 374h1v1h-1zM129 375h1v1h-1zM684 375h1v1h-1zM129 376h1v1h-1zM684 376h1v1h-1zM129 377h1v1h-1zM684 377h1v1h-1zM129 378h1v1h-1zM684 378h1v1h-1zM128 379h1v1h-1zM685 379h1v1h-1zM128 380h1v1h-1zM685 380h1v1h-1zM128 381h1v1h-1zM685 381h1v1h-1zM128 382h1v1h-1zM685 382h1v1h-1zM128 383h1v1h-1zM685 383h1v1h-1zM128 384h1v1h-1zM685 384h1v1h-1zM128 385h1v1h-1zM685 385h1v1h-1zM128 386h1v1h-1zM685 386h1v1h-1zM128 387h1v1h-1zM685 387h1v1h-1zM128 388h1v1h-1zM685 388h1v1h-1zM128 389h1v1h-1zM685 389h1v1h-1zM128 390h1v1h-1zM685 390h1v1h-1zM128 391h1v1h-1zM685 391h1v1h-1zM128 392h1v1h-1zM685 392h1v1h-1zM127 393h1v1h-1zM686 393h1v1h-1zM127 394h1v1h-1zM686 394h1v1h-1zM127 395h1v1h-1zM686 395h1v1h-1zM127 396h1v1h-1zM686 396h1v1h-1zM127 397h1v1h-1zM686 397h1v1h-1zM127 398h1v1h-1zM686 398h1v1h-1zM127 399h1v1h-1zM686 399h1v1h-1zM127 400h1v1h-1zM686 400h1v1h-1zM127 401h1v1h-1zM686 401h1v1h-1zM127 402h1v1h-1zM686 402h1v1h-1zM127 403h1v1h-1zM686 403h1v1h-1zM127 404h1v1h-1zM686 404h1v1h-1zM127 405h1v1h-1zM686 405h1v1h-1zM127 406h1v1h-1zM686 406h1v1h-1zM127 407h1v1h-1zM686 407h1v1h-1zM127 408h1v1h-1zM686 408h1v1h-1zM127 409h1v1h-1zM686 409h1v1h-1zM127 410h1v1h-1zM686 410h1v1h-1zM127 411h1v1h-1zM686 411h1v1h-1zM127 412h1v1h-1zM686 412h1v1h-1zM127 413h1v1h-1zM686 413h1v1h-1zM127 414h1v1h-1zM686 414h1v1h-1zM127 415h1v1h-1zM686 415h1v1h-1zM127 416h1v1h-1zM686 416h1v1h-1zM127 417h1v1h-1zM686 417h1v1h-1zM127 418h1v1h-1zM686 418h1v1h-1zM127 419h1v1h-1zM686 419h1v1h-1zM127 420h1v1h-1zM686 420h1v1h-1zM128 421h1v1h-1zM685 421h1v1h-1zM128 422h1v1h-1zM685 422h1v1h-1zM128 423h1v1h-1zM685 423h1v1h-1zM128 424h1v1h-1zM685 424h1v1h-1zM128 425h1v1h-1zM685 425h1v1h-1zM128 426h1v1h-1zM685 426h1v1h-1zM128 427h1v1h-1zM685 427h1v1h-1zM128 428h1v1h-1zM685 428h1v1h-1zM128 429h1v1h-1zM685 429h1v1h-1zM128 430h1v1h-1zM685 430h1v1h-1zM128 431h1v1h-1zM685 431h1v1h-1zM128 432h1v1h-1zM685 432h1v1h-1zM128 433h1v1h-1zM685 433h1v1h-1zM128 434h1v1h-1zM685 434h1v1h-1zM129 435h1v1h-1zM684 435h1v1h-1zM129 436h1v1h-1zM684 436h1v1h-1zM129 437h1v1h-1zM684 437h1v1h-1zM129 438h1v1h-1zM684 438h1v1h-1zM129 439h1v1h-1zM684 439h1v1h-1zM129 440h1v1h-1zM684 440h1v1h-1zM129 441h1v1h-1zM684 441h1v1h-1zM129 442h1v1h-1zM684 442h1v1h-1zM130 443h1v1h-1zM683 443h1v1h-1zM130 444h1v1h-1zM683 444h1v1h-1zM130 445h1v1h-1zM683 445h1v1h-1zM130 446h1v1h-1zM683 446h1v1h-1zM130 447h1v1h-1zM683 447h1v1h-1zM130 448h1v1h-1zM683 448h1v1h-1zM130 449h1v1h-1zM683 449h1v1h-1zM131 450h1v1h-1zM682 450h1v1h-1zM131 451h1v1h-1zM682 451h1v1h-1zM131 452h1v1h-1zM682 452h1v1h-1zM131 453h1v1h-1zM682 453h1v1h-1zM131 454h1v1h-1zM682 454h1v1h-1zM131 455h1v1h-1zM682 455h1v1h-1zM132 456h1v1h-1zM681 456h1v1h-1zM132 457h1v1h-1zM681 457h1v1h-1zM132 458h1v1h-1zM681 458h1v1h-1zM132 459h1v1h-1zM681 459h1v1h-1zM132 460h1v1h-1zM681 460h1v1h-1zM132 461h2v1h-2zM680 461h2v1h-2zM133 462h1v1h-1zM680 462h1v1h-1zM133 463h1v1h-1zM680 463h1v1h-1zM133 464h1v1h-1zM680 464h1v1h-1zM133 465h1v1h-1zM680 465h1v1h-1zM134 466h1v1h-1zM679 466h1v1h-1zM134 467h1v1h-1zM679 467h1v1h-1zM134 468h1v1h-1zM679 468h1v1h-1zM134 469h1v1h-1zM679 469h1v1h-1zM134 470h1v1h-1zM679 470h1v1h-1zM135 471h1v1h-1zM678 471h1v1h-1zM135 472h1v1h-1zM678 472h1v1h-1zM135 473h1v1h-1zM678 473h1v1h-1zM135 474h1v1h-1zM678 474h1v1h-1zM136 475h1v1h-1zM677 475h1v1h-1zM136 476h1v1h-1zM677 476h1v1h-1zM136 477h1v1h-1zM677 477h1v1h-1zM136 478h1v1h-1zM677 478h1v1h-1zM137 479h1v1h-1zM676 479h1v1h-1zM137 480h1v1h-1zM676 480h1v1h-1zM137 481h1v1h-1zM676 481h1v1h-1zM138 482h1v1h-1zM675 482h1v1h-1zM138 483h1v1h-1zM675 483h1v1h-1zM138 484h1v1h-1zM675 484h1v1h-1zM138 485h1v1h-1zM675 485h1v1h-1zM139 486h1v1h-1zM674 486h1v1h-1zM139 487h1v1h-1zM674 487h1v1h-1zM139 488h1v1h-1zM674 488h1v1h-1zM140 489h1v1h-1zM673 489h1v1h-1zM140 490h1v1h-1zM673 490h1v1h-1zM140 491h1v1h-1zM673 491h1v1h-1zM141 492h1v1h-1zM672 492h1v1h-1zM141 493h1v1h-1zM672 493h1v1h-1zM141 494h1v1h-1zM672 494h1v1h-1zM141 495h2v1h-2zM671 495h2v1h-2zM142 496h1v1h-1zM671 496h1v1h-1zM142 497h1v1h-1zM671 497h1v1h-1zM143 498h1v1h-1zM670 498h1v1h-1zM143 499h1v1h-1zM670 499h1v1h-1zM143 500h1v1h-1zM670 500h1v1h-1zM144 501h1v1h-1zM669 501h1v1h-1zM144 502h1v1h-1zM669 502h1v1h-1zM144 503h1v1h-1zM669 503h1v1h-1zM145 504h1v1h-1zM668 504h1v1h-1zM145 505h1v1h-1zM668 505h1v1h-1zM145 506h1v1h-1zM668 506h1v1h-1zM146 507h1v1h-1zM667 507h1v1h-1zM146 508h1v1h-1zM667 508h1v1h-1zM147 509h1v1h-1zM666 509h1v1h-1zM147 510h1v1h-1zM666 510h1v1h-1zM147 511h1v1h-1zM666 511h1v1h-1zM148 512h1v1h-1zM665 512h1v1h-1zM148 513h1v1h-1zM665 513h1v1h-1zM149 514h1v1h-1zM664 514h1v1h-1zM149 515h1v1h-1zM664 515h1v1h-1zM149 516h2v1h-2zM663 516h2v1h-2zM150 517h1v1h-1zM663 517h1v1h-1zM150 518h1v1h-1zM663 518h1v1h-1zM151 519h1v1h-1zM662 519h1v1h-1zM151 520h1v1h-1zM662 520h1v1h-1zM152 521h1v1h-1zM661 521h1v1h-1zM152 522h1v1h-1zM661 522h1v1h-1zM153 523h1v1h-1zM660 523h1v1h-1zM153 524h1v1h-1zM660 524h1v1h-1zM153 525h2v1h-2zM659 525h2v1h-2zM154 526h1v1h-1zM659 526h1v1h-1zM154 527h2v1h-2zM658 527h2v1h-2zM155 528h1v1h-1zM658 528h1v1h-1zM155 529h1v1h-1zM658 529h1v1h-1zM156 530h1v1h-1zM657 530h1v1h-1zM156 531h1v1h-1zM657 531h1v1h-1zM157 532h1v1h-1zM656 532h1v1h-1zM157 533h1v1h-1zM656 533h1v1h-1zM158 534h1v1h-1zM655 534h1v1h-1zM158 535h2v1h-2zM654 535h2v1h-2zM159 536h1v1h-1zM654 536h1v1h-1zM159 537h2v1h-2zM653 537h2v1h-2zM160 538h1v1h-1zM653 538h1v1h-1zM160 539h2v1h-2zM652 539h2v1h-2zM161 540h1v1h-1zM652 540h1v1h-1zM162 541h1v1h-1zM651 541h1v1h-1zM162 542h1v1h-1zM651 542h1v1h-1zM163 543h1v1h-1zM650 543h1v1h-1zM163 544h1v1h-1zM650 544h1v1h-1zM164 545h1v1h-1zM649 545h1v1h-1zM164 546h2v1h-2zM648 546h2v1h-2zM165 547h1v1h-1zM648 547h1v1h-1zM166 548h1v1h-1zM647 548h1v1h-1zM166 549h1v1h-1zM647 549h1v1h-1zM167 550h1v1h-1zM646 550h1v1h-1zM167 551h1v1h-1zM646 551h1v1h-1zM168 552h1v1h-1zM645 552h1v1h-1zM169 553h1v1h-1zM644 553h1v1h-1zM169 554h1v1h-1zM644 554h1v1h-1zM170 555h1v1h-1zM643 555h1v1h-1zM170 556h2v1h-2zM642 556h2v1h-2zM171 557h1v1h-1zM642 557h1v1h-1zM172 558h1v1h-1zM641 558h1v1h-1zM172 559h2v1h-2zM640 559h2v1h-2zM173 560h1v1h-1zM640 560h1v1h-1zM174 561h1v1h-1zM639 561h1v1h-1zM174 562h2v1h-2zM638 562h2v1h-2zM175 563h1v1h-1zM638 563h1v1h-1zM176 564h1v1h-1zM637 564h1v1h-1zM176 565h2v1h-2zM636 565h2v1h-2zM177 566h1v1h-1zM636 566h1v1h-1zM178 567h1v1h-1zM635 567h1v1h-1zM178 568h2v1h-2zM634 568h2v1h-2zM179 569h1v1h-1zM634 569h1v1h-1zM180 570h1v1h-1zM633 570h1v1h-1zM181 571h1v1h-1zM632 571h1v1h-1zM181 572h2v1h-2zM631 572h2v1h-2zM182 573h1v1h-1zM631 573h1v1h-1zM183 574h1v1h-1zM630 574h1v1h-1zM184 575h1v1h-1zM629 575h1v1h-1zM184 576h2v1h-2zM628 576h2v1h-2zM185 577h1v1h-1zM628 577h1v1h-1zM186 578h1v1h-1zM627 578h1v1h-1zM187 579h1v1h-1zM626 579h1v1h-1zM187 580h2v1h-2zM625 580h2v1h-2zM188 581h1v1h-1zM625 581h1v1h-1zM189 582h1v1h-1zM624 582h1v1h-1zM190 583h1v1h-1zM623 583h1v1h-1zM191 584h1v1h-1zM622 584h1v1h-1zM191 585h2v1h-2zM621 585h2v1h-2zM192 586h2v1h-2zM620 586h2v1h-2zM193 587h1v1h-1zM620 587h1v1h-1zM194 588h1v1h-1zM619 588h1v1h-1zM195 589h1v1h-1zM618 589h1v1h-1zM196 590h1v1h-1zM617 590h1v1h-1zM197 591h1v1h-1zM616 591h1v1h-1zM197 592h2v1h-2zM615 592h2v1h-2zM198 593h2v1h-2zM614 593h2v1h-2zM199 594h2v1h-2zM613 594h2v1h-2zM200 595h1v1h-1zM613 595h1v1h-1zM201 596h1v1h-1zM612 596h1v1h-1zM202 597h1v1h-1zM611 597h1v1h-1zM203 598h1v1h-1zM610 598h1v1h-1zM204 599h1v1h-1zM609 599h1v1h-1zM205 600h1v1h-1zM608 600h1v1h-1zM206 601h1v1h-1zM607 601h1v1h-1zM207 602h1v1h-1zM606 602h1v1h-1zM208 603h1v1h-1zM605 603h1v1h-1zM209 604h1v1h-1zM604 604h1v1h-1zM210 605h1v1h-1zM603 605h1v1h-1zM211 606h1v1h-1zM602 606h1v1h-1zM212 607h1v1h-1zM601 607h1v1h-1zM213 608h1v1h-1zM600 608h1v1h-1zM214 609h1v1h-1zM599 609h1v1h-1zM215 610h1v1h-1zM598 610h1v1h-1zM216 611h1v1h-1zM597 611h1v1h-1zM217 612h1v1h-1zM596 612h1v1h-1zM218 613h2v1h-2zM594 613h2v1h-2zM219 614h2v1h-2zM593 614h2v1h-2zM220 615h2v1h-2zM592 615h2v1h-2zM221 616h2v1h-2zM591 616h2v1h-2zM223 617h1v1h-1zM590 617h1v1h-1zM224 618h1v1h-1zM589 618h1v1h-1zM225 619h1v1h-1zM588 619h1v1h-1zM226 620h2v1h-2zM586 620h2v1h-2zM227 621h2v1h-2zM585 621h2v1h-2zM228 622h2v1h-2zM584 622h2v1h-2zM230 623h1v1h-1zM583 623h1v1h-1zM231 624h1v1h-1zM582 624h1v1h-1zM232 625h2v1h-2zM580 625h2v1h-2zM233 626h2v1h-2zM579 626h2v1h-2zM235 627h1v1h-1zM578 627h1v1h-1zM236 628h2v1h-2zM576 628h2v1h-2zM237 629h2v1h-2zM575 629h2v1h-2zM239 630h1v1h-1zM574 630h1v1h-1zM240 631h2v1h-2zM572 631h2v1h-2zM241 632h2v1h-2zM571 632h2v1h-2zM243 633h1v1h-1zM570 633h1v1h-1zM244 634h2v1h-2zM568 634h2v1h-2zM245 635h2v1h-2zM567 635h2v1h-2zM247 636h2v1h-2zM565 636h2v1h-2zM248 637h2v1h-2zM564 637h2v1h-2zM250 638h2v1h-2zM562 638h2v1h-2zM251 639h2v1h-2zM561 639h2v1h-2zM253 640h2v1h-2zM559 640h2v1h-2zM254 641h2v1h-2zM558 641h2v1h-2zM256 642h2v1h-2zM556 642h2v1h-2zM257 643h2v1h-2zM555 643h2v1h-2zM259 644h2v1h-2zM553 644h2v1h-2zM261 645h1v1h-1zM552 645h1v1h-1zM262 646h2v1h-2zM550 646h2v1h-2zM264 647h2v1h-2zM548 647h2v1h-2zM266 648h2v1h-2zM546 648h2v1h-2zM267 649h2v1h-2zM545 649h2v1h-2zM269 650h2v1h-2zM543 650h2v1h-2zM271 651h2v1h-2zM541 651h2v1h-2zM273 652h2v1h-2zM539 652h2v1h-2zM274 653h3v1h-3zM537 653h3v1h-3zM276 654h3v1h-3zM535 654h3v1h-3zM278 655h2v1h-2zM534 655h2v1h-2zM280 656h2v1h-2zM532 656h2v1h-2zM282 657h2v1h-2zM530 657h2v1h-2zM284 658h3v1h-3zM527 658h3v1h-3zM286 659h3v1h-3zM525 659h3v1h-3zM288 660h3v1h-3zM523 660h3v1h-3zM291 661h2v1h-2zM521 661h2v1h-2zM293 662h2v1h-2zM519 662h2v1h-2zM295 663h3v1h-3zM516 663h3v1h-3zM297 664h3v1h-3zM514 664h3v1h-3zM300 665h2v1h-2zM512 665h2v1h-2zM302 666h3v1h-3zM509 666h3v1h-3zM305 667h2v1h-2zM507 667h2v1h-2zM307 668h3v1h-3zM504 668h3v1h-3zM310 669h3v1h-3zM501 669h3v1h-3zM313 670h3v1h-3zM498 670h3v1h-3zM316 671h3v1h-3zM495 671h3v1h-3zM318 672h4v1h-4zM492 672h4v1h-4zM322 673h3v1h-3zM489 673h3v1h-3zM325 674h3v1h-3zM486 674h3v1h-3zM328 675h4v1h-4zM482 675h4v1h-4zM332 676h3v1h-3zM479 676h3v1h-3zM335 677h4v1h-4zM475 677h4v1h-4zM339 678h4v1h-4zM471 678h4v1h-4zM343 679h5v1h-5zM466 679h5v1h-5zM348 680h5v1h-5zM461 680h5v1h-5zM352 681h6v1h-6zM456 681h6v1h-6zM358 682h6v1h-6zM450 682h6v1h-6zM364 683h7v1h-7zM443 683h7v1h-7zM371 684h8v1h-8zM435 684h8v1h-8zM379 685h14v1h-14zM421 685h14v1h-14zM393 686h28v1h-28zM387 248h7v1h-7zM417 248h10v1h-10zM380 249h7v1h-7zM427 249h7v1h-7zM375 250h5v1h-5zM434 250h5v1h-5zM370 251h5v1h-5zM439 251h5v1h-5zM366 252h5v1h-5zM443 252h5v1h-5zM363 253h4v1h-4zM447 253h4v1h-4zM359 254h4v1h-4zM451 254h4v1h-4zM356 255h4v1h-4zM454 255h4v1h-4zM353 256h4v1h-4zM457 256h4v1h-4zM351 257h3v1h-3zM460 257h3v1h-3zM348 258h3v1h-3zM463 258h3v1h-3zM346 259h2v1h-2zM466 259h2v1h-2zM343 260h3v1h-3zM468 260h3v1h-3zM341 261h3v1h-3zM470 261h3v1h-3zM339 262h2v1h-2zM473 262h2v1h-2zM337 263h2v1h-2zM475 263h2v1h-2zM335 264h2v1h-2zM477 264h2v1h-2zM333 265h2v1h-2zM479 265h2v1h-2zM331 266h2v1h-2zM481 266h2v1h-2zM329 267h2v1h-2zM483 267h2v1h-2zM327 268h2v1h-2zM485 268h2v1h-2zM326 269h2v1h-2zM486 269h2v1h-2zM324 270h2v1h-2zM488 270h2v1h-2zM322 271h2v1h-2zM490 271h2v1h-2zM321 272h2v1h-2zM491 272h2v1h-2zM319 273h2v1h-2zM493 273h2v1h-2zM318 274h2v1h-2zM494 274h2v1h-2zM316 275h2v1h-2zM496 275h2v1h-2zM315 276h2v1h-2zM497 276h2v1h-2zM313 277h2v1h-2zM499 277h2v1h-2zM312 278h2v1h-2zM500 278h2v1h-2zM311 279h1v1h-1zM502 279h1v1h-1zM309 280h2v1h-2zM503 280h2v1h-2zM308 281h2v1h-2zM504 281h2v1h-2zM307 282h2v1h-2zM505 282h2v1h-2zM306 283h1v1h-1zM507 283h1v1h-1zM304 284h2v1h-2zM508 284h2v1h-2zM303 285h2v1h-2zM509 285h2v1h-2zM302 286h2v1h-2zM510 286h2v1h-2zM301 287h2v1h-2zM511 287h2v1h-2zM300 288h1v1h-1zM513 288h1v1h-1zM299 289h1v1h-1zM514 289h1v1h-1zM298 290h1v1h-1zM515 290h1v1h-1zM297 291h1v1h-1zM516 291h1v1h-1zM296 292h1v1h-1zM517 292h1v1h-1zM295 293h1v1h-1zM518 293h1v1h-1zM294 294h1v1h-1zM519 294h1v1h-1zM293 295h1v1h-1zM520 295h1v1h-1zM292 296h1v1h-1zM521 296h1v1h-1zM291 297h1v1h-1zM522 297h1v1h-1zM290 298h1v1h-1zM523 298h1v1h-1zM289 299h1v1h-1zM524 299h1v1h-1zM288 300h1v1h-1zM525 300h1v1h-1zM287 301h1v1h-1zM526 301h1v1h-1zM286 302h2v1h-2zM526 302h2v1h-2zM285 303h2v1h-2zM527 303h2v1h-2zM284 304h2v1h-2zM528 304h2v1h-2zM284 305h1v1h-1zM529 305h1v1h-1zM283 306h1v1h-1zM530 306h1v1h-1zM282 307h1v1h-1zM531 307h1v1h-1zM281 308h2v1h-2zM531 308h2v1h-2zM280 309h2v1h-2zM532 309h2v1h-2zM280 310h1v1h-1zM533 310h1v1h-1zM279 311h1v1h-1zM534 311h1v1h-1zM278 312h1v1h-1zM535 312h1v1h-1zM277 313h2v1h-2zM535 313h2v1h-2zM277 314h1v1h-1zM536 314h1v1h-1zM276 315h1v1h-1zM537 315h1v1h-1zM275 316h2v1h-2zM537 316h2v1h-2zM275 317h1v1h-1zM538 317h1v1h-1zM274 318h1v1h-1zM539 318h1v1h-1zM273 319h2v1h-2zM539 319h2v1h-2zM273 320h1v1h-1zM540 320h1v1h-1zM272 321h1v1h-1zM541 321h1v1h-1zM271 322h2v1h-2zM541 322h2v1h-2zM271 323h1v1h-1zM542 323h1v1h-1zM270 324h1v1h-1zM543 324h1v1h-1zM270 325h1v1h-1zM543 325h1v1h-1zM269 326h1v1h-1zM544 326h1v1h-1zM268 327h2v1h-2zM544 327h2v1h-2zM268 328h1v1h-1zM545 328h1v1h-1zM267 329h1v1h-1zM546 329h1v1h-1zM267 330h1v1h-1zM546 330h1v1h-1zM266 331h1v1h-1zM547 331h1v1h-1zM266 332h1v1h-1zM547 332h1v1h-1zM265 333h1v1h-1zM548 333h1v1h-1zM265 334h1v1h-1zM548 334h1v1h-1zM264 335h1v1h-1zM549 335h1v1h-1zM264 336h1v1h-1zM549 336h1v1h-1zM263 337h1v1h-1zM550 337h1v1h-1zM263 338h1v1h-1zM550 338h1v1h-1zM262 339h1v1h-1zM551 339h1v1h-1zM262 340h1v1h-1zM551 340h1v1h-1zM261 341h1v1h-1zM552 341h1v1h-1zM261 342h1v1h-1zM552 342h1v1h-1zM260 343h2v1h-2zM552 343h2v1h-2zM260 344h1v1h-1zM553 344h1v1h-1zM260 345h1v1h-1zM553 345h1v1h-1zM259 346h1v1h-1zM554 346h1v1h-1zM259 347h1v1h-1zM554 347h1v1h-1zM258 348h1v1h-1zM555 348h1v1h-1zM258 349h1v1h-1zM555 349h1v1h-1zM258 350h1v1h-1zM555 350h1v1h-1zM257 351h1v1h-1zM556 351h1v1h-1zM257 352h1v1h-1zM556 352h1v1h-1zM256 353h2v1h-2zM556 353h2v1h-2zM256 354h1v1h-1zM557 354h1v1h-1zM256 355h1v1h-1zM557 355h1v1h-1zM255 356h2v1h-2zM557 356h2v1h-2zM255 357h1v1h-1zM558 357h1v1h-1zM255 358h1v1h-1zM558 358h1v1h-1zM254 359h2v1h-2zM558 359h2v1h-2zM254 360h1v1h-1zM559 360h1v1h-1zM254 361h1v1h-1zM559 361h1v1h-1zM254 362h1v1h-1zM559 362h1v1h-1zM253 363h1v1h-1zM560 363h1v1h-1zM253 364h1v1h-1zM560 364h1v1h-1zM253 365h1v1h-1zM560 365h1v1h-1zM252 366h2v1h-2zM560 366h2v1h-2zM252 367h1v1h-1zM561 367h1v1h-1zM252 368h1v1h-1zM561 368h1v1h-1zM252 369h1v1h-1zM561 369h1v1h-1zM251 370h2v1h-2zM561 370h2v1h-2zM251 371h1v1h-1zM562 371h1v1h-1zM251 372h1v1h-1zM562 372h1v1h-1zM251 373h1v1h-1zM562 373h1v1h-1zM251 374h1v1h-1zM562 374h1v1h-1zM250 375h1v1h-1zM563 375h1v1h-1zM250 376h1v1h-1zM563 376h1v1h-1zM250 377h1v1h-1zM563 377h1v1h-1zM250 378h1v1h-1zM563 378h1v1h-1zM250 379h1v1h-1zM563 379h1v1h-1zM249 380h1v1h-1zM564 380h1v1h-1zM249 381h1v1h-1zM564 381h1v1h-1zM249 382h1v1h-1zM564 382h1v1h-1zM249 383h1v1h-1zM564 383h1v1h-1zM249 384h1v1h-1zM564 384h1v1h-1zM249 385h1v1h-1zM564 385h1v1h-1zM249 386h1v1h-1zM564 386h1v1h-1zM248 387h1v1h-1zM565 387h1v1h-1zM248 388h1v1h-1zM565 388h1v1h-1zM248 389h1v1h-1zM565 389h1v1h-1zM248 390h1v1h-1zM565 390h1v1h-1zM248 391h1v1h-1zM565 391h1v1h-1zM248 392h1v1h-1zM565 392h1v1h-1zM248 393h1v1h-1zM565 393h1v1h-1zM248 394h1v1h-1zM565 394h1v1h-1zM248 395h1v1h-1zM565 395h1v1h-1zM248 396h1v1h-1zM565 396h1v1h-1zM248 397h1v1h-1zM565 397h1v1h-1zM247 398h1v1h-1zM566 398h1v1h-1zM247 399h1v1h-1zM566 399h1v1h-1zM247 400h1v1h-1zM566 400h1v1h-1zM247 401h1v1h-1zM566 401h1v1h-1zM247 402h1v1h-1zM566 402h1v1h-1zM247 403h1v1h-1zM566 403h1v1h-1zM247 404h1v1h-1zM566 404h1v1h-1zM247 405h1v1h-1zM566 405h1v1h-1zM247 406h1v1h-1zM566 406h1v1h-1zM247 407h1v1h-1zM566 407h1v1h-1zM247 408h1v1h-1zM566 408h1v1h-1zM247 409h1v1h-1zM566 409h1v1h-1zM247 410h1v1h-1zM566 410h1v1h-1zM247 411h1v1h-1zM566 411h1v1h-1zM247 412h1v1h-1zM566 412h1v1h-1zM247 413h1v1h-1zM566 413h1v1h-1zM247 414h1v1h-1zM566 414h1v1h-1zM247 415h1v1h-1zM566 415h1v1h-1zM248 416h1v1h-1zM565 416h1v1h-1zM248 417h1v1h-1zM565 417h1v1h-1zM248 418h1v1h-1zM565 418h1v1h-1zM248 419h1v1h-1zM565 419h1v1h-1zM248 420h1v1h-1zM565 420h1v1h-1zM248 421h1v1h-1zM565 421h1v1h-1zM248 422h1v1h-1zM565 422h1v1h-1zM248 423h1v1h-1zM565 423h1v1h-1zM248 424h1v1h-1zM565 424h1v1h-1zM248 425h1v1h-1zM565 425h1v1h-1zM248 426h1v1h-1zM565 426h1v1h-1zM249 427h1v1h-1zM564 427h1v1h-1zM249 428h1v1h-1zM564 428h1v1h-1zM249 429h1v1h-1zM564 429h1v1h-1zM249 430h1v1h-1zM564 430h1v1h-1zM249 431h1v1h-1zM564 431h1v1h-1zM249 432h1v1h-1zM564 432h1v1h-1zM249 433h1v1h-1zM564 433h1v1h-1zM250 434h1v1h-1zM563 434h1v1h-1zM250 435h1v1h-1zM563 435h1v1h-1zM250 436h1v1h-1zM563 436h1v1h-1zM250 437h1v1h-1zM563 437h1v1h-1zM250 438h1v1h-1zM563 438h1v1h-1zM251 439h1v1h-1zM562 439h1v1h-1zM251 440h1v1h-1zM562 440h1v1h-1zM251 441h1v1h-1zM562 441h1v1h-1zM251 442h1v1h-1zM562 442h1v1h-1zM251 443h2v1h-2zM561 443h2v1h-2zM252 444h1v1h-1zM561 444h1v1h-1zM252 445h1v1h-1zM561 445h1v1h-1zM252 446h1v1h-1zM561 446h1v1h-1zM252 447h2v1h-2zM560 447h2v1h-2zM253 448h1v1h-1zM560 448h1v1h-1zM253 449h1v1h-1zM560 449h1v1h-1zM253 450h1v1h-1zM560 450h1v1h-1zM254 451h1v1h-1zM559 451h1v1h-1zM254 452h1v1h-1zM559 452h1v1h-1zM254 453h1v1h-1zM559 453h1v1h-1zM254 454h2v1h-2zM558 454h2v1h-2zM255 455h1v1h-1zM558 455h1v1h-1zM255 456h1v1h-1zM558 456h1v1h-1zM255 457h2v1h-2zM557 457h2v1h-2zM256 458h1v1h-1zM557 458h1v1h-1zM256 459h1v1h-1zM557 459h1v1h-1zM256 460h2v1h-2zM556 460h2v1h-2zM257 461h1v1h-1zM556 461h1v1h-1zM257 462h1v1h-1zM556 462h1v1h-1zM258 463h1v1h-1zM555 463h1v1h-1zM258 464h1v1h-1zM555 464h1v1h-1zM258 465h1v1h-1zM555 465h1v1h-1zM259 466h1v1h-1zM554 466h1v1h-1zM259 467h1v1h-1zM554 467h1v1h-1zM260 468h1v1h-1zM553 468h1v1h-1zM260 469h1v1h-1zM553 469h1v1h-1zM260 470h2v1h-2zM552 470h2v1h-2zM261 471h1v1h-1zM552 471h1v1h-1zM261 472h1v1h-1zM552 472h1v1h-1zM262 473h1v1h-1zM551 473h1v1h-1zM262 474h1v1h-1zM551 474h1v1h-1zM263 475h1v1h-1zM550 475h1v1h-1zM263 476h1v1h-1zM550 476h1v1h-1zM264 477h1v1h-1zM549 477h1v1h-1zM264 478h1v1h-1zM549 478h1v1h-1zM265 479h1v1h-1zM548 479h1v1h-1zM265 480h1v1h-1zM548 480h1v1h-1zM266 481h1v1h-1zM547 481h1v1h-1zM266 482h1v1h-1zM547 482h1v1h-1zM267 483h1v1h-1zM546 483h1v1h-1zM267 484h1v1h-1zM546 484h1v1h-1zM268 485h1v1h-1zM545 485h1v1h-1zM268 486h2v1h-2zM544 486h2v1h-2zM269 487h1v1h-1zM544 487h1v1h-1zM270 488h1v1h-1zM543 488h1v1h-1zM270 489h1v1h-1zM543 489h1v1h-1zM271 490h1v1h-1zM542 490h1v1h-1zM271 491h2v1h-2zM541 491h2v1h-2zM272 492h1v1h-1zM541 492h1v1h-1zM273 493h1v1h-1zM540 493h1v1h-1zM273 494h2v1h-2zM539 494h2v1h-2zM274 495h1v1h-1zM539 495h1v1h-1zM275 496h1v1h-1zM538 496h1v1h-1zM275 497h2v1h-2zM537 497h2v1h-2zM276 498h1v1h-1zM537 498h1v1h-1zM277 499h1v1h-1zM536 499h1v1h-1zM277 500h2v1h-2zM535 500h2v1h-2zM278 501h1v1h-1zM535 501h1v1h-1zM279 502h1v1h-1zM534 502h1v1h-1zM280 503h1v1h-1zM533 503h1v1h-1zM280 504h2v1h-2zM532 504h2v1h-2zM281 505h2v1h-2zM531 505h2v1h-2zM282 506h1v1h-1zM531 506h1v1h-1zM283 507h1v1h-1zM530 507h1v1h-1zM284 508h1v1h-1zM529 508h1v1h-1zM284 509h2v1h-2zM528 509h2v1h-2zM285 510h2v1h-2zM527 510h2v1h-2zM286 511h2v1h-2zM526 511h2v1h-2zM287 512h1v1h-1zM526 512h1v1h-1zM288 513h1v1h-1zM525 513h1v1h-1zM289 514h1v1h-1zM524 514h1v1h-1zM290 515h1v1h-1zM523 515h1v1h-1zM291 516h1v1h-1zM522 516h1v1h-1zM292 517h1v1h-1zM521 517h1v1h-1zM293 518h1v1h-1zM520 518h1v1h-1zM294 519h1v1h-1zM519 519h1v1h-1zM295 520h1v1h-1zM518 520h1v1h-1zM296 521h1v1h-1zM517 521h1v1h-1zM297 522h1v1h-1zM516 522h1v1h-1zM298 523h1v1h-1zM515 523h1v1h-1zM299 524h1v1h-1zM514 524h1v1h-1zM300 525h1v1h-1zM513 525h1v1h-1zM301 526h2v1h-2zM511 526h2v1h-2zM302 527h2v1h-2zM510 527h2v1h-2zM303 528h2v1h-2zM509 528h2v1h-2zM304 529h2v1h-2zM508 529h2v1h-2zM306 530h1v1h-1zM507 530h1v1h-1zM307 531h2v1h-2zM505 531h2v1h-2zM308 532h2v1h-2zM504 532h2v1h-2zM309 533h2v1h-2zM503 533h2v1h-2zM311 534h1v1h-1zM502 534h1v1h-1zM312 535h2v1h-2zM500 535h2v1h-2zM313 536h2v1h-2zM499 536h2v1h-2zM315 537h2v1h-2zM497 537h2v1h-2zM316 538h2v1h-2zM496 538h2v1h-2zM318 539h2v1h-2zM494 539h2v1h-2zM319 540h2v1h-2zM493 540h2v1h-2zM321 541h2v1h-2zM491 541h2v1h-2zM322 542h2v1h-2zM490 542h2v1h-2zM324 543h2v1h-2zM488 543h2v1h-2zM326 544h2v1h-2zM486 544h2v1h-2zM327 545h2v1h-2zM485 545h2v1h-2zM329 546h2v1h-2zM483 546h2v1h-2zM331 547h2v1h-2zM481 547h2v1h-2zM333 548h2v1h-2zM479 548h2v1h-2zM335 549h2v1h-2zM477 549h2v1h-2zM337 550h2v1h-2zM475 550h2v1h-2zM339 551h2v1h-2zM473 551h2v1h-2zM341 552h3v1h-3zM470 552h3v1h-3zM343 553h3v1h-3zM468 553h3v1h-3zM346 554h2v1h-2zM466 554h2v1h-2zM348 555h3v1h-3zM463 555h3v1h-3zM351 556h3v1h-3zM460 556h3v1h-3zM353 557h4v1h-4zM457 557h4v1h-4zM356 558h4v1h-4zM454 558h4v1h-4zM359 559h4v1h-4zM451 559h4v1h-4zM363 560h4v1h-4zM447 560h4v1h-4zM366 561h5v1h-5zM443 561h5v1h-5zM370 562h5v1h-5zM439 562h5v1h-5zM375 563h5v1h-5zM434 563h5v1h-5zM380 564h7v1h-7zM427 564h7v1h-7zM387 565h11v1h-11zM416 565h11v1h-11zM398 566h18v1h-18z" fill="#d2d4d4"/>
<path d="M414 368h2v1h-2zM394 369h4v1h-4zM416 369h4v1h-4zM392 370h2v1h-2zM420 370h2v1h-2zM389 371h3v1h-3zM422 371h3v1h-3zM388 372h2v1h-2zM424 372h2v1h-2zM386 373h2v1h-2zM426 373h2v1h-2zM384 374h2v1h-2zM428 374h2v1h-2zM383 375h2v1h-2zM429 375h2v1h-2zM382 376h1v1h-1zM431 376h1v1h-1zM381 377h1v1h-1zM432 377h1v1h-1zM379 378h2v1h-2zM433 378h2v1h-2zM378 379h2v1h-2zM434 379h2v1h-2zM378 380h1v1h-1zM435 380h1v1h-1zM377 381h1v1h-1zM436 381h1v1h-1zM376 382h1v1h-1zM437 382h1v1h-1zM375 383h1v1h-1zM438 383h1v1h-1zM374 384h2v1h-2zM438 384h2v1h-2zM374 385h1v1h-1zM439 385h1v1h-1zM373 386h1v1h-1zM440 386h1v1h-1zM373 387h1v1h-1zM440 387h1v1h-1zM372 388h1v1h-1zM441 388h1v1h-1zM371 389h2v1h-2zM441 389h2v1h-2zM371 390h1v1h-1zM442 390h1v1h-1zM371 391h1v1h-1zM442 391h1v1h-1zM370 392h1v1h-1zM443 392h1v1h-1zM370 393h1v1h-1zM443 393h1v1h-1zM369 394h1v1h-1zM444 394h1v1h-1zM369 395h1v1h-1zM444 395h1v1h-1zM369 396h1v1h-1zM444 396h1v1h-1zM369 397h1v1h-1zM444 397h1v1h-1zM368 398h1v1h-1zM445 398h1v1h-1zM368 399h1v1h-1zM445 399h1v1h-1zM368 400h1v1h-1zM445 400h1v1h-1zM368 401h1v1h-1zM445 401h1v1h-1zM368 402h1v1h-1zM445 402h1v1h-1zM368 403h1v1h-1zM445 403h1v1h-1zM367 404h1v1h-1zM446 404h1v1h-1zM367 405h1v1h-1zM446 405h1v1h-1zM367 406h1v1h-1zM446 406h1v1h-1zM367 407h1v1h-1zM446 407h1v1h-1zM367 408h1v1h-1zM446 408h1v1h-1zM367 409h1v1h-1zM446 409h1v1h-1zM368 410h1v1h-1zM445 410h1v1h-1zM368 411h1v1h-1zM445 411h1v1h-1zM368 412h1v1h-1zM445 412h1v1h-1zM368 413h1v1h-1zM445 413h1v1h-1zM368 414h1v1h-1zM445 414h1v1h-1zM368 415h1v1h-1zM445 415h1v1h-1zM369 416h1v1h-1zM444 416h1v1h-1zM369 417h1v1h-1zM444 417h1v1h-1zM369 418h1v1h-1zM444 418h1v1h-1zM369 419h1v1h-1zM444 419h1v1h-1zM370 420h1v1h-1zM443 420h1v1h-1zM370 421h1v1h-1zM443 421h1v1h-1zM371 422h1v1h-1zM442 422h1v1h-1zM371 423h1v1h-1zM442 423h1v1h-1zM371 424h2v1h-2zM441 424h2v1h-2zM372 425h1v1h-1zM441 425h1v1h-1zM373 426h1v1h-1zM440 426h1v1h-1zM373 427h1v1h-1zM440 427h1v1h-1zM374 428h1v1h-1zM439 428h1v1h-1zM374 429h2v1h-2zM438 429h2v1h-2zM375 430h1v1h-1zM438 430h1v1h-1zM376 431h1v1h-1zM437 431h1v1h-1zM377 432h1v1h-1zM436 432h1v1h-1zM378 433h1v1h-1zM435 433h1v1h-1zM378 434h2v1h-2zM434 434h2v1h-2zM379 435h2v1h-2zM433 435h2v1h-2zM381 436h1v1h-1zM432 436h1v1h-1zM382 437h1v1h-1zM431 437h1v1h-1zM383 438h2v1h-2zM429 438h2v1h-2zM384 439h2v1h-2zM428 439h2v1h-2zM386 440h2v1h-2zM426 440h2v1h-2zM388 441h2v1h-2zM424 441h2v1h-2zM389 442h3v1h-3zM422 442h3v1h-3zM392 443h2v1h-2zM420 443h2v1h-2zM394 444h4v1h-4zM416 444h4v1h-4zM398 445h6v1h-6zM410 445h6v1h-6zM404 446h6v1h-6z" fill="#e01018"/>

</g>
<g id="strikes">
<circle cx="96.7" cy="532.4" r="18" fill="none" stroke="#f4f000" stroke-width="1.2" stroke-dasharray="3.5 10.64"/><path d="M157.6 472.6L112 517" stroke="#e0e0e0" stroke-width="1"/><path d="M189.8 466.6h6.2" stroke="#ffff00" stroke-width="1.3"/><path d="M112 529.5h7M114 527.7l-2 1.8 2 1.8" stroke="#f4f000" stroke-width="1.1" fill="none"/>
<g stroke="#ffb400" fill="none" stroke-width="1.3"><circle cx="47.5" cy="163.5" r="3.9"/><path d="M45.2 163.5h4.6"/></g>
<g stroke="#ffd800" fill="none" stroke-width="1.3"><circle cx="18.5" cy="211.6" r="3.9"/><path d="M16.2 211.6h4.6"/></g>
<g stroke="#f07000" fill="none" stroke-width="1.3"><circle cx="95.5" cy="392.1" r="3.9"/><path d="M93.2 392.1h4.6"/></g>
<g stroke="#ff9000" fill="none" stroke-width="1.3"><circle cx="204.4" cy="391.3" r="3.9"/><path d="M202.1 391.3h4.6"/></g>
<g stroke="#ffd800" fill="none" stroke-width="1.3"><circle cx="72.2" cy="442.4" r="3.9"/><path d="M69.9 442.4h4.6M72.2 440.09999999999997v4.6"/></g>
<g stroke="#ffb400" fill="none" stroke-width="1.3"><circle cx="76.3" cy="457.6" r="3.9"/><path d="M74.0 457.6h4.6"/></g>
<g stroke="#ffb400" fill="none" stroke-width="1.3"><circle cx="115.3" cy="469.4" r="3.9"/><path d="M113.0 469.4h4.6M115.3 467.09999999999997v4.6"/></g>
<g stroke="#ffd800" fill="none" stroke-width="1.3"><circle cx="85.2" cy="476.3" r="3.9"/><path d="M82.9 476.3h4.6"/></g>
<g stroke="#ffd800" fill="none" stroke-width="1.3"><circle cx="18.5" cy="485.5" r="3.9"/><path d="M16.2 485.5h4.6M18.5 483.2v4.6"/></g>
<g stroke="#ffd800" fill="none" stroke-width="1.3"><circle cx="35.2" cy="493.3" r="3.9"/><path d="M32.900000000000006 493.3h4.6"/></g>
<g stroke="#ffff00" fill="none" stroke-width="1.3"><circle cx="94.6" cy="492.3" r="3.9"/><path d="M92.3 492.3h4.6"/></g>
<g stroke="#ffff00" fill="none" stroke-width="1.3"><circle cx="101.5" cy="500.2" r="3.9"/><path d="M99.2 500.2h4.6M101.5 497.9v4.6"/></g>
<g stroke="#ffff00" fill="none" stroke-width="1.3"><circle cx="57.4" cy="503.2" r="3.9"/><path d="M55.1 503.2h4.6"/></g>
<g stroke="#ffd800" fill="none" stroke-width="1.3"><circle cx="75.1" cy="505.4" r="3.9"/><path d="M72.8 505.4h4.6"/></g>
<g stroke="#ffb400" fill="none" stroke-width="1.3"><circle cx="84.5" cy="502.2" r="3.9"/><path d="M82.2 502.2h4.6"/></g>
<g stroke="#ffb400" fill="none" stroke-width="1.3"><circle cx="84.5" cy="507.1" r="3.9"/><path d="M82.2 507.1h4.6M84.5 504.8v4.6"/></g>
<g stroke="#ffd800" fill="none" stroke-width="1.3"><circle cx="10.3" cy="508.4" r="3.9"/><path d="M8.0 508.4h4.6"/></g>
<g stroke="#ffb400" fill="none" stroke-width="1.3"><circle cx="41.4" cy="512.0" r="3.9"/><path d="M39.1 512.0h4.6"/></g>
<g stroke="#ffd800" fill="none" stroke-width="1.3"><circle cx="44.3" cy="516.2" r="3.9"/><path d="M42.0 516.2h4.6"/></g>
<g stroke="#ffff00" fill="none" stroke-width="1.3"><circle cx="61.1" cy="521.2" r="3.9"/><path d="M58.800000000000004 521.2h4.6"/></g>
<g stroke="#ffd800" fill="none" stroke-width="1.3"><circle cx="83.2" cy="521.9" r="3.9"/><path d="M80.9 521.9h4.6"/></g>
<g stroke="#ffb400" fill="none" stroke-width="1.3"><circle cx="91.9" cy="520.7" r="3.9"/><path d="M89.60000000000001 520.7h4.6"/></g>
<g stroke="#ffb400" fill="none" stroke-width="1.3"><circle cx="93.6" cy="525.6" r="3.9"/><path d="M91.3 525.6h4.6"/></g>
<g stroke="#ffb400" fill="none" stroke-width="1.3"><circle cx="98.5" cy="522.6" r="3.9"/><path d="M96.2 522.6h4.6"/></g>
<g stroke="#ffb400" fill="none" stroke-width="1.3"><circle cx="94.8" cy="529.3" r="3.9"/><path d="M92.5 529.3h4.6"/></g>
<g stroke="#ffff00" fill="none" stroke-width="1.3"><circle cx="116.2" cy="521.2" r="3.9"/><path d="M113.9 521.2h4.6"/></g>
<g stroke="#ffff00" fill="none" stroke-width="1.3"><circle cx="135.4" cy="524.4" r="3.9"/><path d="M133.1 524.4h4.6"/></g>
<g stroke="#ffb400" fill="none" stroke-width="1.3"><circle cx="35.2" cy="528.1" r="3.9"/><path d="M32.900000000000006 528.1h4.6M35.2 525.8000000000001v4.6"/></g>
<g stroke="#ffd800" fill="none" stroke-width="1.3"><circle cx="41.4" cy="530.0" r="3.9"/><path d="M39.1 530.0h4.6"/></g>
<g stroke="#ffff00" fill="none" stroke-width="1.3"><circle cx="34.5" cy="537.4" r="3.9"/><path d="M32.2 537.4h4.6"/></g>
<g stroke="#ffff00" fill="none" stroke-width="1.3"><circle cx="68.2" cy="535.2" r="3.9"/><path d="M65.9 535.2h4.6"/></g>
<g stroke="#ffff00" fill="none" stroke-width="1.3"><circle cx="100.5" cy="535.0" r="3.9"/><path d="M98.2 535.0h4.6"/></g>
<g stroke="#ffff00" fill="none" stroke-width="1.3"><circle cx="94.3" cy="541.1" r="3.9"/><path d="M92.0 541.1h4.6"/></g>
<g stroke="#ffff00" fill="none" stroke-width="1.3"><circle cx="111.3" cy="541.1" r="3.9"/><path d="M109.0 541.1h4.6"/></g>
<g stroke="#ffff00" fill="none" stroke-width="1.3"><circle cx="140.4" cy="536.9" r="3.9"/><path d="M138.1 536.9h4.6"/></g>
<g stroke="#ffb400" fill="none" stroke-width="1.3"><circle cx="50.5" cy="541.1" r="3.9"/><path d="M48.2 541.1h4.6"/></g>
<g stroke="#ffff00" fill="none" stroke-width="1.3"><circle cx="149.0" cy="549.0" r="3.9"/><path d="M146.7 549.0h4.6"/></g>
<g stroke="#ffff00" fill="none" stroke-width="1.3"><circle cx="148.2" cy="552.7" r="3.9"/><path d="M145.89999999999998 552.7h4.6"/></g>
<g stroke="#ffff00" fill="none" stroke-width="1.3"><circle cx="71.4" cy="552.2" r="3.9"/><path d="M69.10000000000001 552.2h4.6"/></g>
<g stroke="#ffb400" fill="none" stroke-width="1.3"><circle cx="78.3" cy="556.9" r="3.9"/><path d="M76.0 556.9h4.6"/></g>
<g stroke="#ffff00" fill="none" stroke-width="1.3"><circle cx="86.4" cy="557.9" r="3.9"/><path d="M84.10000000000001 557.9h4.6"/></g>
<g stroke="#ffb400" fill="none" stroke-width="1.3"><circle cx="30.3" cy="555.1" r="3.9"/><path d="M28.0 555.1h4.6"/></g>
<g stroke="#ffd800" fill="none" stroke-width="1.3"><circle cx="69.4" cy="562.0" r="3.9"/><path d="M67.10000000000001 562.0h4.6"/></g>
<g stroke="#ffd800" fill="none" stroke-width="1.3"><circle cx="28.3" cy="566.5" r="3.9"/><path d="M26.0 566.5h4.6"/></g>
<g stroke="#ffd800" fill="none" stroke-width="1.3"><circle cx="34.5" cy="567.5" r="3.9"/><path d="M32.2 567.5h4.6"/></g>
<g stroke="#ffff00" fill="none" stroke-width="1.3"><circle cx="105.4" cy="565.2" r="3.9"/><path d="M103.10000000000001 565.2h4.6M105.4 562.9000000000001v4.6"/></g>
<g stroke="#ffff00" fill="none" stroke-width="1.3"><circle cx="52.2" cy="584.0" r="3.9"/><path d="M49.900000000000006 584.0h4.6M52.2 581.7v4.6"/></g>
<g stroke="#ffff00" fill="none" stroke-width="1.3"><circle cx="72.4" cy="582.2" r="3.9"/><path d="M70.10000000000001 582.2h4.6"/></g>
<g stroke="#ffff00" fill="none" stroke-width="1.3"><circle cx="101.5" cy="586.2" r="3.9"/><path d="M99.2 586.2h4.6"/></g>
<g stroke="#ffff00" fill="none" stroke-width="1.3"><circle cx="119.4" cy="597.5" r="3.9"/><path d="M117.10000000000001 597.5h4.6"/></g>
<g stroke="#ffb400" fill="none" stroke-width="1.3"><circle cx="215.5" cy="434.5" r="3.9"/><path d="M213.2 434.5h4.6"/></g>
<g stroke="#ffb400" fill="none" stroke-width="1.3"><circle cx="212.3" cy="464.5" r="3.9"/><path d="M210.0 464.5h4.6"/></g>
<g stroke="#ff9000" fill="none" stroke-width="1.3"><circle cx="21.4" cy="740.4" r="3.9"/><path d="M19.099999999999998 740.4h4.6"/></g>
<g stroke="#ff9000" fill="none" stroke-width="1.3"><circle cx="705.3" cy="641.4" r="3.9"/><path d="M703.0 641.4h4.6M705.3 639.1v4.6"/></g>
<g stroke="#f07000" fill="none" stroke-width="1.3"><circle cx="738.3" cy="692.3" r="3.9"/><path d="M736.0 692.3h4.6M738.3 690.0v4.6"/></g>
<g stroke="#f07000" fill="none" stroke-width="1.3"><circle cx="769.4" cy="728.1" r="3.9"/><path d="M767.1 728.1h4.6M769.4 725.8000000000001v4.6"/></g>
</g>
<g id="map-labels">
<text x="395.4" y="10.9" font-family='"DejaVu Sans","Liberation Sans",sans-serif' font-size="9.5" letter-spacing="1.01" fill="#ffffa0">313</text><text x="395.4" y="131.1" font-family='"DejaVu Sans","Liberation Sans",sans-serif' font-size="9.5" letter-spacing="0.93" fill="#ffffa0">219</text><text x="395.4" y="251.1" font-family='"DejaVu Sans","Liberation Sans",sans-serif' font-size="9.5" letter-spacing="1.3" fill="#ffffa0">125</text><text x="399.3" y="371.1" font-family='"DejaVu Sans","Liberation Sans",sans-serif' font-size="9.5" letter-spacing="1.45" fill="#ffffa0">31</text><text x="151.7" y="470.2" font-family='"DejaVu Sans","Liberation Sans",sans-serif' font-size="9.5" letter-spacing="1.53" fill="#f4f4f4">P-55<tspan fill="#00e0e8">-</tspan>6</text>
</g>
<g id="legend">
<g shape-rendering="crispEdges"><rect x="9.5" y="759.5" width="243" height="43" fill="#000" stroke="#a0a0a0" stroke-width="1"/>
<rect x="685" y="792" width="121" height="14" fill="#000"/></g>
<g stroke="#00e8f0" fill="none" stroke-width="1.1"><circle cx="60.3" cy="780.5" r="4"/><path d="M57.8 780.5h5"/></g>
<path d="M82.0 780.5h7" stroke="#00e8f0" stroke-width="1.1" fill="none"/>
<g stroke="#00e8f0" fill="none" stroke-width="1.1"><circle cx="110.5" cy="780.5" r="4"/><path d="M108.0 780.5h5M110.5 778.0v5"/></g>
<path d="M131.9 780.5h7M135.4 777.0v7" stroke="#00e8f0" stroke-width="1.1" fill="none"/>
<g stroke="#ffff00" fill="none" stroke-width="1.1"><circle cx="60.3" cy="793.5" r="4"/><path d="M57.8 793.5h5"/></g>
<path d="M82.0 793.5h7" stroke="#ffff00" stroke-width="1.1" fill="none"/>
<g stroke="#ffff00" fill="none" stroke-width="1.1"><circle cx="110.5" cy="793.5" r="4"/><path d="M108.0 793.5h5M110.5 791.0v5"/></g>
<path d="M131.9 793.5h7M135.4 790.0v7" stroke="#ffff00" stroke-width="1.1" fill="none"/>
<text x="12.6" y="771" font-family='"Liberation Sans","DejaVu Sans",sans-serif' font-size="9.6" letter-spacing="-0.02" fill="#e0e0e0">Symbols</text><text x="52.5" y="771" font-family='"DejaVu Sans","Liberation Sans",sans-serif' font-size="9.4" letter-spacing="0.5" fill="#e0e0e0">-CG</text><text x="77.6" y="771" font-family='"DejaVu Sans","Liberation Sans",sans-serif' font-size="9.4" letter-spacing="1.11" fill="#e0e0e0">-IC</text><text x="97.6" y="771" font-family='"DejaVu Sans","Liberation Sans",sans-serif' font-size="9.4" letter-spacing="0.32" fill="#e0e0e0">+CG</text><text x="122.9" y="771" font-family='"DejaVu Sans","Liberation Sans",sans-serif' font-size="9.4" letter-spacing="1.17" fill="#e0e0e0">+IC</text><text x="152.3" y="771" font-family='"Liberation Sans","DejaVu Sans",sans-serif' font-size="9.6" letter-spacing="-0.19" fill="#d0d0d0">Strike age color codes</text><text x="12.7" y="783.7" font-family='"Liberation Sans","DejaVu Sans",sans-serif' font-size="9.6" letter-spacing="-0.47" fill="#e0e0e0">Recent</text><text x="12.8" y="796.3" font-family='"Liberation Sans","DejaVu Sans",sans-serif' font-size="9.6" letter-spacing="0.21" fill="#e0e0e0">Old</text><text x="153.2" y="783.7" font-family='"Liberation Sans","DejaVu Sans",sans-serif' font-size="9.6" letter-spacing="0.43" fill="#f0d000">15+</text><text x="188.2" y="783.7" font-family='"Liberation Sans","DejaVu Sans",sans-serif' font-size="9.6" letter-spacing="0.32" fill="#f0a800">30+</text><text x="222.8" y="783.7" font-family='"Liberation Sans","DejaVu Sans",sans-serif' font-size="9.6" letter-spacing="0.47" fill="#f09000">45+</text><text x="153.4" y="796.3" font-family='"Liberation Sans","DejaVu Sans",sans-serif' font-size="9.6" letter-spacing="0.31" fill="#e87800">60+</text><text x="188.2" y="796.3" font-family='"Liberation Sans","DejaVu Sans",sans-serif' font-size="9.6" letter-spacing="0.35" fill="#e86000">75+</text><text x="222.7" y="796.3" font-family='"Liberation Sans","DejaVu Sans",sans-serif' font-size="9.6" letter-spacing="0.51" fill="#e84000">90+</text><text x="688.5" y="802.2" font-family='"Liberation Sans","DejaVu Sans",sans-serif' font-size="9.6" letter-spacing="-0.05" fill="#ffffff">©2005 Astrogenic Systems</text>
</g>
</g>
<g id="panels">
<g id="panel-boxes">
<rect x="812.5" y="8.5" width="319" height="319" rx="5" ry="5" fill="#000" stroke="#c4c4c4" stroke-width="1"/>
<rect x="812.5" y="333.5" width="319" height="114" rx="5" ry="5" fill="#000" stroke="#c4c4c4" stroke-width="1"/>
<rect x="812.5" y="453.5" width="319" height="349" rx="5" ry="5" fill="#000" stroke="#c4c4c4" stroke-width="1"/>
<rect x="819.5" y="16.5" width="57" height="17" fill="#5a0000" stroke="#c8c8c8" stroke-width="1"/>
<rect x="883.5" y="16.5" width="57" height="17" fill="#333333" stroke="#c8c8c8" stroke-width="1"/>
<rect x="994.5" y="16.5" width="127" height="17" fill="#333333" stroke="#c8c8c8" stroke-width="1"/>
<rect x="821.5" y="64.5" width="81" height="15" fill="#555555" stroke="#c8c8c8" stroke-width="1"/>
<rect x="931.5" y="64.5" width="81" height="15" fill="#555555" stroke="#c8c8c8" stroke-width="1"/>
<rect x="1041.5" y="64.5" width="81" height="15" fill="#555555" stroke="#c8c8c8" stroke-width="1"/>
<path d="M821 217.5H1124M821 358.5H1123" stroke="#a8a8a8" stroke-width="1"/>
<rect x="925.5" y="227.5" width="50" height="10" rx="1.5" fill="#000" stroke="#9a9a9a" stroke-width="1"/><rect x="926" y="228" width="9.5" height="9" fill="#ff0000"/>
<rect x="1028.5" y="227.5" width="50" height="10" rx="1.5" fill="#000" stroke="#9a9a9a" stroke-width="1"/><rect x="1029" y="228" width="36" height="9" fill="#90d0ff"/>
<rect x="925.5" y="281.5" width="50" height="10" rx="1.5" fill="#000" stroke="#9a9a9a" stroke-width="1"/><rect x="926" y="282" width="2" height="9" fill="#ff69b4"/>
<rect x="1028.5" y="281.5" width="50" height="10" rx="1.5" fill="#000" stroke="#9a9a9a" stroke-width="1"/><rect x="1029" y="282" width="2" height="9" fill="#00ff00"/>
</g>
<g id="trend-graph" shape-rendering="crispEdges">
<path d="M822 777.5H1088.5M1088.5 542V778" stroke="#c8c8c8" stroke-width="1" fill="none"/>
<path d="M1084 542.50h6M1084 581.75h6M1084 621.00h6M1084 660.25h6M1084 699.50h6M1084 738.75h6" stroke="#c8c8c8" stroke-width="1" fill="none"/>
<path d="M822.5 777v2.5M866.8 777v2.5M911.2 777v2.5M955.5 777v2.5M999.8 777v2.5M1044.2 777v2.5M1088.5 777v2.5" stroke="#c8c8c8" stroke-width="1" fill="none"/>
<path d="M997.2 751.6 L999 746.1 L1000.9 757.9 L1001.2 766.5M921.8 769.6 L922.6 761.8 L923.6 761.8 L924.6 769.6M961.5 775.1 L962.5 769.6 L965.3 769.6 L966 775.1M978.5 765.7 L980 754 L981.5 761.8 L983.5 761.8 L985.5 769.6M1012.8 769.6 L1014.2 761.8 L1016.5 761.8 L1018.8 773.6M1023.5 769.6 L1025 761.8 L1027.5 761.8 L1030 775.1M1035.2 769.6 L1037.3 761.8 L1039 754 L1040.2 761.8M1082.3 761.8 L1083.5 746.1 L1085 738.2 L1086.3 746.1 L1087.3 761.8" stroke="#9cd4ff" stroke-width="1.2" fill="none"/>
<path d="M996.1 777.5 L997.2 772 L998.6 769.6 L1000.9 769.6 L1002 777.5M981.5 769.6 L982.5 761.8 L983.2 761.8M984.5 769.6 L985.8 775.9 L987 777.5M1012.3 777.5 L1013.5 769.6 L1017.5 769.6 L1018.3 775.1M1024.2 777.5 L1025.3 769.6 L1027.8 769.6M1035.5 775.1 L1036.6 769.6 L1039.6 769.6 L1040.8 777.5" stroke="#ff0000" stroke-width="1.2" fill="none"/>
<path d="M921.2 777.5 L922.5 769.6 L923.6 769.6 L926.4 769.6 L926.6 774.4M978 777.5 L979.5 769.6 L984 769.6 L984.8 777.5M1081.3 777.5 L1082 769.6 L1085.7 769.6 L1087.6 775.9" stroke="#00e000" stroke-width="1.2" fill="none"/>
<path d="M822.5 777.5 L825.5 769.6 L828.7 769.6 L829.9 777.5 L834.2 777.5 L835.4 769.6 L838.7 769.6 L840.5 777.5 L847.3 777.5 L848.2 769.6 L849.2 761.8 L852.8 761.8 L854.2 769.6 L855.6 777.5 L859.3 777.5 L861.1 769.6 L864.8 769.6 L866.6 777.5 L909.3 777.5 L911.3 769.6 L914.5 769.6 L915.7 777.5 L918.4 777.5 L920.8 769.6 L922.4 752.4 L923.4 746.1 L924.8 754 L926.7 754 L927.9 777.5 L929.1 777.5 L930.7 769.6 L933.5 769.6 L935.8 777.5 L938.6 769.6 L947.3 769.6 L948.3 761.8 L950.5 761.8 L953.2 777.5 L953.5 777.5 L956.4 761.8 L959.6 761.8 L961.2 777.5 L962.3 761.8 L965.5 761.8 L966.3 777.5 L966.7 777.5 L968.2 754 L969.5 746.1 L971.8 746.1 L973 761.8 L974.6 777.5 L977 769.6 L979.3 746.1 L980.1 738.2 L983.7 738.2 L984.1 746.1 L984.9 761.8 L987.6 769.6 L989.6 777.5 L995 777.5 L995.7 765.7 L996.4 750 L997.2 742.2 L998.3 738.2 L999.7 738.2 L1000.5 744.5 L1000.9 756.3 L1001.6 769.6 L1002.7 777.5 L1005.8 777.5 L1007.4 769.6 L1010.5 769.6 L1011.7 777.5 L1013 761.8 L1014.5 754 L1016.9 754 L1018.3 761.8 L1019.6 777.5 L1022.4 777.5 L1024 761.8 L1025.2 754 L1027.9 754 L1029.3 765.7 L1030.7 777.5 L1034.3 777.5 L1035.4 761.8 L1037.5 754 L1039.4 738.2 L1040.4 754 L1041.8 761.8 L1043.8 777.5 L1045.3 769.6 L1048.1 769.6 L1049.7 761.8 L1052.5 761.8 L1054.4 746.1 L1055.8 754 L1057.2 761.8 L1058.8 777.5 L1070.2 777.5 L1072.2 769.6 L1075.4 769.6 L1076.6 777.5 L1078.2 769.6 L1081.3 769.6 L1082.6 746.1 L1084.1 730.4 L1085.7 730.4 L1086.8 754 L1088 777.5" stroke="#ffffff" stroke-width="1" fill="none" stroke-linejoin="miter"/>
</g>
<g id="panel-text">
<text id="date" y="353.2" font-family='"DejaVu Sans","Liberation Sans",sans-serif' font-size="16.3" font-weight="bold" fill="#00e400" xml:space="preserve"><tspan x="821.2" y="353.2">2</tspan><tspan x="833.6" y="354.6" font-size="19.5">/</tspan><tspan x="842.9" y="353.2" letter-spacing="-0.49">26</tspan><tspan x="866.8" y="354.6" font-size="19.5">/</tspan><tspan x="875.7" y="353.2" letter-spacing="-0.36">2026</tspan><tspan x="919.1" y="353.2"> 7</tspan><tspan x="935.6" y="353.2">:</tspan><tspan x="942.4" y="353.2" letter-spacing="0.15">45</tspan><tspan x="963.9" y="353.2">:</tspan><tspan x="970.1" y="353.2" letter-spacing="-0.59">19</tspan><tspan x="991.7" y="353.2" letter-spacing="-0.82"> AM</tspan></text><text x="823.5" y="29.8" font-family='"DejaVu Sans","Liberation Sans",sans-serif' font-size="12.5" font-weight="bold" letter-spacing="-0.03" fill="#d4d0c8">STRIKE</text><text x="889.4" y="29.8" font-family='"DejaVu Sans","Liberation Sans",sans-serif' font-size="12.5" font-weight="bold" letter-spacing="0.46" fill="#c0c0c0">NOISE</text><text x="997.3" y="29.9" font-family='"DejaVu Sans","Liberation Sans",sans-serif' font-size="12.5" font-weight="bold" letter-spacing="-0.04" fill="#ffffff">Bng 240°</text><text x="1074.8" y="29.9" font-family='"DejaVu Sans","Liberation Sans",sans-serif' font-size="12.5" font-weight="bold" letter-spacing="0.15" fill="#00e000">230mi</text><text x="828.3" y="76.6" font-family='"DejaVu Sans","Liberation Sans",sans-serif' font-size="12.5" letter-spacing="-0.27" fill="#e8e8e8">Strikes/min</text><text x="943.1" y="76.6" font-family='"DejaVu Sans","Liberation Sans",sans-serif' font-size="12.5" letter-spacing="-0.37" fill="#e8e8e8">Close/min</text><text x="1049.2" y="76.6" font-family='"DejaVu Sans","Liberation Sans",sans-serif' font-size="12.5" letter-spacing="-0.46" fill="#e8e8e8">Noises/min</text><text x="883.3" y="111.7" font-family='"DejaVu Sans","Liberation Sans",sans-serif' font-size="28.8" font-weight="bold" fill="#ffffff">0</text><text x="993.5" y="111.7" font-family='"DejaVu Sans","Liberation Sans",sans-serif' font-size="28.8" font-weight="bold" fill="#ffffff">0</text><text x="1102.9" y="111.7" font-family='"DejaVu Sans","Liberation Sans",sans-serif' font-size="28.8" font-weight="bold" fill="#b4b4b4">0</text><text x="826.0" y="142.9" font-family='"DejaVu Sans","Liberation Sans",sans-serif' font-size="12.5" letter-spacing="0.14" fill="#ffffff">Total Strikes</text><text x="944.1" y="142.9" font-family='"DejaVu Sans","Liberation Sans",sans-serif' font-size="12.5" letter-spacing="0.16" fill="#ffffff">Total Close</text><text x="1047.1" y="142.9" font-family='"DejaVu Sans","Liberation Sans",sans-serif' font-size="12.5" letter-spacing="0.16" fill="#c0c0c0">Total Noises</text><text x="886.8" y="161.1" font-family='"DejaVu Sans","Liberation Sans",sans-serif' font-size="12.5" letter-spacing="0.98" fill="#ffffff">75</text><text x="1004.7" y="161.1" font-family='"DejaVu Sans","Liberation Sans",sans-serif' font-size="12.5" fill="#ffffff">0</text><text x="1106.6" y="161.1" font-family='"DejaVu Sans","Liberation Sans",sans-serif' font-size="12.5" letter-spacing="0.92" fill="#ffffff">38</text><text x="819.8" y="214.1" font-family='"DejaVu Sans","Liberation Sans",sans-serif' font-size="12.5" letter-spacing="0.04" fill="#c0c0c0">Lightning type distribution</text><text x="821.0" y="237.1" font-family='"DejaVu Sans Condensed","DejaVu Sans","Liberation Sans",sans-serif' font-size="12.5" font-weight="bold" letter-spacing="-0.04" fill="#ffffff">Cloud-ground</text><text x="911.7" y="237.1" font-family='"DejaVu Sans","Liberation Sans",sans-serif' font-size="12.5" fill="#ffffff">+</text><text x="978.3" y="237.1" font-family='"DejaVu Sans","Liberation Sans",sans-serif' font-size="12.5" font-weight="bold" letter-spacing="0.31" fill="#ffffff">19%</text><text x="1014.5" y="237.1" font-family='"DejaVu Sans Condensed","DejaVu Sans","Liberation Sans",sans-serif' font-size="12.5" font-weight="bold" fill="#ffffff">−</text><text x="1081.7" y="237.1" font-family='"DejaVu Sans","Liberation Sans",sans-serif' font-size="12.5" font-weight="bold" letter-spacing="0.22" fill="#ffffff">73%</text><text x="820.8" y="260.6" font-family='"DejaVu Sans","Liberation Sans",sans-serif' font-size="12.5" letter-spacing="0.37" fill="#d0d0d0">Count</text><text x="924.5" y="260.6" font-family='"DejaVu Sans","Liberation Sans",sans-serif' font-size="12.5" font-weight="bold" letter-spacing="-0.74" fill="#ffffff">14</text><text x="1027.4" y="260.6" font-family='"DejaVu Sans","Liberation Sans",sans-serif' font-size="12.5" font-weight="bold" letter-spacing="-0.16" fill="#ffffff">55</text><text x="820.5" y="290.9" font-family='"DejaVu Sans Condensed","DejaVu Sans","Liberation Sans",sans-serif' font-size="12.5" font-weight="bold" letter-spacing="-0.01" fill="#ffffff">Intracloud</text><text x="911.7" y="290.9" font-family='"DejaVu Sans","Liberation Sans",sans-serif' font-size="12.5" fill="#ffffff">+</text><text x="978.7" y="290.9" font-family='"DejaVu Sans","Liberation Sans",sans-serif' font-size="12.5" font-weight="bold" letter-spacing="1.05" fill="#ffffff">4%</text><text x="1014.5" y="290.9" font-family='"DejaVu Sans Condensed","DejaVu Sans","Liberation Sans",sans-serif' font-size="12.5" font-weight="bold" fill="#ffffff">−</text><text x="1081.7" y="290.9" font-family='"DejaVu Sans","Liberation Sans",sans-serif' font-size="12.5" font-weight="bold" letter-spacing="0.95" fill="#ffffff">4%</text><text x="820.8" y="314.3" font-family='"DejaVu Sans","Liberation Sans",sans-serif' font-size="12.5" letter-spacing="0.37" fill="#d0d0d0">Count</text><text x="924.7" y="314.3" font-family='"DejaVu Sans","Liberation Sans",sans-serif' font-size="12.5" font-weight="bold" fill="#ffffff">3</text><text x="1028.0" y="314.3" font-family='"DejaVu Sans","Liberation Sans",sans-serif' font-size="12.5" font-weight="bold" fill="#ffffff">3</text><text x="820.3" y="387.7" font-family='"DejaVu Sans","Liberation Sans",sans-serif' font-size="12.5" letter-spacing="0.07" fill="#ffffff">Squelch</text><text x="908.9" y="387.7" font-family='"DejaVu Sans","Liberation Sans",sans-serif' font-size="12.5" fill="#ffffff">0</text><text x="980.2" y="387.7" font-family='"DejaVu Sans","Liberation Sans",sans-serif' font-size="12.5" letter-spacing="0.44" fill="#ffffff">Upload</text><text x="1060.2" y="387.7" font-family='"DejaVu Sans","Liberation Sans",sans-serif' font-size="12.5" letter-spacing="0.24" fill="#c0c0c0">Disabled</text><text x="820.2" y="407.6" font-family='"DejaVu Sans","Liberation Sans",sans-serif' font-size="12.5" letter-spacing="0.28" fill="#ffffff">Persistence</text><text x="908.5" y="407.6" font-family='"DejaVu Sans","Liberation Sans",sans-serif' font-size="12.5" fill="#ffffff">90 min</text><text x="980.7" y="407.6" font-family='"DejaVu Sans","Liberation Sans",sans-serif' font-size="12.5" letter-spacing="0.32" fill="#ffffff">Capture</text><text x="1061.2" y="407.6" font-family='"DejaVu Sans","Liberation Sans",sans-serif' font-size="12.5" letter-spacing="-0.33" fill="#00e000">Active</text><text x="820.3" y="427.8" font-family='"DejaVu Sans","Liberation Sans",sans-serif' font-size="12.5" letter-spacing="0.28" fill="#ffffff">Range</text><text x="908.3" y="427.8" font-family='"DejaVu Sans","Liberation Sans",sans-serif' font-size="12.5" letter-spacing="0.04" fill="#ffffff">313 mi</text><text x="980.2" y="427.8" font-family='"DejaVu Sans","Liberation Sans",sans-serif' font-size="12.5" letter-spacing="-0.11" fill="#ffffff">Receiver</text><text x="1060.1" y="427.8" font-family='"DejaVu Sans","Liberation Sans",sans-serif' font-size="12.5" letter-spacing="0.35" fill="#00e000">Enabled</text><text x="820.3" y="474.8" font-family='"DejaVu Sans","Liberation Sans",sans-serif' font-size="12.5" letter-spacing="-0.07" fill="#c0c0c0">Uptime</text><text x="908.8" y="474.8" font-family='"DejaVu Sans","Liberation Sans",sans-serif' font-size="12.5" letter-spacing="0.21" fill="#ffffff">1075:30</text><text x="980.2" y="474.8" font-family='"DejaVu Sans","Liberation Sans",sans-serif' font-size="12.5" letter-spacing="0.14" fill="#c0c0c0">Peak time</text><text x="1060.3" y="474.8" font-family='"DejaVu Sans","Liberation Sans",sans-serif' font-size="12.5" letter-spacing="0.55" fill="#c0c0c0">Plot</text><text x="820.2" y="498" font-family='"DejaVu Sans","Liberation Sans",sans-serif' font-size="12.5" letter-spacing="0.4" fill="#c0c0c0">Peak rate</text><text x="908.5" y="498" font-family='"DejaVu Sans","Liberation Sans",sans-serif' font-size="12.5" letter-spacing="0.16" fill="#ffffff">6/min</text><text x="980.2" y="498" font-family='"DejaVu Sans","Liberation Sans",sans-serif' font-size="12.5" letter-spacing="0.23" fill="#ffffff">7:44 AM</text><text x="1060.3" y="498" font-family='"DejaVu Sans","Liberation Sans",sans-serif' font-size="12.5" letter-spacing="0.21" fill="#ffffff">Strike</text><text x="822.3" y="527.8" font-family='"DejaVu Sans","Liberation Sans",sans-serif' font-size="12.5" letter-spacing="0.26" fill="#c0c0c0">Trend graph</text><text x="907.3" y="527.8" font-family='"DejaVu Sans","Liberation Sans",sans-serif' font-size="12.5" letter-spacing="-0.05" fill="#ffffff">60 min</text><text x="1090.8" y="546.6" font-family='"DejaVu Sans Condensed","DejaVu Sans","Liberation Sans",sans-serif' font-size="13" letter-spacing="0.3" fill="#c0c0c0">30</text><text x="1091.0" y="625.1" font-family='"DejaVu Sans Condensed","DejaVu Sans","Liberation Sans",sans-serif' font-size="13" letter-spacing="0.12" fill="#c0c0c0">20</text><text x="1090.6" y="703.6" font-family='"DejaVu Sans Condensed","DejaVu Sans","Liberation Sans",sans-serif' font-size="13" letter-spacing="0.21" fill="#c0c0c0">10</text><text x="819.3" y="792.8" font-family='"DejaVu Sans Condensed","DejaVu Sans","Liberation Sans",sans-serif' font-size="13" letter-spacing="0.11" fill="#c0c0c0">60</text><text x="862.9" y="792.8" font-family='"DejaVu Sans Condensed","DejaVu Sans","Liberation Sans",sans-serif' font-size="13" letter-spacing="0.4" fill="#c0c0c0">50</text><text x="908.3" y="792.8" font-family='"DejaVu Sans Condensed","DejaVu Sans","Liberation Sans",sans-serif' font-size="13" letter-spacing="0.1" fill="#c0c0c0">40</text><text x="951.5" y="792.8" font-family='"DejaVu Sans Condensed","DejaVu Sans","Liberation Sans",sans-serif' font-size="13" letter-spacing="0.7" fill="#c0c0c0">30</text><text x="996.7" y="792.8" font-family='"DejaVu Sans Condensed","DejaVu Sans","Liberation Sans",sans-serif' font-size="13" letter-spacing="-0.28" fill="#c0c0c0">20</text><text x="1041.4" y="792.8" font-family='"DejaVu Sans Condensed","DejaVu Sans","Liberation Sans",sans-serif' font-size="13" letter-spacing="-0.19" fill="#c0c0c0">10</text><text x="1086.8" y="792.8" font-family='"DejaVu Sans Condensed","DejaVu Sans","Liberation Sans",sans-serif' font-size="13" fill="#c0c0c0">0</text><text x="1098.9" y="792.8" font-family='"DejaVu Sans Condensed","DejaVu Sans","Liberation Sans",sans-serif' font-size="13" letter-spacing="-1.0" fill="#c0c0c0">min</text>
</g>
</g>
</svg>
</body>
</html>
